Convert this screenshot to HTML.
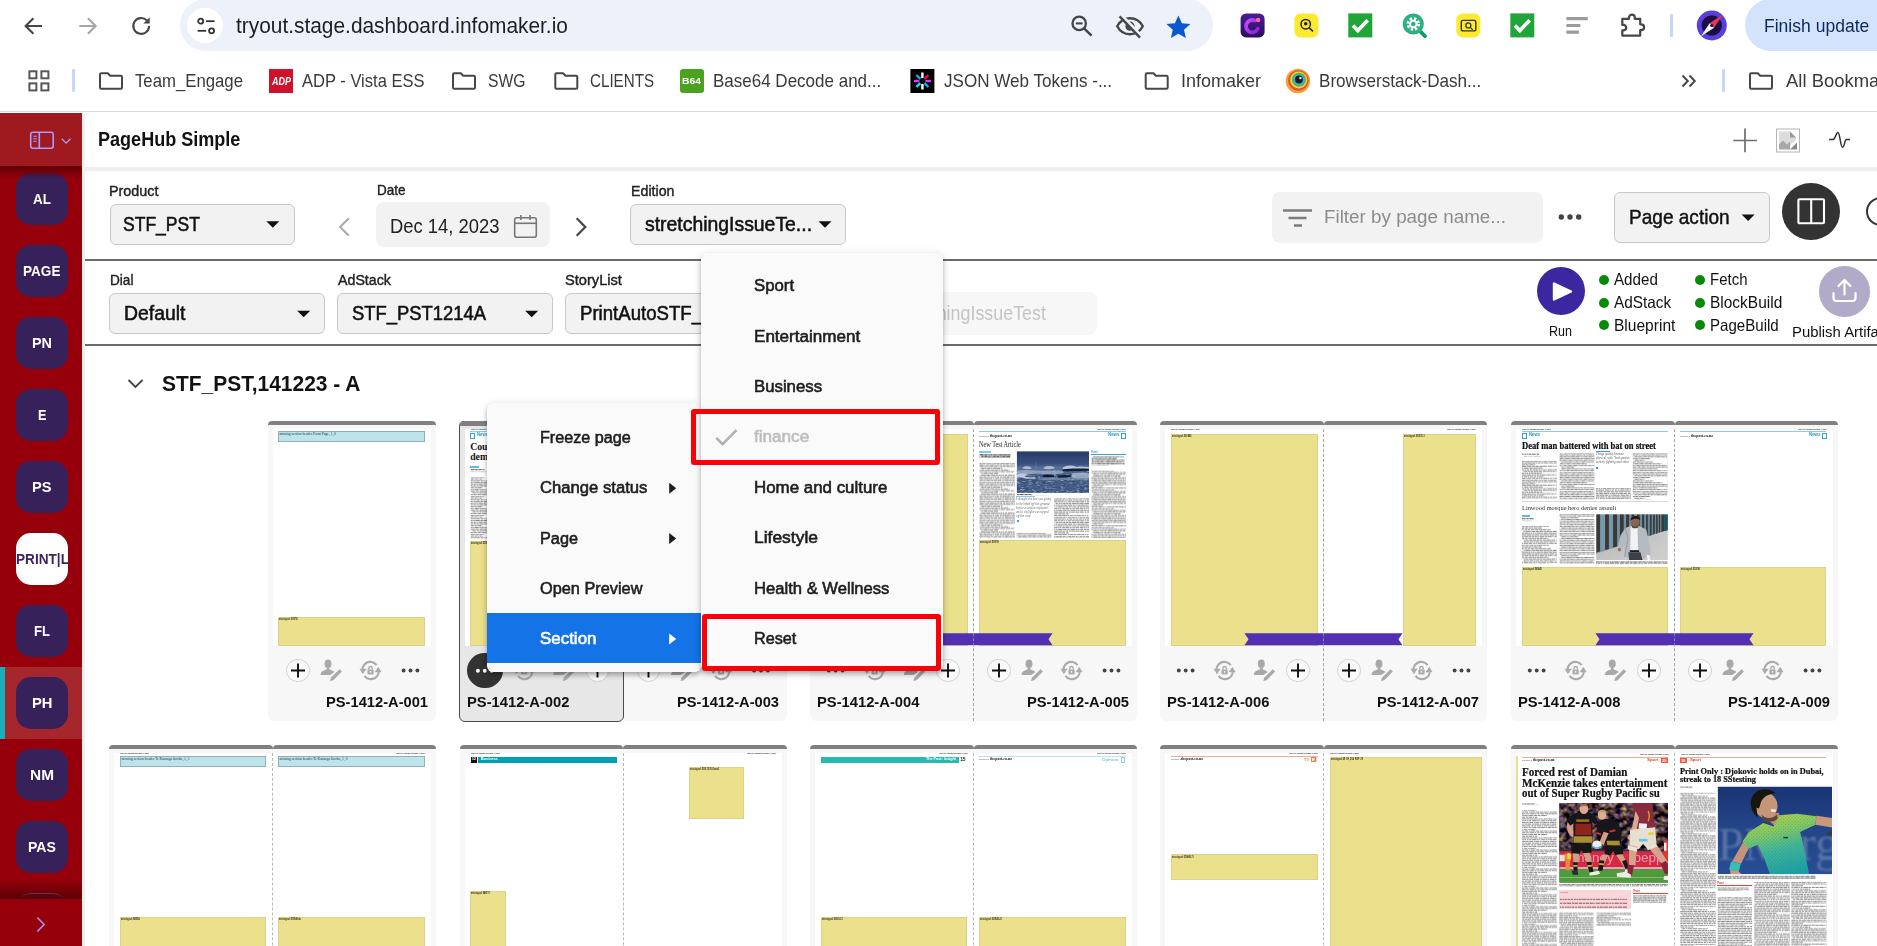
<!DOCTYPE html>
<html lang="en"><head><meta charset="utf-8"><title>PageHub Simple</title>
<style>
html,body{margin:0;padding:0;}
body{width:1877px;height:946px;overflow:hidden;position:relative;background:#fff;
 font-family:"Liberation Sans",sans-serif;}
#root{position:absolute;left:0;top:0;width:1877px;height:946px;overflow:hidden;}
#root div,#root svg,#root span.t{position:absolute;}
span.t{white-space:nowrap;line-height:1;transform-origin:0 50%;display:block;}
.tx{overflow:hidden;}
</style></head>
<body><div id="root">
<div style="left:85.00px;top:171.30px;width:1800.00px;height:780.00px;background:#fff;border-radius:4px 0 0 0;"></div>
<span class="t" style="left:109.20px;top:184.00px;font-size:14.53px;color:#222;-webkit-text-stroke:0.4px #222;transform:scaleX(0.9882);">Product</span>
<div style="left:109.50px;top:204.30px;width:185.00px;height:40.30px;background:#f2f2f2;border-radius:6px;box-sizing:border-box;border:1px solid #c8c8c8;"></div>
<span class="t" style="left:122.80px;top:214.00px;font-size:20.35px;color:#111;-webkit-text-stroke:0.55px #111;transform:scaleX(0.8620);">STF_PST</span>
<svg style="left:266px;top:221px;" width="14.00" height="7.50" viewBox="-0.300 -0.300 14.000 7.500"><path d="M0 0h13l-6.5 6.5z" fill="#111"/></svg>
<svg style="left:338px;top:217px;" width="14.00" height="21.00" viewBox="0.000 0.000 14.000 21.000"><path d="M10.800 1.200L2.200 10l8.600 8.800" fill="none" stroke="#adadad" stroke-width="2.200"/></svg>
<span class="t" style="left:377.30px;top:183.00px;font-size:14.53px;color:#222;-webkit-text-stroke:0.4px #222;transform:scaleX(0.9283);">Date</span>
<div style="left:376.00px;top:202.00px;width:174.00px;height:45.00px;background:#f2f2f2;border-radius:8px;"></div>
<span class="t" style="left:390.30px;top:216.00px;font-size:20.35px;color:#222;transform:scaleX(0.9046);">Dec 14, 2023</span>
<svg style="left:513px;top:214px;" width="25.00" height="25.00" viewBox="-0.500 -0.500 25.000 25.000"><rect x="1.200" y="3.200" width="21.600" height="19.600" rx="2" fill="none" stroke="#777" stroke-width="1.600"/><path d="M1.200 8.800h21.600" stroke="#777" stroke-width="1.600"/><path d="M7.400 0.500v5M16.600 0.500v5" stroke="#777" stroke-width="1.600"/></svg>
<svg style="left:574px;top:217px;" width="14.00" height="21.00" viewBox="-0.500 0.000 14.000 21.000"><path d="M2.200 1.200L10.800 10l-8.600 8.800" fill="none" stroke="#454545" stroke-width="2.200"/></svg>
<span class="t" style="left:630.80px;top:184.00px;font-size:14.53px;color:#222;-webkit-text-stroke:0.4px #222;transform:scaleX(0.9788);">Edition</span>
<div style="left:630.00px;top:204.30px;width:216.00px;height:40.30px;background:#f2f2f2;border-radius:6px;box-sizing:border-box;border:1px solid #c8c8c8;"></div>
<span class="t" style="left:645.00px;top:214.00px;font-size:20.58px;color:#111;-webkit-text-stroke:0.55px #111;transform:scaleX(0.9421);">stretchingIssueTe...</span>
<svg style="left:818px;top:221px;" width="14.00" height="7.50" viewBox="-0.500 -0.300 14.000 7.500"><path d="M0 0h13l-6.5 6.5z" fill="#111"/></svg>
<div style="left:1271.50px;top:192.20px;width:271.00px;height:51.00px;background:#f2f2f2;border-radius:8px;"></div>
<svg style="left:1283px;top:209px;" width="31.00" height="19.00" viewBox="0.000 0.000 31.000 19.000"><path d="M0 1.500h29M5.500 9h18M11 16.500h8" stroke="#7d7d7d" stroke-width="2.600"/></svg>
<span class="t" style="left:1324.00px;top:208.00px;font-size:18.90px;color:#8c8c8c;transform:scaleX(0.9959);">Filter by page name...</span>
<svg style="left:1558px;top:213px;" width="25.00" height="8.00" viewBox="0.000 -0.500 25.000 8.000"><circle cx="3.300" cy="3.500" r="2.700" fill="#444"/><circle cx="12" cy="3.500" r="2.700" fill="#444"/><circle cx="20.700" cy="3.500" r="2.700" fill="#444"/></svg>
<div style="left:1614.40px;top:192.20px;width:156.00px;height:51.00px;background:#f2f2f2;border-radius:6px;box-sizing:border-box;border:1px solid #c8c8c8;"></div>
<span class="t" style="left:1628.80px;top:208.00px;font-size:19.75px;color:#111;-webkit-text-stroke:0.45px #111;transform:scaleX(0.9642);">Page action</span>
<svg style="left:1741px;top:214px;" width="14.00" height="7.50" viewBox="-0.600 -0.500 14.000 7.500"><path d="M0 0h13l-6.5 6.5z" fill="#111"/></svg>
<div style="left:1782.00px;top:182.60px;width:58.00px;height:57.40px;background:#333;border-radius:50%;"></div>
<svg style="left:1796px;top:197px;" width="31.00" height="29.00" viewBox="0.000 -0.500 31.000 29.000"><rect x="2.400" y="1.700" width="25.600" height="24.100" rx="1" fill="none" stroke="#fff" stroke-width="2.100"/><path d="M15.200 1.700v24.100" stroke="#fff" stroke-width="2.100"/></svg>
<div style="left:1865.80px;top:196.60px;width:29.40px;height:29.40px;border-radius:50%;box-sizing:border-box;border:2.600px solid #333;"></div>
<div style="left:85.00px;top:259.20px;width:1800.00px;height:2.00px;background:#6a6a6a;"></div>
<span class="t" style="left:109.60px;top:273.00px;font-size:14.53px;color:#222;-webkit-text-stroke:0.4px #222;transform:scaleX(0.9385);">Dial</span>
<div style="left:109.00px;top:293.20px;width:216.00px;height:40.60px;background:#f2f2f2;border-radius:6px;box-sizing:border-box;border:1px solid #c8c8c8;"></div>
<span class="t" style="left:124.00px;top:304.00px;font-size:19.77px;color:#111;-webkit-text-stroke:0.55px #111;transform:scaleX(0.9803);">Default</span>
<svg style="left:297px;top:310px;" width="14.00" height="7.50" viewBox="-0.200 -0.800 14.000 7.500"><path d="M0 0h13l-6.5 6.5z" fill="#111"/></svg>
<span class="t" style="left:337.60px;top:273.00px;font-size:14.53px;color:#222;-webkit-text-stroke:0.4px #222;transform:scaleX(0.9791);">AdStack</span>
<div style="left:337.00px;top:293.20px;width:216.00px;height:40.60px;background:#f2f2f2;border-radius:6px;box-sizing:border-box;border:1px solid #c8c8c8;"></div>
<span class="t" style="left:351.50px;top:304.00px;font-size:19.77px;color:#111;-webkit-text-stroke:0.55px #111;transform:scaleX(0.9310);">STF_PST1214A</span>
<svg style="left:525px;top:310px;" width="14.00" height="7.50" viewBox="-0.200 -0.800 14.000 7.500"><path d="M0 0h13l-6.5 6.5z" fill="#111"/></svg>
<span class="t" style="left:565.30px;top:273.00px;font-size:14.53px;color:#222;-webkit-text-stroke:0.4px #222;transform:scaleX(1.0081);">StoryList</span>
<div style="left:565.00px;top:293.20px;width:216.00px;height:40.60px;background:#f2f2f2;border-radius:6px;box-sizing:border-box;border:1px solid #c8c8c8;"></div>
<span class="t" style="left:579.50px;top:304.00px;font-size:19.77px;color:#111;-webkit-text-stroke:0.55px #111;transform:scaleX(0.9411);">PrintAutoSTF_</span>
<div style="left:880.00px;top:292.00px;width:217.00px;height:43.00px;background:#f7f7f7;border-radius:8px;"></div>
<span class="t" style="left:893.00px;top:304.00px;font-size:19.89px;color:#c4c4c4;transform:scaleX(0.8987);">stretchingIssueTest</span>
<div style="left:1536.80px;top:266.80px;width:48.20px;height:48.20px;background:#3d27a0;border-radius:50%;"></div>
<svg style="left:1551px;top:280px;" width="24.00" height="24.00" viewBox="0.000 0.000 24.000 24.000"><path d="M3 3.500v16l17-8z" fill="#fff" stroke="#fff" stroke-width="2.400" stroke-linejoin="round"/></svg>
<span class="t" style="left:1549.30px;top:325.00px;font-size:13.95px;color:#111;transform:scaleX(0.8985);">Run</span>
<div style="left:1599.00px;top:274.70px;width:10.00px;height:10.00px;background:#078a07;border-radius:50%;"></div>
<span class="t" style="left:1614.20px;top:271.00px;font-size:16.28px;color:#111;transform:scaleX(0.9326);">Added</span>
<div style="left:1695.00px;top:274.70px;width:10.00px;height:10.00px;background:#078a07;border-radius:50%;"></div>
<span class="t" style="left:1710.40px;top:271.00px;font-size:16.28px;color:#111;transform:scaleX(0.9211);">Fetch</span>
<div style="left:1599.00px;top:297.55px;width:10.00px;height:10.00px;background:#078a07;border-radius:50%;"></div>
<span class="t" style="left:1614.20px;top:294.00px;font-size:16.28px;color:#111;transform:scaleX(0.9435);">AdStack</span>
<div style="left:1695.00px;top:297.55px;width:10.00px;height:10.00px;background:#078a07;border-radius:50%;"></div>
<span class="t" style="left:1710.40px;top:294.00px;font-size:16.28px;color:#111;transform:scaleX(0.9512);">BlockBuild</span>
<div style="left:1599.00px;top:320.40px;width:10.00px;height:10.00px;background:#078a07;border-radius:50%;"></div>
<span class="t" style="left:1614.20px;top:317.00px;font-size:16.28px;color:#111;transform:scaleX(0.9556);">Blueprint</span>
<div style="left:1695.00px;top:320.40px;width:10.00px;height:10.00px;background:#078a07;border-radius:50%;"></div>
<span class="t" style="left:1710.40px;top:317.00px;font-size:16.28px;color:#111;transform:scaleX(0.9270);">PageBuild</span>
<div style="left:1819.00px;top:266.20px;width:50.50px;height:50.50px;background:#b1aac8;border-radius:50%;"></div>
<svg style="left:1831px;top:278px;" width="28.00" height="27.00" viewBox="0.000 0.000 28.000 27.000"><path d="M13.500 16.500V2.500M7.500 8l6-6 6 6" fill="none" stroke="#fff" stroke-width="2.200" stroke-linecap="round" stroke-linejoin="round"/><path d="M2.500 15v5a3 3 0 0 0 3 3h16a3 3 0 0 0 3-3v-5" fill="none" stroke="#fff" stroke-width="2.200" stroke-linecap="round"/></svg>
<span class="t" style="left:1791.80px;top:325.00px;font-size:14.24px;color:#111;transform:scaleX(1.0460);">Publish Artifacts</span>
<div style="left:85.00px;top:343.80px;width:1800.00px;height:2.00px;background:#6a6a6a;"></div>
<svg style="left:127px;top:378px;" width="18.00" height="12.00" viewBox="0.000 -0.500 18.000 12.000"><path d="M1.500 1.500l7 7 7-7" fill="none" stroke="#444" stroke-width="1.800"/></svg>
<span class="t" style="left:161.60px;top:373.00px;font-size:22.38px;color:#111;font-weight:700;transform:scaleX(0.9367);">STF_PST,141223 - A</span>
<div style="left:85.00px;top:112.50px;width:1800.00px;height:54.00px;background:#fff;border-radius:4px 0 0 4px;"></div>
<div style="left:85.00px;top:166.50px;width:1800.00px;height:4.80px;background:#efefef;"></div>
<span class="t" style="left:98.40px;top:129.00px;font-size:20.06px;color:#111;font-weight:700;transform:scaleX(0.9003);">PageHub Simple</span>
<svg style="left:1733px;top:128px;" width="25.00" height="25.00" viewBox="0.000 -0.500 25.000 25.000"><path d="M12 0v23.800M0.300 12h23.600" stroke="#6e6e6e" stroke-width="1.700"/></svg>
<svg style="left:1776px;top:128px;" width="25.00" height="25.00" viewBox="0.000 -0.500 25.000 25.000"><rect x="0.500" y="0.500" width="23" height="23" fill="#fff" stroke="#b5b5b5" stroke-width="1"/><path d="M3 3h11l6 6v2l-9 9H3z" fill="#dcdcdc"/><path d="M14 3v6h6z" fill="#9a9a9a"/><path d="M3 16l4-4 4 4 3-3v8H3z" fill="#a8a8a8"/><path d="M14 21l7-7v7z" fill="#8a8a8a"/></svg>
<svg style="left:1828px;top:130px;" width="24.00" height="20.00" viewBox="-0.500 -0.500 24.000 20.000"><path d="M0.600 9.100H4.400C6.600 9.100 7.600 2.100 9.400 2.100C11.600 2.100 11.900 16.800 14 16.800C15.900 16.800 16.200 9.100 18 9.100H21.500" fill="none" stroke="#333" stroke-width="1.500"/></svg>
<div style="left:268.00px;top:420.80px;width:168.00px;height:300.00px;background:#f7f7f7;border-radius:5px 5px 6px 6px;"></div>
<div style="left:268.00px;top:420.80px;width:168.00px;height:4.50px;background:#808080;border-radius:5px 5px 0 0;"></div>
<div style="left:272.50px;top:428.80px;width:158.50px;height:217.20px;background:#fff;overflow:hidden;"><div style="left:5.40px;top:2.50px;width:147.10px;height:10.40px;background:#bce4ea;box-sizing:border-box;border:0.5px solid #8fb0b5;"><span class="t" style="left:0.50px;top:0.60px;font-size:3.6px;line-height:1;color:#234;font-family:'Liberation Serif',serif;">missing section header Front Page_1_0</span></div><div style="left:5.50px;top:188.00px;width:147.00px;height:29.30px;background:#ebe08b;box-sizing:border-box;border:0.5px solid #dcd188;"><span class="t" style="left:0.20px;top:0.10px;font-size:2.9px;line-height:1;color:#221;font-weight:700;transform:scaleX(0.7069);">missing ad: 519755</span></div></div>
<div style="left:286.20px;top:658.70px;width:23.60px;height:23.60px;background:#fafafa;border-radius:50%;box-sizing:border-box;border:1px solid #d2d2d2;"></div><svg style="left:290px;top:662px;" width="17.00" height="17.00" viewBox="-0.000 -0.500 17.000 17.000"><path d="M8 1v14M1 8h14" stroke="#111" stroke-width="1.900"/></svg>
<svg style="left:320px;top:659px;" width="23.00" height="23.00" viewBox="-0.000 -0.500 23.000 23.000"><ellipse cx="8" cy="4.300" rx="3.500" ry="4.300" fill="#a9a9a9"/><path d="M0.500 15.600c0-2.600 1.200-4 3.300-4.700l2.700-1 .300-1.600h2.400l.300 1.600 2.700 1c1 .350 1.800.900 2.300 1.700L10.200 15.600z" fill="#a9a9a9"/><path d="M10 21.600l.900-3.300 8.600-8.600 2.400 2.400-8.600 8.600z" fill="#a9a9a9"/></svg>
<svg style="left:359px;top:660px;" width="24.00" height="21.00" viewBox="-0.000 -0.500 24.000 21.000"><g fill="none" stroke="#ababab" stroke-width="2.100"><path d="M4.300 12.800A7.800 7.800 0 0 1 17.600 4.700"/><path d="M18.800 7.200A7.800 7.800 0 0 1 5.500 15.300"/></g><path d="M0.400 8.300h7.400l-4 5z" fill="#ababab"/><path d="M22.700 11.700h-7.400l4-5z" fill="#ababab"/><rect x="8.400" y="8.900" width="6.200" height="5" rx="0.700" fill="#ababab"/><path d="M9.800 9.100V7.700a1.700 1.700 0 0 1 3.400 0v1.400" fill="none" stroke="#ababab" stroke-width="1.300"/><circle cx="11.500" cy="11.400" r="0.800" fill="#f7f7f7"/></svg>
<svg style="left:400px;top:667px;" width="21.00" height="7.00" viewBox="-0.500 -0.500 21.000 7.000"><circle cx="3.100" cy="3" r="1.950" fill="#444"/><circle cx="10" cy="3" r="1.950" fill="#444"/><circle cx="16.900" cy="3" r="1.950" fill="#444"/></svg>
<span class="t" style="left:326.10px;top:695.00px;font-size:14.83px;color:#111;font-weight:700;transform:scaleX(0.9902);">PS-1412-A-001</span>
<div style="left:623.00px;top:420.80px;width:163.50px;height:300.00px;background:#f7f7f7;border-radius:5px 5px 6px 0;"></div>
<div style="left:623.00px;top:420.80px;width:163.50px;height:4.50px;background:#808080;border-radius:5px 5px 0 0;"></div>
<div style="left:623.00px;top:428.80px;width:158.50px;height:217.20px;background:#fff;overflow:hidden;"></div>
<div style="left:636.70px;top:658.70px;width:23.60px;height:23.60px;background:#fafafa;border-radius:50%;box-sizing:border-box;border:1px solid #d2d2d2;"></div><svg style="left:640px;top:662px;" width="17.00" height="17.00" viewBox="-0.500 -0.500 17.000 17.000"><path d="M8 1v14M1 8h14" stroke="#111" stroke-width="1.900"/></svg>
<svg style="left:670px;top:659px;" width="23.00" height="23.00" viewBox="-0.500 -0.500 23.000 23.000"><ellipse cx="8" cy="4.300" rx="3.500" ry="4.300" fill="#a9a9a9"/><path d="M0.500 15.600c0-2.600 1.200-4 3.300-4.700l2.700-1 .300-1.600h2.400l.300 1.600 2.700 1c1 .350 1.800.900 2.300 1.700L10.200 15.600z" fill="#a9a9a9"/><path d="M10 21.600l.900-3.300 8.600-8.600 2.400 2.400-8.600 8.600z" fill="#a9a9a9"/></svg>
<svg style="left:709px;top:660px;" width="24.00" height="21.00" viewBox="-0.500 -0.500 24.000 21.000"><g fill="none" stroke="#ababab" stroke-width="2.100"><path d="M4.300 12.800A7.800 7.800 0 0 1 17.600 4.700"/><path d="M18.800 7.200A7.800 7.800 0 0 1 5.500 15.300"/></g><path d="M0.400 8.300h7.400l-4 5z" fill="#ababab"/><path d="M22.700 11.700h-7.400l4-5z" fill="#ababab"/><rect x="8.400" y="8.900" width="6.200" height="5" rx="0.700" fill="#ababab"/><path d="M9.800 9.100V7.700a1.700 1.700 0 0 1 3.400 0v1.400" fill="none" stroke="#ababab" stroke-width="1.300"/><circle cx="11.500" cy="11.400" r="0.800" fill="#f7f7f7"/></svg>
<svg style="left:751px;top:667px;" width="21.00" height="7.00" viewBox="-0.000 -0.500 21.000 7.000"><circle cx="3.100" cy="3" r="1.950" fill="#444"/><circle cx="10" cy="3" r="1.950" fill="#444"/><circle cx="16.900" cy="3" r="1.950" fill="#444"/></svg>
<span class="t" style="left:676.60px;top:695.00px;font-size:14.83px;color:#111;font-weight:700;transform:scaleX(0.9902);">PS-1412-A-003</span>
<div style="left:459.00px;top:420.80px;width:164.70px;height:301.20px;background:#e7e7e7;border-radius:5px 5px 6px 6px;box-sizing:border-box;border:1.200px solid #4a4a4a;"></div>
<div style="left:459.00px;top:420.80px;width:164.70px;height:5.00px;background:#808080;border-radius:5px 5px 0 0;"></div>
<div style="left:464.50px;top:428.80px;width:158.50px;height:217.20px;background:#fff;overflow:hidden;"><span class="t" style="left:6.00px;top:0.40px;font-size:2.4px;line-height:1;color:#222;font-weight:700;transform:scaleX(0.6182);">THE POST  Thursday, December 14, 2023</span><div style="left:5.70px;top:2.70px;width:146.00px;height:0.90px;background:#86cdea;"></div><div style="left:5.70px;top:4.20px;width:4.60px;height:5.60px;background:#fff;box-sizing:border-box;border:0.8px solid #2aa5dc;"></div><span class="t" style="left:12.30px;top:4.70px;font-size:4.7px;line-height:1.0;color:#1e9bd7;font-weight:700;transform:scaleX(0.9122);">News</span><span class="t" style="left:5.70px;top:13.00px;font-size:9.77px;color:#111;font-weight:700;font-family:'Liberation Serif',serif;">Cou</span><span class="t" style="left:5.70px;top:23.00px;font-size:9.77px;color:#111;font-weight:700;font-family:'Liberation Serif',serif;">dem</span><div style="left:5.70px;top:37.00px;width:9.00px;height:2.30px;background:#5bbde6;"></div><svg style="left:5px;top:40px;" width="15.00" height="2.20" viewBox="-0.700 -0.200 15.000 2.200"><defs><pattern id="lp1" width="14" height="18.70" patternUnits="userSpaceOnUse"><g stroke="#222" stroke-width="0.9" fill="none"><path d="M0 0.45H14.0" stroke-dasharray="3.6 0.5 3.0 0.6 3.6 0.5 1.8 0.6"/><path d="M0 2.15H10.8" stroke-dasharray="4.4 0.5 1.2 0.8 3.0 0.6 1.2 0.5 4.4 0.6"/><path d="M0 3.85H14.0" stroke-dasharray="3.0 0.6 2.4 0.8 2.4 0.6 1.8 0.8 2.4 0.8"/><path d="M0 5.55H14.0" stroke-dasharray="1.8 0.6 3.6 0.6 1.2 0.8 1.2 0.5 1.8 0.5 2.4 0.8"/><path d="M0 7.25H14.0" stroke-dasharray="2.4 0.8 3.6 0.6 3.0 0.6 1.2 0.8 3.6 0.6"/><path d="M0 8.95H14.0" stroke-dasharray="1.8 0.6 1.8 0.5 1.2 0.6 2.4 0.8 4.4 0.5"/><path d="M0 10.65H14.0" stroke-dasharray="1.8 0.6 3.6 0.6 3.6 0.5 1.2 0.5 3.0 0.5"/><path d="M0 12.35H5.1" stroke-dasharray="2.4 0.6 3.0 0.6 1.8 0.8 2.4 0.5 3.6 0.8"/><path d="M0 14.05H9.7" stroke-dasharray="1.8 0.8 4.4 0.5 1.8 0.6 2.4 0.6 3.0 0.5"/><path d="M0 15.75H14.0" stroke-dasharray="2.4 0.5 1.2 0.6 3.0 0.6 3.6 0.5 3.0 0.6"/><path d="M0 17.45H14.0" stroke-dasharray="3.6 0.6 3.6 0.6 3.6 0.6 1.2 0.5"/></g></pattern></defs><rect width="14" height="1.2" fill="url(#lp1)"/></svg><svg style="left:5px;top:42px;" width="18.00" height="1.80" viewBox="-0.700 -0.400 18.000 1.800"><defs><pattern id="lp2" width="17" height="18.70" patternUnits="userSpaceOnUse"><g stroke="#888" stroke-width="0.8" fill="none"><path d="M0 0.40H17.0" stroke-dasharray="3.6 0.6 2.4 0.6 2.4 0.5 4.4 0.8 3.6 0.8"/><path d="M0 2.10H17.0" stroke-dasharray="1.8 0.6 4.4 0.6 2.4 0.8 2.4 0.8 4.4 0.8"/><path d="M0 3.80H17.0" stroke-dasharray="1.2 0.5 1.8 0.5 4.4 0.8 3.6 0.8 1.8 0.6 3.6 0.5"/><path d="M0 5.50H17.0" stroke-dasharray="2.4 0.6 1.2 0.8 3.0 0.8 3.6 0.5 4.4 0.6"/><path d="M0 7.20H17.0" stroke-dasharray="1.2 0.6 2.4 0.8 1.2 0.8 2.4 0.5 3.0 0.6 3.6 0.5"/><path d="M0 8.90H17.0" stroke-dasharray="3.6 0.5 1.8 0.8 2.4 0.5 2.4 0.5 2.4 0.5 4.4 0.8"/><path d="M1.6 10.60H17.0" stroke-dasharray="1.8 0.6 4.4 0.6 2.4 0.6 1.8 0.6 1.2 0.8 3.6 0.6"/><path d="M1.6 12.30H17.0" stroke-dasharray="2.4 0.5 3.0 0.8 2.4 0.6 4.4 0.5 4.4 0.5"/><path d="M0 14.00H17.0" stroke-dasharray="4.4 0.6 1.2 0.8 3.6 0.8 4.4 0.5 3.0 0.6"/><path d="M0 15.70H17.0" stroke-dasharray="3.6 0.6 1.8 0.5 2.4 0.5 4.4 0.5 1.8 0.5 3.6 0.6"/><path d="M0 17.40H17.0" stroke-dasharray="2.4 0.5 1.8 0.6 1.2 0.8 2.4 0.6 4.4 0.6 3.0 0.5"/></g></pattern></defs><rect width="17" height="0.8" fill="url(#lp2)"/></svg><svg style="left:5px;top:48px;" width="35.80" height="62.50" viewBox="-0.700 -0.200 35.800 62.500"><defs><pattern id="lp3" width="34.8" height="18.92" patternUnits="userSpaceOnUse"><g stroke="#474747" stroke-width="0.64" fill="none"><path d="M0 0.32H13.7" stroke-dasharray="4.4 0.6 3.6 0.5 1.8 0.5 1.8 0.5 4.4 0.8 1.2 0.8 1.8 0.8 2.4 0.8 1.2 0.6 3.0 0.8 4.4 0.5"/><path d="M0 2.04H12.3" stroke-dasharray="3.0 0.8 2.4 0.6 1.2 0.8 2.4 0.8 1.8 0.8 2.4 0.6 1.2 0.8 4.4 0.6 4.4 0.5 1.8 0.6 2.4 0.8"/><path d="M0 3.76H34.8" stroke-dasharray="1.8 0.6 2.4 0.6 3.6 0.8 2.4 0.5 1.2 0.8 3.0 0.5 4.4 0.5 2.4 0.6 1.8 0.8 3.6 0.5 3.0 0.8"/><path d="M0 5.48H34.8" stroke-dasharray="1.8 0.8 1.8 0.5 4.4 0.5 2.4 0.6 4.4 0.8 4.4 0.5 3.0 0.5 2.4 0.6 1.2 0.6 2.4 0.6 2.4 0.5"/><path d="M0 7.20H34.8" stroke-dasharray="2.4 0.5 2.4 0.5 1.2 0.6 4.4 0.6 3.0 0.6 1.2 0.5 1.2 0.6 4.4 0.6 3.0 0.8 3.0 0.8 3.6 0.6"/><path d="M0 8.92H34.8" stroke-dasharray="2.4 0.6 2.4 0.6 1.8 0.6 4.4 0.5 3.6 0.8 1.2 0.6 3.6 0.5 4.4 0.8 3.0 0.6 4.4 0.6"/><path d="M0 10.64H11.4" stroke-dasharray="3.0 0.8 2.4 0.6 4.4 0.5 3.0 0.5 3.0 0.6 1.2 0.5 1.8 0.5 3.6 0.8 3.6 0.5 3.0 0.5"/><path d="M0 12.36H34.8" stroke-dasharray="1.2 0.5 1.2 0.8 4.4 0.6 1.2 0.5 2.4 0.6 1.2 0.5 1.2 0.5 3.6 0.5 3.6 0.8 3.0 0.8 4.4 0.6 2.4 0.8"/><path d="M0 14.08H34.8" stroke-dasharray="4.4 0.6 3.0 0.8 4.4 0.5 2.4 0.5 1.8 0.8 1.8 0.5 1.8 0.6 2.4 0.6 1.8 0.8 3.6 0.5 1.8 0.5"/><path d="M1.6 15.80H34.8" stroke-dasharray="3.6 0.8 1.8 0.6 3.0 0.5 1.8 0.5 3.0 0.8 3.6 0.6 3.6 0.6 3.0 0.8 1.8 0.5 1.8 0.5 1.8 0.8"/><path d="M0 17.52H34.8" stroke-dasharray="2.4 0.6 3.0 0.8 3.6 0.8 3.6 0.5 2.4 0.6 1.8 0.6 3.0 0.8 2.4 0.5 1.8 0.6 4.4 0.8"/></g></pattern></defs><rect width="34.8" height="61.5" fill="url(#lp3)"/></svg><svg style="left:43px;top:48px;" width="35.80" height="62.50" viewBox="-0.300 -0.200 35.800 62.500"><defs><pattern id="lp4" width="34.8" height="18.92" patternUnits="userSpaceOnUse"><g stroke="#474747" stroke-width="0.64" fill="none"><path d="M0 0.32H34.8" stroke-dasharray="1.2 0.6 1.2 0.6 1.8 0.8 1.2 0.5 1.2 0.8 1.8 0.8 1.8 0.5 4.4 0.5 4.4 0.5 1.8 0.5 3.6 0.8 3.0 0.8"/><path d="M0 2.04H34.8" stroke-dasharray="1.2 0.5 1.2 0.6 2.4 0.5 1.8 0.6 3.0 0.6 3.6 0.5 1.8 0.8 1.8 0.6 3.6 0.8 3.6 0.5 1.2 0.5 2.4 0.5 1.8 0.5"/><path d="M0 3.76H34.8" stroke-dasharray="1.2 0.5 4.4 0.8 3.0 0.8 1.8 0.5 3.0 0.8 2.4 0.5 2.4 0.8 1.8 0.6 1.2 0.6 2.4 0.6 2.4 0.8 3.0 0.6"/><path d="M0 5.48H34.8" stroke-dasharray="1.8 0.8 1.2 0.6 1.8 0.8 3.6 0.8 4.4 0.6 1.2 0.5 1.8 0.5 3.6 0.6 4.4 0.5 4.4 0.6 2.4 0.6"/><path d="M0 7.20H34.8" stroke-dasharray="1.8 0.5 3.0 0.5 2.4 0.6 3.0 0.5 3.6 0.8 1.2 0.6 1.2 0.8 1.2 0.5 1.8 0.6 1.8 0.8 1.8 0.6 1.2 0.6 3.6 0.8"/><path d="M0 8.92H34.8" stroke-dasharray="3.6 0.6 4.4 0.8 1.2 0.5 3.0 0.5 4.4 0.8 4.4 0.6 1.2 0.6 3.0 0.6 2.4 0.5 1.2 0.5"/><path d="M0 10.64H34.8" stroke-dasharray="1.8 0.5 1.8 0.5 3.6 0.8 1.2 0.8 1.8 0.5 2.4 0.8 1.8 0.8 3.0 0.8 4.4 0.8 3.6 0.8 3.6 0.6"/><path d="M0 12.36H17.7" stroke-dasharray="3.6 0.6 2.4 0.8 3.0 0.6 1.8 0.6 1.2 0.8 2.4 0.8 1.8 0.6 4.4 0.6 3.6 0.5 1.2 0.8 1.2 0.8 3.0 0.5"/><path d="M0 14.08H34.8" stroke-dasharray="3.0 0.8 2.4 0.8 3.6 0.5 2.4 0.8 1.2 0.5 3.0 0.8 2.4 0.6 3.6 0.5 3.0 0.8 2.4 0.5 3.0 0.5"/><path d="M0 15.80H34.8" stroke-dasharray="1.8 0.5 1.8 0.6 2.4 0.6 4.4 0.6 1.2 0.5 1.2 0.5 3.6 0.8 3.0 0.6 3.0 0.8 2.4 0.8 1.8 0.6 1.2 0.5"/><path d="M1.6 17.52H34.8" stroke-dasharray="3.0 0.5 1.2 0.6 3.0 0.6 2.4 0.6 1.8 0.8 2.4 0.6 1.8 0.5 3.6 0.5 4.4 0.8 2.4 0.5 4.4 0.8"/></g></pattern></defs><rect width="34.8" height="61.5" fill="url(#lp4)"/></svg><div style="left:5.70px;top:112.00px;width:146.00px;height:105.00px;background:#ebe08b;box-sizing:border-box;border:0.5px solid #dcd188;"><span class="t" style="left:0.20px;top:0.10px;font-size:2.9px;line-height:1;color:#221;font-weight:700;transform:scaleX(0.7069);">missing ad: 519711</span></div></div>
<div style="left:467.00px;top:652.90px;width:35.60px;height:35.60px;background:#333;border-radius:50%;"></div>
<svg style="left:474px;top:667px;" width="21.00" height="7.00" viewBox="-0.800 -0.700 21.000 7.000"><circle cx="3.100" cy="3" r="1.950" fill="#fff"/><circle cx="10" cy="3" r="1.950" fill="#fff"/><circle cx="16.900" cy="3" r="1.950" fill="#fff"/></svg>
<svg style="left:512px;top:660px;" width="24.00" height="21.00" viewBox="-0.600 -0.500 24.000 21.000"><g fill="none" stroke="#ababab" stroke-width="2.100"><path d="M4.300 12.800A7.800 7.800 0 0 1 17.600 4.700"/><path d="M18.800 7.200A7.800 7.800 0 0 1 5.500 15.300"/></g><path d="M0.400 8.300h7.400l-4 5z" fill="#ababab"/><path d="M22.700 11.700h-7.400l4-5z" fill="#ababab"/><rect x="8.400" y="8.900" width="6.200" height="5" rx="0.700" fill="#ababab"/><path d="M9.800 9.100V7.700a1.700 1.700 0 0 1 3.400 0v1.400" fill="none" stroke="#ababab" stroke-width="1.300"/><circle cx="11.500" cy="11.400" r="0.800" fill="#f7f7f7"/></svg>
<svg style="left:552px;top:659px;" width="23.00" height="23.00" viewBox="-0.800 -0.500 23.000 23.000"><ellipse cx="8" cy="4.300" rx="3.500" ry="4.300" fill="#a9a9a9"/><path d="M0.500 15.600c0-2.600 1.200-4 3.300-4.700l2.700-1 .300-1.600h2.400l.300 1.600 2.700 1c1 .350 1.800.900 2.300 1.700L10.200 15.600z" fill="#a9a9a9"/><path d="M10 21.600l.900-3.300 8.600-8.600 2.400 2.400-8.600 8.600z" fill="#a9a9a9"/></svg>
<div style="left:585.70px;top:658.70px;width:23.60px;height:23.60px;background:#fafafa;border-radius:50%;box-sizing:border-box;border:1px solid #d2d2d2;"></div><svg style="left:589px;top:662px;" width="17.00" height="17.00" viewBox="-0.500 -0.500 17.000 17.000"><path d="M8 1v14M1 8h14" stroke="#111" stroke-width="1.900"/></svg>
<span class="t" style="left:466.80px;top:695.00px;font-size:14.83px;color:#111;font-weight:700;transform:scaleX(0.9941);">PS-1412-A-002</span>
<div style="left:810.00px;top:420.80px;width:163.50px;height:300.00px;background:#f7f7f7;border-radius:5px 5px 0 6px;"></div>
<div style="left:810.00px;top:420.80px;width:163.50px;height:4.50px;background:#808080;border-radius:5px 5px 0 0;"></div>
<div style="left:815.00px;top:428.80px;width:158.50px;height:217.20px;background:#fff;overflow:hidden;"><span class="t" style="left:6.00px;top:0.60px;font-size:2.4px;line-height:1;color:#222;font-weight:700;transform:scaleX(0.6182);">THE POST  Thursday, December 14, 2023</span><div style="left:5.90px;top:5.40px;width:146.90px;height:211.60px;background:#ebe08b;box-sizing:border-box;border:0.5px solid #dcd188;"><span class="t" style="left:0.20px;top:0.10px;font-size:2.9px;line-height:1;color:#221;font-weight:700;transform:scaleX(0.7069);">missing ad: 520311</span></div></div>
<svg style="left:825px;top:667px;" width="21.00" height="7.00" viewBox="-0.700 -0.500 21.000 7.000"><circle cx="3.100" cy="3" r="1.950" fill="#444"/><circle cx="10" cy="3" r="1.950" fill="#444"/><circle cx="16.900" cy="3" r="1.950" fill="#444"/></svg>
<svg style="left:863px;top:660px;" width="24.00" height="21.00" viewBox="-0.100 -0.500 24.000 21.000"><g fill="none" stroke="#ababab" stroke-width="2.100"><path d="M4.300 12.800A7.800 7.800 0 0 1 17.600 4.700"/><path d="M18.800 7.200A7.800 7.800 0 0 1 5.500 15.300"/></g><path d="M0.400 8.300h7.400l-4 5z" fill="#ababab"/><path d="M22.700 11.700h-7.400l4-5z" fill="#ababab"/><rect x="8.400" y="8.900" width="6.200" height="5" rx="0.700" fill="#ababab"/><path d="M9.800 9.100V7.700a1.700 1.700 0 0 1 3.400 0v1.400" fill="none" stroke="#ababab" stroke-width="1.300"/><circle cx="11.500" cy="11.400" r="0.800" fill="#f7f7f7"/></svg>
<svg style="left:903px;top:659px;" width="23.00" height="23.00" viewBox="-0.300 -0.500 23.000 23.000"><ellipse cx="8" cy="4.300" rx="3.500" ry="4.300" fill="#a9a9a9"/><path d="M0.500 15.600c0-2.600 1.200-4 3.300-4.700l2.700-1 .300-1.600h2.400l.300 1.600 2.700 1c1 .350 1.800.900 2.300 1.700L10.200 15.600z" fill="#a9a9a9"/><path d="M10 21.600l.900-3.300 8.600-8.600 2.400 2.400-8.600 8.600z" fill="#a9a9a9"/></svg>
<div style="left:936.20px;top:658.70px;width:23.60px;height:23.60px;background:#fafafa;border-radius:50%;box-sizing:border-box;border:1px solid #d2d2d2;"></div><svg style="left:940px;top:662px;" width="17.00" height="17.00" viewBox="0.000 -0.500 17.000 17.000"><path d="M8 1v14M1 8h14" stroke="#111" stroke-width="1.900"/></svg>
<span class="t" style="left:817.30px;top:695.00px;font-size:14.83px;color:#111;font-weight:700;transform:scaleX(0.9941);">PS-1412-A-004</span>
<div style="left:973.50px;top:420.80px;width:163.50px;height:300.00px;background:#f7f7f7;border-radius:5px 5px 6px 0;"></div>
<div style="left:973.50px;top:420.80px;width:163.50px;height:4.50px;background:#808080;border-radius:5px 5px 0 0;"></div>
<div style="left:973.50px;top:428.80px;width:158.50px;height:217.20px;background:#fff;overflow:hidden;"><span class="t" style="left:123.50px;top:0.40px;font-size:2.4px;line-height:1;color:#222;font-weight:700;transform:scaleX(0.6182);">THE POST  Thursday, December 14, 2023</span><div style="left:5.50px;top:2.70px;width:146.60px;height:0.90px;background:#86cdea;"></div><span class="t" style="left:16.00px;top:5.30px;font-size:4.2px;line-height:1.0;color:#111;font-weight:700;font-family:'Liberation Serif',serif;transform:scaleX(0.9429);">thepost.co.nz</span><span class="t" style="left:5.50px;top:6.80px;font-size:1.9px;line-height:1;color:#444;transform:scaleX(0.9283);">read more at</span><span class="t" style="left:134.90px;top:4.70px;font-size:4.7px;line-height:1.0;color:#1e9bd7;font-weight:700;transform:scaleX(0.9285);">News</span><div style="left:147.70px;top:4.20px;width:4.60px;height:5.60px;background:#fff;box-sizing:border-box;border:0.8px solid #2aa5dc;"></div><span class="t" style="left:5.50px;top:12.00px;font-size:7.63px;color:#222;font-family:'Liberation Serif',serif;transform:scaleX(0.8121);">New Test Article</span><div style="left:5.50px;top:22.20px;width:11.50px;height:2.50px;background:#7fcbe8;"></div><svg style="left:5px;top:25px;" width="32.00" height="4.40" viewBox="-0.500 -0.300 32.000 4.400"><defs><pattern id="lp5" width="31" height="18.70" patternUnits="userSpaceOnUse"><g stroke="#111" stroke-width="1.0" fill="none"><path d="M0 0.50H31.0" stroke-dasharray="4.4 0.6 3.0 0.8 1.2 0.5 2.4 0.8 3.0 0.6 1.2 0.8 4.4 0.5 3.6 0.6 2.4 0.6"/><path d="M1.6 2.20H31.0" stroke-dasharray="2.4 0.6 3.6 0.6 1.8 0.8 1.2 0.8 3.0 0.5 3.0 0.8 1.8 0.5 3.0 0.6 4.4 0.8 4.4 0.8"/><path d="M0 3.90H31.0" stroke-dasharray="1.2 0.6 1.2 0.8 1.8 0.6 1.2 0.5 3.0 0.6 4.4 0.5 2.4 0.6 3.0 0.6 2.4 0.8 2.4 0.5 3.0 0.6"/><path d="M0 5.60H31.0" stroke-dasharray="2.4 0.5 1.8 0.8 4.4 0.8 1.8 0.6 4.4 0.5 1.8 0.6 1.8 0.6 1.2 0.5 4.4 0.8 4.4 0.8"/><path d="M0 7.30H31.0" stroke-dasharray="3.6 0.5 1.8 0.6 1.8 0.8 3.0 0.8 1.2 0.5 3.6 0.8 1.2 0.8 3.0 0.5 1.8 0.6 1.8 0.8 3.6 0.8"/><path d="M0 9.00H31.0" stroke-dasharray="1.2 0.6 4.4 0.6 4.4 0.8 1.2 0.5 3.0 0.8 3.6 0.8 1.8 0.6 2.4 0.5 3.0 0.5 1.2 0.8"/><path d="M0 10.70H31.0" stroke-dasharray="1.2 0.5 3.6 0.8 1.2 0.8 4.4 0.6 3.6 0.6 2.4 0.8 4.4 0.5 3.0 0.6 3.0 0.8"/><path d="M0 12.40H12.3" stroke-dasharray="1.8 0.6 3.6 0.8 1.2 0.8 4.4 0.6 3.6 0.6 1.8 0.5 4.4 0.8 1.8 0.5 3.6 0.6"/><path d="M0 14.10H31.0" stroke-dasharray="2.4 0.5 3.0 0.6 1.2 0.8 3.0 0.6 4.4 0.5 4.4 0.5 1.8 0.8 2.4 0.6 1.2 0.5 3.6 0.8"/><path d="M0 15.80H31.0" stroke-dasharray="1.2 0.8 1.2 0.5 4.4 0.8 3.0 0.6 2.4 0.6 2.4 0.8 3.0 0.5 3.0 0.6 3.0 0.8 3.6 0.6"/><path d="M0 17.50H31.0" stroke-dasharray="4.4 0.6 3.6 0.5 3.0 0.8 2.4 0.6 2.4 0.5 3.0 0.8 1.2 0.5 2.4 0.6 3.6 0.6"/></g></pattern></defs><rect width="31" height="3.4" fill="url(#lp5)"/></svg><svg style="left:5px;top:33px;" width="36.30" height="76.00" viewBox="-0.500 -0.800 36.300 76.000"><defs><pattern id="lp6" width="35.3" height="18.92" patternUnits="userSpaceOnUse"><g stroke="#474747" stroke-width="0.64" fill="none"><path d="M0 0.32H35.3" stroke-dasharray="2.4 0.6 3.0 0.6 1.2 0.6 2.4 0.5 1.2 0.6 1.2 0.5 2.4 0.5 2.4 0.8 4.4 0.5 3.6 0.5 1.8 0.6 4.4 0.5"/><path d="M0 2.04H35.3" stroke-dasharray="4.4 0.6 1.2 0.8 3.0 0.5 4.4 0.5 1.2 0.5 2.4 0.6 2.4 0.8 2.4 0.5 3.0 0.5 1.2 0.6 2.4 0.6 4.4 0.8"/><path d="M0 3.76H35.3" stroke-dasharray="4.4 0.8 3.6 0.8 4.4 0.6 3.6 0.8 1.2 0.6 2.4 0.5 2.4 0.5 4.4 0.5 1.8 0.6 4.4 0.8"/><path d="M1.6 5.48H22.7" stroke-dasharray="3.0 0.6 1.8 0.8 3.0 0.8 1.2 0.8 3.0 0.5 3.6 0.8 1.2 0.8 3.6 0.8 4.4 0.8 2.4 0.6 2.4 0.5"/><path d="M0 7.20H29.9" stroke-dasharray="1.2 0.5 3.6 0.8 4.4 0.6 3.6 0.6 3.0 0.6 1.8 0.6 2.4 0.5 4.4 0.8 3.6 0.8 1.8 0.6"/><path d="M0 8.92H35.3" stroke-dasharray="2.4 0.6 1.2 0.5 3.6 0.5 1.2 0.5 1.2 0.8 1.8 0.6 3.6 0.5 1.2 0.8 4.4 0.8 4.4 0.6 3.0 0.8 2.4 0.6"/><path d="M1.6 10.64H18.6" stroke-dasharray="1.8 0.8 3.6 0.5 1.2 0.6 3.6 0.8 4.4 0.6 1.8 0.6 2.4 0.6 3.6 0.5 3.0 0.8 3.6 0.8"/><path d="M1.6 12.36H35.3" stroke-dasharray="4.4 0.6 4.4 0.8 4.4 0.5 1.8 0.8 1.8 0.5 1.2 0.5 1.2 0.8 2.4 0.8 4.4 0.6 2.4 0.6 3.6 0.8"/><path d="M0 14.08H35.3" stroke-dasharray="3.0 0.8 3.0 0.8 3.0 0.8 1.2 0.6 1.8 0.6 1.2 0.5 2.4 0.8 2.4 0.5 3.6 0.5 3.0 0.6 1.8 0.5 3.0 0.6"/><path d="M0 15.80H35.3" stroke-dasharray="3.6 0.8 4.4 0.6 3.6 0.8 1.2 0.8 3.6 0.8 1.8 0.8 1.8 0.5 4.4 0.5 1.8 0.8 2.4 0.6"/><path d="M0 17.52H35.3" stroke-dasharray="3.6 0.8 1.8 0.8 3.6 0.8 2.4 0.6 3.6 0.6 3.0 0.5 1.2 0.5 1.2 0.5 3.6 0.5 3.0 0.5 3.6 0.6"/></g></pattern></defs><rect width="35.3" height="75" fill="url(#lp6)"/></svg><svg style="left:42px;top:22px;" width="73.70" height="42.70" viewBox="-0.700 -0.200 73.700 42.700"><svg x="0" y="0" width="72.7" height="41.7" viewBox="0 0 72.7 41.7" overflow="hidden"><defs><linearGradient id="sea1" x1="0" y1="0" x2="0" y2="1"><stop offset="0" stop-color="#283a67"/><stop offset="0.30" stop-color="#384f7f"/><stop offset="0.40" stop-color="#5a7099"/><stop offset="0.50" stop-color="#4f6891"/><stop offset="0.62" stop-color="#405982"/><stop offset="1" stop-color="#46608a"/></linearGradient><filter id="seab" x="-5%" y="-5%" width="110%" height="110%"><feGaussianBlur stdDeviation="0.600"/></filter><filter id="sean" x="0" y="0" width="100%" height="100%" color-interpolation-filters="sRGB"><feTurbulence type="fractalNoise" baseFrequency="0.25 0.6" numOctaves="2" seed="4"/><feColorMatrix type="matrix" values="0 0 0 0 0.72  0 0 0 0 0.80  0 0 0 0 0.92  2.2 0 0 0 -1.05"/></filter><filter id="sean2" x="0" y="0" width="100%" height="100%" color-interpolation-filters="sRGB"><feTurbulence type="fractalNoise" baseFrequency="0.3 0.7" numOctaves="2" seed="9"/><feColorMatrix type="matrix" values="0 0 0 0 0.12  0 0 0 0 0.18  0 0 0 0 0.32  0 2.0 0 0 -0.95"/></filter></defs><rect width="72.700" height="41.700" fill="url(#sea1)"/><rect x="0" y="19" width="72.700" height="22.700" filter="url(#sean)" opacity="0.8"/><rect x="0" y="19" width="72.700" height="22.700" filter="url(#sean2)" opacity="0.8"/><g filter="url(#seab)"><path d="M6 16.300c2-1.500 5-1.800 8-.600l1 1.500c-3 .800-6 .800-9 .200z" fill="#c4cfe2" opacity="0.800"/><path d="M27 16.200c3-1.700 7-1.900 10.500-.300l.500 1.500c-4 .700-7.500.700-11 .100z" fill="#c4cfe2" opacity="0.750"/><path d="M46 16.500c4-2.500 9-2.800 14-.800 4-.600 8-.400 12.700.400v1.800c-9 .900-18 .900-26.700 0z" fill="#c9d3e5" opacity="0.850"/><path d="M0 19.500c7-.900 15-.700 22 .300 6-.700 14-.800 24-.100l-.500 2.600c-9 .800-17 .700-24 0-8 .800-15 .700-21.500 0z" fill="#a9b8d2" opacity="0.700"/><path d="M0 23c4-1.200 8-.900 11 .400 3 1 5.500 1.100 8 .600l-1 3c-4 1-8 .700-11-.300-2.500-.600-5-.500-7 0z" fill="#d3dcea" opacity="0.850"/><path d="M55 22c5-1 11-1 17.700.200v4.300c-6 .800-12 .700-17.700-.300z" fill="#bac7dc" opacity="0.700"/><path d="M22 26.500c7-1 15-.800 24 0 8-.700 17-.600 26.700.300v1.700c-9 .900-18 .800-26.700.100-9 .800-17 .700-24 0z" fill="#8fa3c4" opacity="0.550"/><path d="M46 18.200c6-.900 14-1.100 26.700-.700v1.900c-9 .700-18 .700-26.700.300z" fill="#161d33"/><path d="M26 24.200c3-.700 7-.700 11.500 0l-.300 1.600c-4 .500-7 .500-11 0z" fill="#121829"/><path d="M40.700 24.400c4-.800 9-.800 13.500-.100l-.700 1.600c-4 .600-8 .600-12.500.100z" fill="#161d33"/><path d="M8 24.600c4-.600 8-.600 12 0l-.500 1.300c-4 .500-8 .400-11 0z" fill="#2a3858" opacity="0.700"/></g><path d="M19.300 10.300V21" stroke="#9aa9c6" stroke-width="0.350" opacity="0.800"/></svg></svg><svg style="left:42px;top:65px;" width="50.00" height="2.30" viewBox="-0.500 -0.000 50.000 2.300"><defs><pattern id="lp7" width="49" height="18.70" patternUnits="userSpaceOnUse"><g stroke="#333" stroke-width="0.85" fill="none"><path d="M0 0.42H15.6" stroke-dasharray="2.4 0.5 4.4 0.8 3.0 0.6 3.0 0.5 1.8 0.5 3.0 0.5 2.4 0.6 4.4 0.5 1.2 0.8 3.0 0.6 1.2 0.5 1.2 0.5 1.8 0.6 1.8 0.8 2.4 0.6 3.0 0.6"/><path d="M0 2.12H32.3" stroke-dasharray="3.0 0.5 3.6 0.6 4.4 0.6 3.6 0.5 1.8 0.6 3.6 0.8 3.6 0.8 1.8 0.6 1.2 0.6 1.8 0.8 3.0 0.8 4.4 0.8 3.0 0.8 1.2 0.5"/><path d="M0 3.82H49.0" stroke-dasharray="3.0 0.5 1.8 0.8 1.2 0.5 1.2 0.5 4.4 0.8 1.8 0.6 1.8 0.8 3.6 0.6 1.2 0.8 1.8 0.8 4.4 0.5 1.8 0.8 1.8 0.8 3.0 0.8 1.8 0.5 3.6 0.8"/><path d="M1.6 5.52H49.0" stroke-dasharray="3.0 0.8 4.4 0.5 1.2 0.8 4.4 0.5 1.2 0.8 3.6 0.5 2.4 0.6 1.2 0.6 1.2 0.5 3.6 0.5 1.2 0.8 4.4 0.8 3.0 0.8 4.4 0.5 1.8 0.6"/><path d="M0 7.22H49.0" stroke-dasharray="3.6 0.5 1.8 0.5 1.2 0.8 4.4 0.5 2.4 0.8 1.8 0.6 2.4 0.5 1.8 0.5 2.4 0.5 1.2 0.8 1.8 0.5 3.6 0.6 2.4 0.6 2.4 0.6 1.2 0.5 4.4 0.6 2.4 0.5"/><path d="M0 8.93H49.0" stroke-dasharray="1.2 0.6 4.4 0.5 4.4 0.6 2.4 0.6 3.0 0.8 4.4 0.8 3.0 0.8 1.2 0.8 3.6 0.8 3.0 0.6 4.4 0.5 3.6 0.5 4.4 0.5"/><path d="M0 10.62H49.0" stroke-dasharray="1.2 0.8 4.4 0.6 3.6 0.5 2.4 0.6 3.6 0.5 1.2 0.6 3.6 0.5 1.8 0.5 4.4 0.6 3.0 0.5 1.8 0.8 2.4 0.5 1.2 0.5 3.6 0.5 3.6 0.5"/><path d="M0 12.33H49.0" stroke-dasharray="4.4 0.6 3.6 0.6 3.0 0.5 3.0 0.5 3.6 0.5 2.4 0.8 3.6 0.5 2.4 0.6 1.8 0.5 1.2 0.5 1.2 0.8 4.4 0.6 3.0 0.8 1.8 0.5 3.0 0.6"/><path d="M0 14.03H49.0" stroke-dasharray="3.6 0.6 3.0 0.8 3.0 0.8 1.2 0.8 3.0 0.6 4.4 0.6 1.8 0.8 3.0 0.5 3.0 0.5 2.4 0.8 2.4 0.8 3.6 0.8 1.2 0.8 2.4 0.6 4.4 0.6"/><path d="M0 15.72H49.0" stroke-dasharray="3.6 0.8 2.4 0.8 1.2 0.8 3.0 0.5 3.0 0.6 1.8 0.6 1.8 0.6 4.4 0.8 3.0 0.8 3.6 0.6 3.0 0.5 1.2 0.6 3.0 0.6 1.2 0.8 1.8 0.6 2.4 0.5"/><path d="M0 17.43H49.0" stroke-dasharray="1.8 0.8 1.2 0.6 3.0 0.5 3.0 0.5 1.2 0.5 2.4 0.6 1.8 0.8 1.2 0.6 1.8 0.8 3.6 0.8 1.8 0.5 4.4 0.8 4.4 0.5 3.6 0.8 3.6 0.5 1.8 0.6"/></g></pattern></defs><rect width="49" height="1.3" fill="url(#lp7)"/></svg><div style="left:42.50px;top:67.00px;width:19.00px;height:0.90px;background:#7fcbe8;"></div><span class="t" style="left:42.70px;top:69.60px;font-size:3.5px;line-height:1.0;color:#6a6a6a;font-family:'Liberation Serif',serif;font-style:italic;transform:scaleX(0.8978);">I thought the box was going</span><span class="t" style="left:42.70px;top:73.72px;font-size:3.5px;line-height:1.0;color:#6a6a6a;font-family:'Liberation Serif',serif;font-style:italic;transform:scaleX(0.9424);">to be lifted off the ground</span><span class="t" style="left:42.70px;top:77.84px;font-size:3.5px;line-height:1.0;color:#6a6a6a;font-family:'Liberation Serif',serif;font-style:italic;transform:scaleX(0.8490);">before a window imploded</span><span class="t" style="left:42.70px;top:81.96px;font-size:3.5px;line-height:1.0;color:#6a6a6a;font-family:'Liberation Serif',serif;font-style:italic;transform:scaleX(0.9035);">and a skylight was ripped</span><span class="t" style="left:42.70px;top:86.08px;font-size:3.5px;line-height:1.0;color:#6a6a6a;font-family:'Liberation Serif',serif;font-style:italic;transform:scaleX(0.9400);">off the roof</span><div style="left:43.50px;top:91.30px;width:1.60px;height:1.60px;background:#2aa5dc;"></div><svg style="left:42px;top:103px;" width="36.00" height="6.20" viewBox="-0.500 -0.800 36.000 6.200"><defs><pattern id="lp8" width="35" height="18.92" patternUnits="userSpaceOnUse"><g stroke="#474747" stroke-width="0.64" fill="none"><path d="M0 0.32H29.7" stroke-dasharray="1.8 0.5 4.4 0.6 1.2 0.5 2.4 0.8 1.2 0.8 3.6 0.5 3.0 0.6 3.0 0.8 2.4 0.5 4.4 0.8 2.4 0.8"/><path d="M0 2.04H35.0" stroke-dasharray="1.2 0.5 2.4 0.8 1.2 0.6 2.4 0.5 1.2 0.5 4.4 0.5 3.6 0.8 1.2 0.6 2.4 0.5 4.4 0.8 4.4 0.8"/><path d="M1.6 3.76H35.0" stroke-dasharray="3.6 0.5 4.4 0.6 1.2 0.5 3.0 0.6 3.6 0.8 1.8 0.6 3.6 0.8 3.0 0.8 2.4 0.8 4.4 0.5"/><path d="M0 5.48H35.0" stroke-dasharray="4.4 0.8 3.0 0.8 3.0 0.8 2.4 0.8 4.4 0.8 2.4 0.6 1.8 0.8 1.8 0.6 3.6 0.5 1.8 0.8"/><path d="M1.6 7.20H35.0" stroke-dasharray="3.0 0.5 4.4 0.8 3.6 0.6 3.6 0.5 2.4 0.5 2.4 0.8 2.4 0.8 3.0 0.8 1.2 0.5 3.6 0.6"/><path d="M0 8.92H35.0" stroke-dasharray="3.6 0.6 1.2 0.6 3.0 0.5 2.4 0.8 2.4 0.8 2.4 0.6 4.4 0.8 1.2 0.6 1.2 0.6 3.0 0.8 4.4 0.5"/><path d="M0 10.64H35.0" stroke-dasharray="1.8 0.5 3.0 0.8 1.2 0.5 4.4 0.6 3.0 0.8 2.4 0.5 1.8 0.5 2.4 0.5 1.8 0.8 1.2 0.6 4.4 0.6 3.0 0.6"/><path d="M0 12.36H35.0" stroke-dasharray="4.4 0.8 1.8 0.5 1.8 0.5 1.2 0.6 1.8 0.6 3.6 0.5 1.8 0.5 1.2 0.5 4.4 0.5 3.6 0.8 3.6 0.8"/><path d="M1.6 14.08H35.0" stroke-dasharray="1.2 0.8 1.8 0.5 4.4 0.6 4.4 0.8 4.4 0.5 3.6 0.5 2.4 0.8 4.4 0.6 4.4 0.5"/><path d="M0 15.80H35.0" stroke-dasharray="1.2 0.5 4.4 0.6 1.8 0.8 1.8 0.6 3.0 0.8 3.6 0.6 2.4 0.5 4.4 0.5 3.6 0.8 3.6 0.8"/><path d="M0 17.52H35.0" stroke-dasharray="4.4 0.6 1.2 0.8 3.0 0.6 1.8 0.6 3.6 0.5 4.4 0.5 3.0 0.8 1.8 0.6 3.6 0.5 3.6 0.6"/></g></pattern></defs><rect width="35" height="5.2" fill="url(#lp8)"/></svg><svg style="left:80px;top:69px;" width="35.80" height="40.80" viewBox="-0.200 -0.200 35.800 40.800"><defs><pattern id="lp9" width="34.8" height="18.92" patternUnits="userSpaceOnUse"><g stroke="#474747" stroke-width="0.64" fill="none"><path d="M0 0.32H34.8" stroke-dasharray="1.2 0.6 3.0 0.5 3.0 0.6 2.4 0.8 1.2 0.8 3.0 0.5 3.0 0.8 1.8 0.8 1.2 0.8 2.4 0.8 1.8 0.6 4.4 0.8"/><path d="M0 2.04H34.8" stroke-dasharray="3.6 0.5 3.0 0.5 2.4 0.5 1.2 0.8 1.8 0.8 3.0 0.8 1.8 0.8 2.4 0.8 3.0 0.6 1.8 0.6 1.2 0.5 2.4 0.8"/><path d="M0 3.76H34.8" stroke-dasharray="3.0 0.5 2.4 0.5 3.0 0.6 1.2 0.8 1.2 0.6 3.0 0.8 3.0 0.5 4.4 0.6 3.6 0.8 1.2 0.8 3.6 0.6"/><path d="M1.6 5.48H34.8" stroke-dasharray="2.4 0.8 1.8 0.5 1.2 0.6 2.4 0.5 2.4 0.6 2.4 0.8 4.4 0.6 2.4 0.5 3.6 0.8 4.4 0.5 4.4 0.6"/><path d="M0 7.20H34.8" stroke-dasharray="1.2 0.6 1.2 0.5 3.0 0.5 1.8 0.5 3.6 0.8 4.4 0.8 1.8 0.8 1.2 0.8 3.0 0.5 3.6 0.5 2.4 0.8 3.0 0.8"/><path d="M0 8.92H34.8" stroke-dasharray="1.2 0.8 1.2 0.6 4.4 0.5 1.8 0.8 3.0 0.6 1.8 0.8 1.2 0.6 3.0 0.8 1.8 0.6 3.0 0.5 2.4 0.5 3.0 0.5"/><path d="M0 10.64H34.8" stroke-dasharray="3.6 0.5 1.2 0.5 1.2 0.8 3.0 0.5 3.6 0.8 1.8 0.8 2.4 0.8 3.6 0.8 3.0 0.6 1.8 0.8 1.2 0.6 2.4 0.6"/><path d="M0 12.36H34.8" stroke-dasharray="1.2 0.8 1.2 0.6 4.4 0.6 3.6 0.8 2.4 0.8 4.4 0.5 1.8 0.5 1.8 0.8 3.0 0.8 2.4 0.6 3.6 0.5"/><path d="M0 14.08H34.8" stroke-dasharray="4.4 0.5 3.0 0.5 2.4 0.8 2.4 0.8 1.8 0.5 3.6 0.5 3.6 0.6 4.4 0.8 1.8 0.6 1.8 0.6"/><path d="M0 15.80H14.6" stroke-dasharray="3.0 0.8 3.0 0.6 3.6 0.8 3.0 0.8 3.6 0.6 3.6 0.8 4.4 0.8 3.0 0.8 1.2 0.8"/><path d="M0 17.52H34.8" stroke-dasharray="3.6 0.6 3.6 0.5 4.4 0.8 1.8 0.5 3.0 0.6 2.4 0.6 4.4 0.5 3.0 0.6 1.2 0.6 1.2 0.6 3.0 0.6"/></g></pattern></defs><rect width="34.8" height="39.8" fill="url(#lp9)"/></svg><span class="t" style="left:117.50px;top:22.50px;font-size:3.2px;line-height:1.0;color:#2aa5dc;font-weight:700;">Fact</span><div style="left:117.50px;top:25.60px;width:34.60px;height:0.70px;background:#2aa5dc;"></div><svg style="left:117px;top:27px;" width="34.00" height="10.00" viewBox="-0.500 -0.300 34.000 10.000"><defs><pattern id="lp10" width="33" height="19.80" patternUnits="userSpaceOnUse"><g stroke="#333" stroke-width="0.8" fill="none"><path d="M1.6 0.40H33.0" stroke-dasharray="2.4 0.5 3.6 0.6 3.6 0.5 3.0 0.6 3.6 0.5 3.0 0.6 3.6 0.8 1.8 0.6 1.2 0.5 2.4 0.6"/><path d="M0 2.20H25.7" stroke-dasharray="2.4 0.8 3.0 0.6 3.6 0.6 1.8 0.5 2.4 0.8 3.6 0.5 4.4 0.5 3.0 0.8 2.4 0.6 1.8 0.5"/><path d="M0 4.00H33.0" stroke-dasharray="2.4 0.8 1.2 0.5 3.6 0.5 3.6 0.6 1.2 0.5 4.4 0.5 4.4 0.5 1.8 0.8 1.8 0.6 3.0 0.6"/><path d="M0 5.80H33.0" stroke-dasharray="2.4 0.6 1.8 0.5 3.0 0.5 3.0 0.6 1.2 0.8 4.4 0.5 2.4 0.6 1.8 0.6 3.0 0.5 1.8 0.5 1.2 0.8 2.4 0.6"/><path d="M0 7.60H33.0" stroke-dasharray="1.2 0.6 1.2 0.8 1.2 0.5 4.4 0.6 3.6 0.6 3.6 0.5 4.4 0.5 2.4 0.5 1.8 0.5 1.2 0.8 2.4 0.5"/><path d="M0 9.40H16.9" stroke-dasharray="1.8 0.6 1.2 0.8 4.4 0.8 3.6 0.6 3.6 0.8 4.4 0.8 1.8 0.5 1.8 0.5 3.6 0.5 4.4 0.6"/><path d="M0 11.20H33.0" stroke-dasharray="1.2 0.8 3.0 0.6 3.6 0.6 2.4 0.5 2.4 0.6 2.4 0.5 3.0 0.6 3.0 0.6 1.8 0.6 2.4 0.6 3.6 0.8"/><path d="M0 13.00H33.0" stroke-dasharray="4.4 0.5 1.2 0.8 3.6 0.6 3.6 0.8 4.4 0.6 3.6 0.5 4.4 0.6 3.6 0.6"/><path d="M0 14.80H33.0" stroke-dasharray="1.2 0.5 1.8 0.8 3.6 0.8 1.2 0.5 2.4 0.5 2.4 0.6 3.6 0.8 2.4 0.5 1.2 0.8 3.0 0.6 3.0 0.8 2.4 0.5"/><path d="M0 16.60H17.4" stroke-dasharray="3.6 0.8 1.2 0.5 4.4 0.8 4.4 0.6 3.6 0.8 3.6 0.6 1.8 0.8 1.8 0.8 1.2 0.5 2.4 0.8"/><path d="M0 18.40H33.0" stroke-dasharray="4.4 0.6 1.2 0.6 4.4 0.6 3.0 0.5 4.4 0.8 1.8 0.6 1.8 0.8 2.4 0.5 1.8 0.6 4.4 0.5"/></g></pattern></defs><rect width="33" height="9" fill="url(#lp10)"/></svg><svg style="left:117px;top:41px;" width="35.60" height="68.50" viewBox="-0.500 -0.500 35.600 68.500"><defs><pattern id="lp11" width="34.6" height="18.92" patternUnits="userSpaceOnUse"><g stroke="#474747" stroke-width="0.64" fill="none"><path d="M0 0.32H22.2" stroke-dasharray="2.4 0.6 3.6 0.8 3.0 0.6 2.4 0.8 3.0 0.6 1.2 0.8 3.0 0.5 3.6 0.5 3.0 0.5 1.8 0.8 3.6 0.5"/><path d="M0 2.04H34.6" stroke-dasharray="1.8 0.6 2.4 0.8 1.8 0.8 1.8 0.6 2.4 0.5 2.4 0.5 4.4 0.5 4.4 0.5 1.8 0.8 2.4 0.6 2.4 0.8"/><path d="M1.6 3.76H34.6" stroke-dasharray="4.4 0.5 1.8 0.8 3.0 0.8 2.4 0.8 4.4 0.5 3.0 0.5 2.4 0.6 3.0 0.8 2.4 0.8 4.4 0.5"/><path d="M1.6 5.48H28.8" stroke-dasharray="1.8 0.5 4.4 0.5 1.2 0.5 1.2 0.8 2.4 0.6 3.0 0.8 1.2 0.8 1.2 0.6 3.0 0.5 3.0 0.6 1.8 0.5 1.8 0.6 3.0 0.8"/><path d="M0 7.20H34.6" stroke-dasharray="1.8 0.6 2.4 0.8 2.4 0.6 3.6 0.8 3.6 0.6 1.8 0.8 1.8 0.8 3.6 0.6 3.0 0.8 2.4 0.5 3.6 0.5"/><path d="M0 8.92H34.6" stroke-dasharray="1.2 0.5 4.4 0.5 2.4 0.5 3.6 0.6 2.4 0.6 3.6 0.6 2.4 0.8 1.8 0.5 1.8 0.8 1.8 0.5 1.8 0.8 1.2 0.6"/><path d="M0 10.64H34.6" stroke-dasharray="1.2 0.8 4.4 0.6 1.8 0.5 1.2 0.5 3.6 0.8 4.4 0.5 1.8 0.6 2.4 0.8 2.4 0.5 2.4 0.5 1.8 0.6 3.0 0.6"/><path d="M0 12.36H34.6" stroke-dasharray="3.0 0.6 3.0 0.8 3.6 0.5 4.4 0.5 1.2 0.6 3.0 0.5 4.4 0.5 3.6 0.6 2.4 0.6 4.4 0.6"/><path d="M1.6 14.08H34.6" stroke-dasharray="3.6 0.5 3.6 0.8 3.0 0.5 3.6 0.5 1.2 0.6 1.2 0.8 3.6 0.6 1.8 0.6 3.6 0.6 4.4 0.6"/><path d="M0 15.80H11.5" stroke-dasharray="1.2 0.6 4.4 0.6 1.8 0.5 2.4 0.6 2.4 0.5 3.0 0.6 1.8 0.5 2.4 0.8 2.4 0.5 4.4 0.5 1.2 0.8 1.2 0.6"/><path d="M0 17.52H34.6" stroke-dasharray="3.0 0.6 2.4 0.6 4.4 0.5 1.2 0.5 1.2 0.8 4.4 0.5 3.0 0.5 3.6 0.5 4.4 0.8 2.4 0.8"/></g></pattern></defs><rect width="34.6" height="67.5" fill="url(#lp11)"/></svg><div style="left:5.50px;top:111.30px;width:146.60px;height:106.00px;background:#ebe08b;box-sizing:border-box;border:0.5px solid #dcd188;"><span class="t" style="left:0.20px;top:0.10px;font-size:2.9px;line-height:1;color:#221;font-weight:700;transform:scaleX(0.7069);">missing ad: 519755</span></div></div>
<div style="left:987.20px;top:658.70px;width:23.60px;height:23.60px;background:#fafafa;border-radius:50%;box-sizing:border-box;border:1px solid #d2d2d2;"></div><svg style="left:991px;top:662px;" width="17.00" height="17.00" viewBox="-0.000 -0.500 17.000 17.000"><path d="M8 1v14M1 8h14" stroke="#111" stroke-width="1.900"/></svg>
<svg style="left:1021px;top:659px;" width="23.00" height="23.00" viewBox="-0.000 -0.500 23.000 23.000"><ellipse cx="8" cy="4.300" rx="3.500" ry="4.300" fill="#a9a9a9"/><path d="M0.500 15.600c0-2.600 1.200-4 3.300-4.700l2.700-1 .300-1.600h2.400l.300 1.600 2.700 1c1 .350 1.800.900 2.300 1.700L10.200 15.600z" fill="#a9a9a9"/><path d="M10 21.600l.900-3.300 8.600-8.600 2.400 2.400-8.600 8.600z" fill="#a9a9a9"/></svg>
<svg style="left:1060px;top:660px;" width="24.00" height="21.00" viewBox="-0.000 -0.500 24.000 21.000"><g fill="none" stroke="#ababab" stroke-width="2.100"><path d="M4.300 12.800A7.800 7.800 0 0 1 17.600 4.700"/><path d="M18.800 7.200A7.800 7.800 0 0 1 5.500 15.300"/></g><path d="M0.400 8.300h7.400l-4 5z" fill="#ababab"/><path d="M22.700 11.700h-7.400l4-5z" fill="#ababab"/><rect x="8.400" y="8.900" width="6.200" height="5" rx="0.700" fill="#ababab"/><path d="M9.800 9.100V7.700a1.700 1.700 0 0 1 3.400 0v1.400" fill="none" stroke="#ababab" stroke-width="1.300"/><circle cx="11.500" cy="11.400" r="0.800" fill="#f7f7f7"/></svg>
<svg style="left:1101px;top:667px;" width="21.00" height="7.00" viewBox="-0.500 -0.500 21.000 7.000"><circle cx="3.100" cy="3" r="1.950" fill="#444"/><circle cx="10" cy="3" r="1.950" fill="#444"/><circle cx="16.900" cy="3" r="1.950" fill="#444"/></svg>
<span class="t" style="left:1027.10px;top:695.00px;font-size:14.83px;color:#111;font-weight:700;transform:scaleX(0.9902);">PS-1412-A-005</span>
<div style="left:973.00px;top:428.80px;width:0.00px;height:292.00px;border-left:1px dashed rgba(160,160,160,0.75);"></div>
<div style="left:1160.00px;top:420.80px;width:163.50px;height:300.00px;background:#f7f7f7;border-radius:5px 5px 0 6px;"></div>
<div style="left:1160.00px;top:420.80px;width:163.50px;height:4.50px;background:#808080;border-radius:5px 5px 0 0;"></div>
<div style="left:1165.00px;top:428.80px;width:158.50px;height:217.20px;background:#fff;overflow:hidden;"><span class="t" style="left:6.00px;top:0.60px;font-size:2.4px;line-height:1;color:#222;font-weight:700;transform:scaleX(0.6182);">THE POST  Thursday, December 14, 2023</span><div style="left:5.90px;top:5.40px;width:146.90px;height:211.60px;background:#ebe08b;box-sizing:border-box;border:0.5px solid #dcd188;"><span class="t" style="left:0.20px;top:0.10px;font-size:2.9px;line-height:1;color:#221;font-weight:700;transform:scaleX(0.7069);">missing ad: 510 856</span></div></div>
<svg style="left:1175px;top:667px;" width="21.00" height="7.00" viewBox="-0.700 -0.500 21.000 7.000"><circle cx="3.100" cy="3" r="1.950" fill="#444"/><circle cx="10" cy="3" r="1.950" fill="#444"/><circle cx="16.900" cy="3" r="1.950" fill="#444"/></svg>
<svg style="left:1213px;top:660px;" width="24.00" height="21.00" viewBox="-0.100 -0.500 24.000 21.000"><g fill="none" stroke="#ababab" stroke-width="2.100"><path d="M4.300 12.800A7.800 7.800 0 0 1 17.600 4.700"/><path d="M18.800 7.200A7.800 7.800 0 0 1 5.500 15.300"/></g><path d="M0.400 8.300h7.400l-4 5z" fill="#ababab"/><path d="M22.700 11.700h-7.400l4-5z" fill="#ababab"/><rect x="8.400" y="8.900" width="6.200" height="5" rx="0.700" fill="#ababab"/><path d="M9.800 9.100V7.700a1.700 1.700 0 0 1 3.400 0v1.400" fill="none" stroke="#ababab" stroke-width="1.300"/><circle cx="11.500" cy="11.400" r="0.800" fill="#f7f7f7"/></svg>
<svg style="left:1253px;top:659px;" width="23.00" height="23.00" viewBox="-0.300 -0.500 23.000 23.000"><ellipse cx="8" cy="4.300" rx="3.500" ry="4.300" fill="#a9a9a9"/><path d="M0.500 15.600c0-2.600 1.200-4 3.300-4.700l2.700-1 .300-1.600h2.400l.300 1.600 2.700 1c1 .350 1.800.900 2.300 1.700L10.200 15.600z" fill="#a9a9a9"/><path d="M10 21.600l.900-3.300 8.600-8.600 2.400 2.400-8.600 8.600z" fill="#a9a9a9"/></svg>
<div style="left:1286.20px;top:658.70px;width:23.60px;height:23.60px;background:#fafafa;border-radius:50%;box-sizing:border-box;border:1px solid #d2d2d2;"></div><svg style="left:1290px;top:662px;" width="17.00" height="17.00" viewBox="0.000 -0.500 17.000 17.000"><path d="M8 1v14M1 8h14" stroke="#111" stroke-width="1.900"/></svg>
<span class="t" style="left:1167.30px;top:695.00px;font-size:14.83px;color:#111;font-weight:700;transform:scaleX(0.9941);">PS-1412-A-006</span>
<div style="left:1323.50px;top:420.80px;width:163.50px;height:300.00px;background:#f7f7f7;border-radius:5px 5px 6px 0;"></div>
<div style="left:1323.50px;top:420.80px;width:163.50px;height:4.50px;background:#808080;border-radius:5px 5px 0 0;"></div>
<div style="left:1323.50px;top:428.80px;width:158.50px;height:217.20px;background:#fff;overflow:hidden;"><span class="t" style="left:123.50px;top:0.60px;font-size:2.4px;line-height:1;color:#222;font-weight:700;transform:scaleX(0.6182);">THE POST  Thursday, December 14, 2023</span><div style="left:79.70px;top:5.40px;width:72.80px;height:211.60px;background:#ebe08b;box-sizing:border-box;border:0.5px solid #dcd188;"><span class="t" style="left:0.20px;top:0.10px;font-size:2.9px;line-height:1;color:#221;font-weight:700;transform:scaleX(0.7069);">missing ad: 510572-1</span></div></div>
<div style="left:1337.20px;top:658.70px;width:23.60px;height:23.60px;background:#fafafa;border-radius:50%;box-sizing:border-box;border:1px solid #d2d2d2;"></div><svg style="left:1341px;top:662px;" width="17.00" height="17.00" viewBox="-0.000 -0.500 17.000 17.000"><path d="M8 1v14M1 8h14" stroke="#111" stroke-width="1.900"/></svg>
<svg style="left:1371px;top:659px;" width="23.00" height="23.00" viewBox="-0.000 -0.500 23.000 23.000"><ellipse cx="8" cy="4.300" rx="3.500" ry="4.300" fill="#a9a9a9"/><path d="M0.500 15.600c0-2.600 1.200-4 3.300-4.700l2.700-1 .300-1.600h2.400l.300 1.600 2.700 1c1 .350 1.800.900 2.300 1.700L10.200 15.600z" fill="#a9a9a9"/><path d="M10 21.600l.900-3.300 8.600-8.600 2.400 2.400-8.600 8.600z" fill="#a9a9a9"/></svg>
<svg style="left:1410px;top:660px;" width="24.00" height="21.00" viewBox="-0.000 -0.500 24.000 21.000"><g fill="none" stroke="#ababab" stroke-width="2.100"><path d="M4.300 12.800A7.800 7.800 0 0 1 17.600 4.700"/><path d="M18.800 7.200A7.800 7.800 0 0 1 5.500 15.300"/></g><path d="M0.400 8.300h7.400l-4 5z" fill="#ababab"/><path d="M22.700 11.700h-7.400l4-5z" fill="#ababab"/><rect x="8.400" y="8.900" width="6.200" height="5" rx="0.700" fill="#ababab"/><path d="M9.800 9.100V7.700a1.700 1.700 0 0 1 3.400 0v1.400" fill="none" stroke="#ababab" stroke-width="1.300"/><circle cx="11.500" cy="11.400" r="0.800" fill="#f7f7f7"/></svg>
<svg style="left:1451px;top:667px;" width="21.00" height="7.00" viewBox="-0.500 -0.500 21.000 7.000"><circle cx="3.100" cy="3" r="1.950" fill="#444"/><circle cx="10" cy="3" r="1.950" fill="#444"/><circle cx="16.900" cy="3" r="1.950" fill="#444"/></svg>
<span class="t" style="left:1377.10px;top:695.00px;font-size:14.83px;color:#111;font-weight:700;transform:scaleX(0.9902);">PS-1412-A-007</span>
<div style="left:1323.00px;top:428.80px;width:0.00px;height:292.00px;border-left:1px dashed rgba(160,160,160,0.75);"></div>
<div style="left:1511.00px;top:420.80px;width:163.50px;height:300.00px;background:#f7f7f7;border-radius:5px 5px 0 6px;"></div>
<div style="left:1511.00px;top:420.80px;width:163.50px;height:4.50px;background:#808080;border-radius:5px 5px 0 0;"></div>
<div style="left:1516.00px;top:428.80px;width:158.50px;height:217.20px;background:#fff;overflow:hidden;"><span class="t" style="left:6.00px;top:0.40px;font-size:2.4px;line-height:1;color:#222;font-weight:700;transform:scaleX(0.6182);">THE POST  Thursday, December 14, 2023</span><div style="left:6.00px;top:2.70px;width:145.80px;height:0.90px;background:#86cdea;"></div><div style="left:6.00px;top:4.20px;width:4.60px;height:5.60px;background:#fff;box-sizing:border-box;border:0.8px solid #2aa5dc;"></div><span class="t" style="left:12.60px;top:4.70px;font-size:4.7px;line-height:1.0;color:#1e9bd7;font-weight:700;transform:scaleX(0.9122);">News</span><span class="t" style="left:6.00px;top:12.00px;font-size:9.62px;color:#111;font-weight:700;font-family:'Liberation Serif',serif;-webkit-text-stroke:0.22px #111;transform:scaleX(0.8883);">Deaf man battered with bat on street</span><svg style="left:6px;top:24px;" width="18.00" height="2.20" viewBox="0.000 -0.600 18.000 2.200"><defs><pattern id="lp12" width="17" height="18.70" patternUnits="userSpaceOnUse"><g stroke="#222" stroke-width="0.9" fill="none"><path d="M0 0.45H17.0" stroke-dasharray="1.8 0.8 1.8 0.8 1.2 0.6 2.4 0.8 3.6 0.8 2.4 0.8"/><path d="M0 2.15H17.0" stroke-dasharray="1.2 0.6 3.0 0.5 3.0 0.8 3.6 0.8 1.2 0.8 1.8 0.6"/><path d="M0 3.85H17.0" stroke-dasharray="1.2 0.6 1.2 0.8 2.4 0.6 3.6 0.8 4.4 0.6 2.4 0.8"/><path d="M0 5.55H17.0" stroke-dasharray="3.0 0.5 4.4 0.6 1.8 0.8 4.4 0.6 3.6 0.8"/><path d="M1.6 7.25H10.1" stroke-dasharray="1.2 0.6 2.4 0.5 4.4 0.8 2.4 0.6 3.6 0.5"/><path d="M0 8.95H17.0" stroke-dasharray="4.4 0.5 2.4 0.6 1.8 0.8 3.0 0.6 1.2 0.8 2.4 0.5"/><path d="M0 10.65H17.0" stroke-dasharray="1.8 0.8 1.8 0.6 1.8 0.8 2.4 0.5 1.2 0.5 2.4 0.6 4.4 0.8"/><path d="M0 12.35H17.0" stroke-dasharray="3.0 0.6 1.8 0.6 3.6 0.5 3.6 0.8 2.4 0.5"/><path d="M0 14.05H17.0" stroke-dasharray="2.4 0.5 1.2 0.8 3.6 0.5 1.8 0.8 1.2 0.5 3.0 0.5 2.4 0.6"/><path d="M0 15.75H17.0" stroke-dasharray="3.6 0.5 2.4 0.6 2.4 0.5 1.8 0.8 4.4 0.6"/><path d="M0 17.45H17.0" stroke-dasharray="4.4 0.6 4.4 0.6 2.4 0.8 3.0 0.5 4.4 0.5"/></g></pattern></defs><rect width="17" height="1.2" fill="url(#lp12)"/></svg><svg style="left:6px;top:26px;" width="20.00" height="1.80" viewBox="0.000 -0.800 20.000 1.800"><defs><pattern id="lp13" width="19" height="18.70" patternUnits="userSpaceOnUse"><g stroke="#888" stroke-width="0.8" fill="none"><path d="M1.6 0.40H19.0" stroke-dasharray="3.6 0.5 1.2 0.6 2.4 0.6 1.2 0.8 3.0 0.6 2.4 0.6 3.6 0.6"/><path d="M0 2.10H19.0" stroke-dasharray="1.2 0.8 3.0 0.6 3.0 0.6 1.8 0.8 4.4 0.5 3.0 0.6"/><path d="M0 3.80H19.0" stroke-dasharray="2.4 0.5 1.2 0.8 2.4 0.6 4.4 0.6 1.2 0.6 3.0 0.8 2.4 0.5"/><path d="M0 5.50H19.0" stroke-dasharray="2.4 0.8 1.8 0.5 3.0 0.6 1.8 0.6 1.8 0.5 1.8 0.8 4.4 0.6"/><path d="M0 7.20H19.0" stroke-dasharray="3.0 0.5 4.4 0.5 3.6 0.8 3.6 0.5 4.4 0.8"/><path d="M0 8.90H19.0" stroke-dasharray="3.6 0.6 1.2 0.5 4.4 0.8 4.4 0.8 1.8 0.5 1.8 0.5"/><path d="M0 10.60H19.0" stroke-dasharray="4.4 0.5 4.4 0.5 1.8 0.8 1.8 0.6 4.4 0.5"/><path d="M0 12.30H19.0" stroke-dasharray="2.4 0.6 4.4 0.6 1.8 0.8 4.4 0.8 1.8 0.8 4.4 0.6"/><path d="M0 14.00H19.0" stroke-dasharray="1.8 0.6 1.8 0.8 2.4 0.6 2.4 0.8 1.2 0.8 2.4 0.6 1.8 0.8 4.4 0.5"/><path d="M0 15.70H19.0" stroke-dasharray="1.8 0.8 4.4 0.8 1.8 0.5 2.4 0.6 3.0 0.5 4.4 0.5"/><path d="M1.6 17.40H19.0" stroke-dasharray="1.2 0.5 1.8 0.8 1.8 0.6 1.8 0.6 1.2 0.5 1.2 0.8 1.2 0.5 3.0 0.8 1.2 0.8"/></g></pattern></defs><rect width="19" height="0.8" fill="url(#lp13)"/></svg><svg style="left:6px;top:31px;" width="35.80" height="39.60" viewBox="0.000 -0.800 35.800 39.600"><defs><pattern id="lp14" width="34.8" height="18.92" patternUnits="userSpaceOnUse"><g stroke="#474747" stroke-width="0.64" fill="none"><path d="M0 0.32H34.8" stroke-dasharray="3.6 0.5 3.6 0.6 3.0 0.5 4.4 0.8 1.8 0.8 1.8 0.6 3.0 0.8 1.8 0.6 3.0 0.5 2.4 0.5 1.8 0.5"/><path d="M0 2.04H34.8" stroke-dasharray="1.8 0.6 2.4 0.5 4.4 0.6 3.0 0.5 1.2 0.6 3.0 0.6 1.8 0.5 4.4 0.8 4.4 0.6 4.4 0.6"/><path d="M0 3.76H13.3" stroke-dasharray="3.0 0.5 3.0 0.8 4.4 0.6 1.2 0.6 1.8 0.8 1.2 0.6 1.2 0.6 4.4 0.6 1.2 0.6 3.6 0.5 1.2 0.6 1.8 0.6"/><path d="M0 5.48H34.8" stroke-dasharray="4.4 0.6 4.4 0.8 3.0 0.5 3.0 0.8 2.4 0.5 4.4 0.8 4.4 0.5 1.2 0.5 1.2 0.8 2.4 0.8"/><path d="M0 7.20H20.9" stroke-dasharray="1.2 0.8 4.4 0.8 3.6 0.6 4.4 0.5 4.4 0.5 1.8 0.8 3.6 0.6 1.8 0.5 1.8 0.6 2.4 0.6"/><path d="M0 8.92H34.8" stroke-dasharray="2.4 0.6 1.2 0.5 2.4 0.8 2.4 0.5 2.4 0.5 2.4 0.6 1.8 0.6 1.2 0.8 2.4 0.5 1.2 0.6 4.4 0.5 1.2 0.5 4.4 0.6"/><path d="M1.6 10.64H34.8" stroke-dasharray="3.6 0.5 2.4 0.5 2.4 0.6 4.4 0.5 3.6 0.8 3.6 0.6 2.4 0.5 1.8 0.6 2.4 0.8 2.4 0.6"/><path d="M0 12.36H20.9" stroke-dasharray="1.8 0.8 1.2 0.5 1.8 0.8 1.2 0.5 2.4 0.5 2.4 0.5 3.0 0.8 1.8 0.8 4.4 0.8 2.4 0.8 4.4 0.8 3.6 0.5"/><path d="M0 14.08H34.8" stroke-dasharray="4.4 0.6 4.4 0.6 1.8 0.6 1.8 0.6 2.4 0.5 1.8 0.5 3.6 0.6 4.4 0.6 3.0 0.8 1.2 0.6"/><path d="M0 15.80H22.4" stroke-dasharray="1.2 0.6 3.6 0.5 1.2 0.6 3.0 0.8 2.4 0.8 1.8 0.6 4.4 0.8 1.2 0.5 4.4 0.6 3.6 0.8 1.2 0.8"/><path d="M0 17.52H34.8" stroke-dasharray="3.6 0.8 1.2 0.5 3.0 0.8 3.0 0.5 2.4 0.5 1.8 0.6 1.8 0.8 3.6 0.5 1.8 0.8 1.8 0.8 1.8 0.5 4.4 0.8"/></g></pattern></defs><rect width="34.8" height="38.6" fill="url(#lp14)"/></svg><svg style="left:43px;top:24px;" width="35.80" height="47.20" viewBox="-0.600 -0.200 35.800 47.200"><defs><pattern id="lp15" width="34.8" height="18.92" patternUnits="userSpaceOnUse"><g stroke="#474747" stroke-width="0.64" fill="none"><path d="M0 0.32H34.8" stroke-dasharray="1.8 0.8 1.2 0.8 3.0 0.8 2.4 0.6 1.8 0.5 2.4 0.5 1.8 0.5 4.4 0.6 1.8 0.5 1.8 0.5 3.6 0.6 1.2 0.8 2.4 0.8"/><path d="M0 2.04H34.8" stroke-dasharray="4.4 0.8 3.6 0.8 1.2 0.8 4.4 0.8 3.0 0.5 2.4 0.8 2.4 0.8 1.8 0.5 3.6 0.6 1.8 0.5"/><path d="M0 3.76H34.8" stroke-dasharray="3.6 0.5 3.0 0.5 2.4 0.5 4.4 0.6 4.4 0.8 1.2 0.6 1.8 0.5 3.6 0.6 3.6 0.5 1.2 0.5"/><path d="M0 5.48H34.8" stroke-dasharray="3.0 0.5 1.2 0.8 4.4 0.5 1.2 0.8 3.6 0.5 3.6 0.5 2.4 0.6 1.2 0.5 4.4 0.6 1.8 0.6 4.4 0.5"/><path d="M0 7.20H34.8" stroke-dasharray="2.4 0.8 3.6 0.6 1.2 0.6 3.6 0.6 1.2 0.6 3.0 0.5 1.8 0.5 1.8 0.8 4.4 0.8 1.8 0.6 1.8 0.5 2.4 0.5"/><path d="M1.6 8.92H34.8" stroke-dasharray="3.0 0.5 3.0 0.5 3.6 0.5 1.8 0.8 3.6 0.5 1.2 0.8 4.4 0.8 1.2 0.5 2.4 0.6 3.0 0.6 3.0 0.8"/><path d="M0 10.64H27.2" stroke-dasharray="3.6 0.8 1.8 0.8 3.6 0.6 1.2 0.8 3.0 0.5 4.4 0.6 3.6 0.5 3.6 0.6 4.4 0.5"/><path d="M0 12.36H34.8" stroke-dasharray="1.8 0.8 1.2 0.6 3.0 0.8 4.4 0.8 4.4 0.8 1.2 0.6 3.6 0.6 3.6 0.5 3.6 0.6 4.4 0.8"/><path d="M1.6 14.08H14.7" stroke-dasharray="3.0 0.8 1.2 0.5 3.6 0.5 4.4 0.6 1.8 0.5 4.4 0.5 2.4 0.5 4.4 0.8 1.2 0.8 2.4 0.6"/><path d="M1.6 15.80H34.8" stroke-dasharray="4.4 0.8 4.4 0.6 3.0 0.5 2.4 0.5 1.8 0.6 2.4 0.8 3.6 0.6 2.4 0.6 3.6 0.5 4.4 0.5"/><path d="M0 17.52H34.8" stroke-dasharray="1.8 0.8 1.2 0.8 1.8 0.6 3.0 0.6 3.6 0.6 3.6 0.6 1.8 0.6 2.4 0.6 1.2 0.5 2.4 0.5 1.2 0.6 3.6 0.6"/></g></pattern></defs><rect width="34.8" height="46.2" fill="url(#lp15)"/></svg><div style="left:80.00px;top:22.00px;width:13.50px;height:1.00px;background:#2aa5dc;"></div><span class="t" style="left:80.00px;top:24.30px;font-size:3.5px;line-height:1.0;color:#555;font-family:'Liberation Serif',serif;font-style:italic;transform:scaleX(0.8574);">Things quickly became</span><span class="t" style="left:80.00px;top:28.40px;font-size:3.5px;line-height:1.0;color:#555;font-family:'Liberation Serif',serif;font-style:italic;transform:scaleX(0.8571);">physical, with “both parties</span><span class="t" style="left:80.00px;top:32.50px;font-size:3.5px;line-height:1.0;color:#555;font-family:'Liberation Serif',serif;font-style:italic;transform:scaleX(0.8596);">actively fighting each other</span><div style="left:80.30px;top:38.60px;width:1.80px;height:1.20px;background:#2aa5dc;"></div><svg style="left:80px;top:58px;" width="35.80" height="12.50" viewBox="0.000 -0.900 35.800 12.500"><defs><pattern id="lp16" width="34.8" height="18.92" patternUnits="userSpaceOnUse"><g stroke="#474747" stroke-width="0.64" fill="none"><path d="M0 0.32H34.8" stroke-dasharray="2.4 0.5 1.2 0.8 1.2 0.6 3.6 0.6 4.4 0.8 2.4 0.8 2.4 0.6 1.2 0.8 3.6 0.5 1.8 0.5 2.4 0.5 3.0 0.8"/><path d="M0 2.04H34.8" stroke-dasharray="1.8 0.5 3.6 0.5 1.8 0.8 4.4 0.6 1.2 0.8 1.8 0.8 2.4 0.8 1.8 0.8 4.4 0.6 3.6 0.5 2.4 0.6"/><path d="M0 3.76H34.8" stroke-dasharray="1.8 0.6 4.4 0.8 2.4 0.5 3.6 0.8 3.0 0.8 3.6 0.8 4.4 0.8 3.0 0.6 1.8 0.8 4.4 0.5"/><path d="M0 5.48H34.8" stroke-dasharray="2.4 0.8 3.6 0.8 3.6 0.5 1.2 0.8 1.2 0.6 3.6 0.6 1.2 0.5 1.8 0.5 3.6 0.6 3.0 0.8 3.0 0.6"/><path d="M0 7.20H34.8" stroke-dasharray="3.0 0.5 4.4 0.5 3.6 0.5 1.2 0.8 1.2 0.6 4.4 0.5 2.4 0.8 4.4 0.6 3.6 0.8 1.8 0.6"/><path d="M0 8.92H34.8" stroke-dasharray="3.6 0.6 4.4 0.8 1.8 0.6 3.6 0.8 2.4 0.6 3.6 0.5 1.8 0.8 4.4 0.5 1.8 0.5 3.6 0.5"/><path d="M0 10.64H34.8" stroke-dasharray="1.2 0.5 1.2 0.8 3.0 0.6 1.8 0.8 1.8 0.5 3.0 0.5 4.4 0.6 3.6 0.5 3.6 0.8 3.6 0.8 1.8 0.5"/><path d="M1.6 12.36H34.8" stroke-dasharray="1.8 0.8 3.6 0.5 1.2 0.8 2.4 0.5 3.0 0.8 1.2 0.5 1.2 0.5 2.4 0.6 1.8 0.6 1.8 0.8 3.6 0.5 2.4 0.8 2.4 0.6"/><path d="M0 14.08H34.8" stroke-dasharray="1.2 0.5 4.4 0.6 1.8 0.8 3.6 0.6 4.4 0.8 1.8 0.6 3.0 0.6 1.8 0.6 2.4 0.8 3.6 0.8 1.2 0.6"/><path d="M0 15.80H34.8" stroke-dasharray="2.4 0.5 3.0 0.5 3.0 0.8 3.0 0.6 3.0 0.5 2.4 0.5 3.6 0.8 1.8 0.6 2.4 0.6 1.8 0.6 3.0 0.8"/><path d="M0 17.52H34.8" stroke-dasharray="1.2 0.5 4.4 0.5 3.0 0.6 4.4 0.5 2.4 0.5 4.4 0.5 3.6 0.8 3.6 0.6 1.2 0.8 2.4 0.8"/></g></pattern></defs><rect width="34.8" height="11.5" fill="url(#lp16)"/></svg><svg style="left:116px;top:24px;" width="35.80" height="47.20" viewBox="-0.700 -0.200 35.800 47.200"><defs><pattern id="lp17" width="34.8" height="18.92" patternUnits="userSpaceOnUse"><g stroke="#474747" stroke-width="0.64" fill="none"><path d="M0 0.32H34.8" stroke-dasharray="3.6 0.5 3.6 0.6 1.2 0.8 2.4 0.5 3.0 0.8 4.4 0.8 1.8 0.5 2.4 0.6 4.4 0.5 3.6 0.6"/><path d="M0 2.04H34.8" stroke-dasharray="1.8 0.6 2.4 0.6 1.2 0.6 1.2 0.8 4.4 0.6 3.6 0.5 3.6 0.8 3.0 0.6 2.4 0.8 1.2 0.8 2.4 0.6 3.0 0.5"/><path d="M1.6 3.76H34.8" stroke-dasharray="3.0 0.5 3.6 0.5 1.2 0.5 3.0 0.6 2.4 0.6 3.0 0.8 1.8 0.5 4.4 0.5 3.6 0.6 3.0 0.5 3.0 0.6"/><path d="M0 5.48H17.7" stroke-dasharray="1.8 0.5 3.0 0.8 1.2 0.6 4.4 0.5 4.4 0.6 2.4 0.8 3.6 0.8 1.8 0.6 3.6 0.8 1.8 0.5 1.8 0.8"/><path d="M1.6 7.20H12.4" stroke-dasharray="4.4 0.5 3.0 0.6 1.2 0.6 1.2 0.8 3.6 0.8 3.0 0.8 4.4 0.5 1.2 0.6 1.8 0.6 1.8 0.8 1.8 0.5 3.6 0.8"/><path d="M0 8.92H20.2" stroke-dasharray="3.0 0.8 3.6 0.6 2.4 0.8 1.2 0.6 3.6 0.5 4.4 0.8 3.6 0.5 3.0 0.6 1.8 0.5 3.6 0.5"/><path d="M0 10.64H29.2" stroke-dasharray="1.2 0.5 4.4 0.6 4.4 0.6 3.6 0.5 3.6 0.8 3.0 0.6 3.6 0.8 4.4 0.6 1.2 0.6"/><path d="M0 12.36H34.8" stroke-dasharray="1.2 0.5 1.2 0.8 4.4 0.5 3.0 0.5 1.2 0.5 2.4 0.5 2.4 0.6 2.4 0.6 2.4 0.5 2.4 0.5 4.4 0.6 3.0 0.8"/><path d="M0 14.08H34.8" stroke-dasharray="3.6 0.8 3.6 0.8 4.4 0.8 1.8 0.6 2.4 0.5 3.0 0.6 1.8 0.6 2.4 0.5 3.6 0.5 2.4 0.5"/><path d="M0 15.80H25.0" stroke-dasharray="1.8 0.6 2.4 0.8 1.2 0.5 4.4 0.5 2.4 0.6 4.4 0.6 3.0 0.5 1.2 0.5 1.8 0.6 4.4 0.5 3.6 0.8"/><path d="M0 17.52H34.8" stroke-dasharray="3.0 0.8 1.8 0.8 4.4 0.6 2.4 0.5 1.8 0.6 3.6 0.5 2.4 0.8 4.4 0.6 1.2 0.8 1.8 0.8 1.8 0.8"/></g></pattern></defs><rect width="34.8" height="46.2" fill="url(#lp17)"/></svg><div style="left:6.00px;top:72.50px;width:145.80px;height:0.60px;background:#d8d8d8;"></div><span class="t" style="left:6.00px;top:76.00px;font-size:6.72px;color:#333;font-family:'Liberation Serif',serif;transform:scaleX(0.9501);">Linwood mosque hero denies assault</span><div style="left:6.00px;top:85.90px;width:8.00px;height:2.30px;background:#5bbde6;"></div><svg style="left:6px;top:89px;" width="13.00" height="2.20" viewBox="0.000 -0.200 13.000 2.200"><defs><pattern id="lp18" width="12" height="18.70" patternUnits="userSpaceOnUse"><g stroke="#222" stroke-width="0.9" fill="none"><path d="M0 0.45H12.0" stroke-dasharray="3.6 0.8 2.4 0.5 4.4 0.6"/><path d="M0 2.15H12.0" stroke-dasharray="1.8 0.5 4.4 0.8 1.8 0.5 4.4 0.6"/><path d="M0 3.85H5.3" stroke-dasharray="1.8 0.6 4.4 0.8 3.0 0.5 1.2 0.6"/><path d="M0 5.55H12.0" stroke-dasharray="1.2 0.6 1.2 0.5 3.6 0.5 1.2 0.5 3.0 0.5"/><path d="M0 7.25H12.0" stroke-dasharray="1.8 0.6 3.0 0.8 3.6 0.5 4.4 0.8"/><path d="M0 8.95H12.0" stroke-dasharray="1.8 0.8 3.0 0.5 4.4 0.8 3.6 0.6"/><path d="M0 10.65H9.4" stroke-dasharray="3.6 0.6 2.4 0.6 1.8 0.8 4.4 0.8"/><path d="M0 12.35H12.0" stroke-dasharray="1.8 0.5 1.8 0.5 1.8 0.6 1.8 0.8 3.6 0.5"/><path d="M0 14.05H12.0" stroke-dasharray="4.4 0.5 1.2 0.5 2.4 0.6 1.8 0.5 1.8 0.8"/><path d="M0 15.75H12.0" stroke-dasharray="3.0 0.8 2.4 0.6 3.0 0.6 2.4 0.8"/><path d="M0 17.45H6.5" stroke-dasharray="1.2 0.8 2.4 0.6 3.6 0.8 4.4 0.8"/></g></pattern></defs><rect width="12" height="1.2" fill="url(#lp18)"/></svg><svg style="left:6px;top:91px;" width="18.00" height="1.80" viewBox="0.000 -0.400 18.000 1.800"><defs><pattern id="lp19" width="17" height="18.70" patternUnits="userSpaceOnUse"><g stroke="#888" stroke-width="0.8" fill="none"><path d="M0 0.40H9.8" stroke-dasharray="3.6 0.6 3.6 0.5 3.0 0.6 1.8 0.6 4.4 0.5"/><path d="M0 2.10H17.0" stroke-dasharray="1.2 0.8 3.6 0.5 1.8 0.5 3.6 0.6 3.6 0.6 3.0 0.6"/><path d="M0 3.80H17.0" stroke-dasharray="1.2 0.8 2.4 0.8 1.2 0.8 1.2 0.5 4.4 0.6 3.6 0.6"/><path d="M0 5.50H17.0" stroke-dasharray="1.2 0.8 4.4 0.8 2.4 0.8 4.4 0.6 1.2 0.8"/><path d="M1.6 7.20H17.0" stroke-dasharray="1.2 0.8 4.4 0.5 1.8 0.8 2.4 0.8 4.4 0.8"/><path d="M0 8.90H14.0" stroke-dasharray="1.2 0.8 3.0 0.6 4.4 0.5 1.8 0.6 1.8 0.8 4.4 0.6"/><path d="M0 10.60H17.0" stroke-dasharray="1.8 0.6 3.0 0.6 1.8 0.5 2.4 0.6 3.0 0.6 1.8 0.5"/><path d="M0 12.30H17.0" stroke-dasharray="3.0 0.8 2.4 0.6 4.4 0.8 3.6 0.5 4.4 0.6"/><path d="M0 14.00H17.0" stroke-dasharray="2.4 0.6 4.4 0.5 3.6 0.6 3.6 0.5 1.2 0.6"/><path d="M0 15.70H17.0" stroke-dasharray="3.0 0.5 4.4 0.6 3.6 0.5 4.4 0.6"/><path d="M0 17.40H17.0" stroke-dasharray="1.2 0.5 3.0 0.5 4.4 0.6 3.0 0.5 3.6 0.5"/></g></pattern></defs><rect width="17" height="0.8" fill="url(#lp19)"/></svg><svg style="left:6px;top:96px;" width="35.80" height="39.10" viewBox="0.000 -0.900 35.800 39.100"><defs><pattern id="lp20" width="34.8" height="18.92" patternUnits="userSpaceOnUse"><g stroke="#474747" stroke-width="0.64" fill="none"><path d="M0 0.32H27.0" stroke-dasharray="1.8 0.5 1.2 0.5 1.8 0.5 1.2 0.8 3.0 0.6 1.8 0.8 1.8 0.5 3.6 0.6 3.0 0.5 2.4 0.8 3.0 0.6 4.4 0.8"/><path d="M0 2.04H19.7" stroke-dasharray="2.4 0.6 3.0 0.5 3.0 0.6 1.2 0.5 3.6 0.6 4.4 0.5 3.6 0.8 3.0 0.5 3.6 0.8 1.8 0.8"/><path d="M0 3.76H28.5" stroke-dasharray="1.8 0.8 2.4 0.6 2.4 0.8 3.6 0.8 3.0 0.6 3.6 0.5 3.6 0.8 3.6 0.5 1.2 0.5 3.0 0.5 1.8 0.6"/><path d="M1.6 5.48H34.8" stroke-dasharray="1.2 0.6 4.4 0.5 1.2 0.6 3.0 0.5 3.6 0.6 3.6 0.8 1.8 0.5 3.0 0.5 1.8 0.8 4.4 0.6 3.0 0.5"/><path d="M0 7.20H34.8" stroke-dasharray="2.4 0.5 3.0 0.5 1.8 0.6 1.2 0.6 1.8 0.8 1.2 0.6 3.6 0.5 1.8 0.8 4.4 0.6 3.6 0.5 3.6 0.8"/><path d="M0 8.92H34.8" stroke-dasharray="4.4 0.6 4.4 0.6 2.4 0.5 4.4 0.8 2.4 0.6 3.6 0.5 1.8 0.8 4.4 0.8 4.4 0.8"/><path d="M0 10.64H34.8" stroke-dasharray="1.8 0.6 3.6 0.6 2.4 0.6 2.4 0.5 3.0 0.6 1.2 0.6 4.4 0.8 1.8 0.5 4.4 0.5 1.2 0.8 3.6 0.5"/><path d="M0 12.36H26.3" stroke-dasharray="2.4 0.6 1.8 0.6 1.2 0.6 2.4 0.5 1.8 0.6 1.8 0.6 2.4 0.5 3.6 0.8 2.4 0.8 3.6 0.6 3.0 0.5 3.0 0.6"/><path d="M1.6 14.08H34.8" stroke-dasharray="1.2 0.5 3.0 0.6 3.0 0.5 3.6 0.5 3.0 0.5 1.8 0.8 3.0 0.6 4.4 0.8 3.6 0.8 3.6 0.8"/><path d="M1.6 15.80H34.8" stroke-dasharray="3.0 0.5 1.8 0.8 3.0 0.8 1.8 0.5 3.0 0.8 3.6 0.8 3.6 0.5 1.2 0.5 3.0 0.6 1.2 0.8 1.2 0.8 1.2 0.8"/><path d="M0 17.52H34.8" stroke-dasharray="1.2 0.6 4.4 0.5 3.6 0.8 1.8 0.5 1.8 0.8 3.6 0.6 3.6 0.8 1.8 0.8 4.4 0.8 3.6 0.6"/></g></pattern></defs><rect width="34.8" height="38.1" fill="url(#lp20)"/></svg><svg style="left:43px;top:85px;" width="35.80" height="50.90" viewBox="-0.600 -0.100 35.800 50.900"><defs><pattern id="lp21" width="34.8" height="18.92" patternUnits="userSpaceOnUse"><g stroke="#474747" stroke-width="0.64" fill="none"><path d="M0 0.32H34.8" stroke-dasharray="2.4 0.6 1.8 0.5 2.4 0.6 1.8 0.5 3.0 0.5 4.4 0.6 2.4 0.6 4.4 0.6 3.0 0.5 1.8 0.5 3.0 0.6"/><path d="M0 2.04H34.8" stroke-dasharray="3.0 0.6 1.8 0.5 1.2 0.5 1.8 0.8 1.8 0.6 4.4 0.8 4.4 0.6 3.0 0.8 3.6 0.8 3.6 0.5"/><path d="M1.6 3.76H19.1" stroke-dasharray="4.4 0.6 1.8 0.5 1.2 0.6 3.0 0.5 3.6 0.6 1.2 0.5 2.4 0.5 3.6 0.8 2.4 0.5 1.2 0.5 3.6 0.6 3.6 0.8"/><path d="M1.6 5.48H34.8" stroke-dasharray="2.4 0.6 1.8 0.6 4.4 0.5 1.2 0.5 1.8 0.6 4.4 0.8 2.4 0.8 4.4 0.6 3.0 0.6 1.8 0.8 3.6 0.8"/><path d="M0 7.20H34.8" stroke-dasharray="1.2 0.6 1.2 0.6 3.0 0.6 2.4 0.5 4.4 0.6 1.2 0.6 3.0 0.5 3.6 0.5 3.6 0.6 2.4 0.8 1.2 0.5 3.0 0.6"/><path d="M0 8.92H34.8" stroke-dasharray="3.6 0.5 1.8 0.6 3.6 0.6 1.8 0.8 2.4 0.6 1.8 0.6 1.2 0.5 1.2 0.8 4.4 0.8 1.2 0.6 4.4 0.8 1.2 0.6"/><path d="M0 10.64H34.8" stroke-dasharray="1.8 0.8 1.8 0.6 1.2 0.8 1.8 0.8 4.4 0.8 2.4 0.5 2.4 0.5 4.4 0.6 2.4 0.5 4.4 0.5 1.2 0.5"/><path d="M0 12.36H34.8" stroke-dasharray="3.0 0.8 3.0 0.5 4.4 0.5 3.0 0.8 2.4 0.8 1.2 0.6 3.6 0.6 1.2 0.5 4.4 0.6 2.4 0.6"/><path d="M1.6 14.08H34.8" stroke-dasharray="4.4 0.5 1.8 0.6 3.6 0.6 1.8 0.5 3.0 0.5 3.6 0.6 1.8 0.5 1.8 0.6 3.0 0.8 3.6 0.5 1.8 0.5"/><path d="M0 15.80H34.8" stroke-dasharray="1.2 0.6 1.8 0.8 1.8 0.5 1.8 0.6 2.4 0.6 4.4 0.8 1.8 0.6 1.8 0.6 3.0 0.6 1.2 0.5 3.6 0.5 3.6 0.5"/><path d="M0 17.52H34.8" stroke-dasharray="3.0 0.8 4.4 0.6 3.0 0.6 3.6 0.6 2.4 0.5 1.2 0.8 4.4 0.8 1.8 0.6 2.4 0.5 3.6 0.8"/></g></pattern></defs><rect width="34.8" height="49.9" fill="url(#lp21)"/></svg><svg style="left:80px;top:85px;" width="72.80" height="46.80" viewBox="-0.100 -0.200 72.800 46.800"><svg x="0" y="0" width="71.8" height="45.8" viewBox="0 0 71.8 45.8" overflow="hidden"><defs><linearGradient id="mg1" x1="0" y1="0" x2="1" y2="0"><stop offset="0" stop-color="#7a9cae"/><stop offset="1" stop-color="#5d8496"/></linearGradient><linearGradient id="mg2" x1="0" y1="0" x2="1" y2="1"><stop offset="0" stop-color="#b4b4b4"/><stop offset="1" stop-color="#cfcfcf"/></linearGradient><filter id="manb" x="-5%" y="-5%" width="110%" height="110%"><feGaussianBlur stdDeviation="0.450"/></filter></defs><rect width="71.800" height="45.800" fill="url(#mg2)"/><g filter="url(#manb)"><path d="M0 0h71.800v15.500L0 39.500z" fill="url(#mg1)"/><g fill="#3b3835"><path d="M0.3 0H4V37.2L0.3 38.4z"/><path d="M9 0H12.8V34.7L9 35.9z"/><path d="M17 0H21V32.2L17 33.4z"/><path d="M23.8 0H27.6V30.2L23.8 31.4z"/><path d="M30 0H33V28.2L30 29.4z"/><path d="M35.5 0H38V26.7L35.5 27.9z"/><path d="M41 0H43.6V24.7L41 25.9z"/><path d="M46 0H48V23.0L46 24.2z"/><path d="M50 0H51.7V21.7L50 22.9z"/><path d="M53.8 0H55.5V20.5L53.8 21.7z"/><path d="M57 0H58.7V19.4L57 20.6z"/><path d="M60 0H61.6V18.5L60 19.7z"/><path d="M62.8 0H64V17.7L62.8 18.9z"/><path d="M65.4 0H68V16.7L65.4 17.9z"/></g><path d="M68 0h3.800v16l-3.800 1z" fill="#1d5560"/><path d="M21.500 34l3-13 4.500-7 5.500-2.500h8l7.500 3.500 2.500 10 2 15.500-7.500 4.300-4.600-7.800-1 6.500H32l-3.500-.900V30l-3 5.500z" fill="#b5b9c0"/><path d="M29 14l3 10-3.500 18.500" stroke="#8f949c" stroke-width="0.800" fill="none"/><path d="M34.500 13h7l.500 23h-7.800z" fill="#f1f2f6"/><ellipse cx="39" cy="7.300" rx="4.300" ry="5.700" fill="#8b6552"/><path d="M34.500 6.500c-.600-5.500 9.500-6.500 9.700-.500-2.500-2-7-2-9.700.500z" fill="#1c1917"/><path d="M35.500 10.500c2 2.500 5 2.500 7 0l-.500 2.700c-2 1.300-4.500 1.300-6 0z" fill="#5b4337"/><path d="M33.800 36h9.200v2h-9.200z" fill="#1b1b1d"/><path d="M32.300 38h12l2.200 7.800H33z" fill="#3a4049"/><circle cx="23.300" cy="35.600" r="1.700" fill="#9a705c"/><path d="M50.500 40.500l3 .5.800 4.800h-2.800z" fill="#f3f3f5"/></g></svg></svg><svg style="left:80px;top:132px;" width="72.80" height="3.80" viewBox="0.000 -0.300 72.800 3.800"><defs><pattern id="lp22" width="71.8" height="17.60" patternUnits="userSpaceOnUse"><g stroke="#333" stroke-width="0.8" fill="none"><path d="M0 0.40H71.8" stroke-dasharray="3.6 0.6 1.8 0.5 1.2 0.5 2.4 0.6 1.8 0.6 1.8 0.5 1.8 0.5 4.4 0.5 1.2 0.5 4.4 0.8 3.0 0.6 3.0 0.6 4.4 0.8 3.6 0.5 3.0 0.6 1.8 0.5 4.4 0.8 4.4 0.5 2.4 0.6 2.4 0.8 2.4 0.8"/><path d="M0 2.00H71.8" stroke-dasharray="1.2 0.6 2.4 0.5 1.2 0.8 1.2 0.8 4.4 0.5 4.4 0.5 4.4 0.8 4.4 0.8 4.4 0.8 2.4 0.5 4.4 0.8 2.4 0.8 1.8 0.8 3.0 0.8 1.8 0.6 2.4 0.8 3.6 0.6 3.0 0.5 1.2 0.6 4.4 0.6"/><path d="M0 3.60H47.7" stroke-dasharray="4.4 0.8 4.4 0.5 4.4 0.5 2.4 0.6 2.4 0.8 3.0 0.6 4.4 0.5 4.4 0.5 2.4 0.6 2.4 0.5 3.6 0.6 3.0 0.5 3.0 0.5 2.4 0.8 4.4 0.6 1.8 0.8 3.6 0.8 4.4 0.8"/><path d="M0 5.20H56.3" stroke-dasharray="3.0 0.5 1.8 0.6 3.6 0.8 2.4 0.8 2.4 0.5 3.0 0.6 1.2 0.8 3.6 0.5 3.6 0.6 4.4 0.5 2.4 0.5 4.4 0.5 1.8 0.6 1.8 0.5 2.4 0.8 3.0 0.8 2.4 0.8 4.4 0.6 3.6 0.6 1.8 0.8 1.8 0.8"/><path d="M0 6.80H29.7" stroke-dasharray="3.6 0.8 2.4 0.5 1.8 0.8 1.2 0.8 1.2 0.8 1.2 0.5 1.8 0.8 3.6 0.6 3.0 0.5 2.4 0.8 3.0 0.8 4.4 0.8 4.4 0.6 3.0 0.6 2.4 0.8 1.2 0.6 2.4 0.6 4.4 0.8 4.4 0.5 3.0 0.5 2.4 0.5 3.6 0.6"/><path d="M0 8.40H71.8" stroke-dasharray="1.2 0.8 3.0 0.6 1.2 0.6 1.8 0.8 1.2 0.6 3.0 0.6 1.2 0.8 2.4 0.6 3.0 0.8 3.0 0.8 3.6 0.6 1.8 0.6 3.6 0.8 3.6 0.8 3.6 0.6 1.2 0.6 4.4 0.6 2.4 0.8 3.0 0.8 3.6 0.5 1.2 0.5 3.6 0.6 4.4 0.8"/><path d="M0 10.00H71.8" stroke-dasharray="3.0 0.5 1.8 0.8 1.2 0.5 3.0 0.6 3.6 0.5 1.2 0.8 3.6 0.8 1.2 0.6 2.4 0.6 1.2 0.8 1.8 0.8 1.2 0.6 3.0 0.8 1.8 0.8 3.0 0.8 3.6 0.5 3.6 0.8 3.6 0.5 2.4 0.6 2.4 0.5 2.4 0.5 2.4 0.8 2.4 0.5 3.0 0.6"/><path d="M0 11.60H71.8" stroke-dasharray="3.0 0.5 3.0 0.5 1.2 0.6 2.4 0.6 3.6 0.6 1.8 0.6 1.2 0.5 1.8 0.6 3.6 0.6 2.4 0.8 1.8 0.5 3.0 0.6 3.6 0.6 1.8 0.5 3.0 0.6 3.0 0.5 3.0 0.6 1.8 0.6 1.8 0.8 1.8 0.6 3.6 0.8 4.4 0.8 4.4 0.6"/><path d="M0 13.20H56.1" stroke-dasharray="3.6 0.8 1.2 0.8 4.4 0.6 3.6 0.5 1.2 0.5 3.6 0.5 3.0 0.5 4.4 0.5 1.2 0.8 1.8 0.5 4.4 0.5 1.8 0.6 4.4 0.5 4.4 0.5 3.6 0.6 1.8 0.6 3.0 0.6 1.2 0.5 3.0 0.6 2.4 0.5 1.2 0.8 3.0 0.5"/><path d="M0 14.80H71.8" stroke-dasharray="3.0 0.5 1.2 0.8 4.4 0.8 1.8 0.8 1.8 0.8 1.8 0.5 2.4 0.5 4.4 0.6 2.4 0.8 4.4 0.5 3.6 0.5 4.4 0.6 4.4 0.6 2.4 0.6 2.4 0.5 1.2 0.5 1.2 0.8 3.0 0.8 3.0 0.6 4.4 0.6 2.4 0.6"/><path d="M0 16.40H48.2" stroke-dasharray="4.4 0.8 4.4 0.8 1.8 0.5 4.4 0.8 3.6 0.5 3.6 0.5 4.4 0.8 3.0 0.8 1.8 0.6 2.4 0.8 4.4 0.5 1.2 0.5 4.4 0.6 1.2 0.8 1.8 0.5 1.2 0.6 1.2 0.5 4.4 0.8 1.8 0.8 4.4 0.6"/></g></pattern></defs><rect width="71.8" height="2.8" fill="url(#lp22)"/></svg><div style="left:6.00px;top:138.40px;width:145.80px;height:78.50px;background:#ebe08b;box-sizing:border-box;border:0.5px solid #dcd188;"><span class="t" style="left:0.20px;top:0.10px;font-size:2.9px;line-height:1;color:#221;font-weight:700;transform:scaleX(0.7069);">missing ad: 509445</span></div></div>
<svg style="left:1526px;top:667px;" width="21.00" height="7.00" viewBox="-0.700 -0.500 21.000 7.000"><circle cx="3.100" cy="3" r="1.950" fill="#444"/><circle cx="10" cy="3" r="1.950" fill="#444"/><circle cx="16.900" cy="3" r="1.950" fill="#444"/></svg>
<svg style="left:1564px;top:660px;" width="24.00" height="21.00" viewBox="-0.100 -0.500 24.000 21.000"><g fill="none" stroke="#ababab" stroke-width="2.100"><path d="M4.300 12.800A7.800 7.800 0 0 1 17.600 4.700"/><path d="M18.800 7.200A7.800 7.800 0 0 1 5.500 15.300"/></g><path d="M0.400 8.300h7.400l-4 5z" fill="#ababab"/><path d="M22.700 11.700h-7.400l4-5z" fill="#ababab"/><rect x="8.400" y="8.900" width="6.200" height="5" rx="0.700" fill="#ababab"/><path d="M9.800 9.100V7.700a1.700 1.700 0 0 1 3.400 0v1.400" fill="none" stroke="#ababab" stroke-width="1.300"/><circle cx="11.500" cy="11.400" r="0.800" fill="#f7f7f7"/></svg>
<svg style="left:1604px;top:659px;" width="23.00" height="23.00" viewBox="-0.300 -0.500 23.000 23.000"><ellipse cx="8" cy="4.300" rx="3.500" ry="4.300" fill="#a9a9a9"/><path d="M0.500 15.600c0-2.600 1.200-4 3.300-4.700l2.700-1 .300-1.600h2.400l.300 1.600 2.700 1c1 .350 1.800.900 2.300 1.700L10.200 15.600z" fill="#a9a9a9"/><path d="M10 21.600l.900-3.300 8.600-8.600 2.400 2.400-8.600 8.600z" fill="#a9a9a9"/></svg>
<div style="left:1637.20px;top:658.70px;width:23.60px;height:23.60px;background:#fafafa;border-radius:50%;box-sizing:border-box;border:1px solid #d2d2d2;"></div><svg style="left:1641px;top:662px;" width="17.00" height="17.00" viewBox="0.000 -0.500 17.000 17.000"><path d="M8 1v14M1 8h14" stroke="#111" stroke-width="1.900"/></svg>
<span class="t" style="left:1518.30px;top:695.00px;font-size:14.83px;color:#111;font-weight:700;transform:scaleX(0.9941);">PS-1412-A-008</span>
<div style="left:1674.50px;top:420.80px;width:163.50px;height:300.00px;background:#f7f7f7;border-radius:5px 5px 6px 0;"></div>
<div style="left:1674.50px;top:420.80px;width:163.50px;height:4.50px;background:#808080;border-radius:5px 5px 0 0;"></div>
<div style="left:1674.50px;top:428.80px;width:158.50px;height:217.20px;background:#fff;overflow:hidden;"><span class="t" style="left:123.50px;top:0.40px;font-size:2.4px;line-height:1;color:#222;font-weight:700;transform:scaleX(0.6182);">THE POST  Thursday, December 14, 2023</span><div style="left:5.60px;top:2.70px;width:146.30px;height:0.90px;background:#86cdea;"></div><span class="t" style="left:16.10px;top:5.30px;font-size:4.2px;line-height:1.0;color:#111;font-weight:700;font-family:'Liberation Serif',serif;transform:scaleX(0.9429);">thepost.co.nz</span><span class="t" style="left:5.60px;top:6.80px;font-size:1.9px;line-height:1;color:#444;transform:scaleX(0.9283);">read more at</span><span class="t" style="left:134.90px;top:4.70px;font-size:4.7px;line-height:1.0;color:#1e9bd7;font-weight:700;transform:scaleX(0.9285);">News</span><div style="left:147.60px;top:4.20px;width:4.60px;height:5.60px;background:#fff;box-sizing:border-box;border:0.8px solid #2aa5dc;"></div><div style="left:5.60px;top:138.40px;width:146.30px;height:78.50px;background:#ebe08b;box-sizing:border-box;border:0.5px solid #dcd188;"><span class="t" style="left:0.20px;top:0.10px;font-size:2.9px;line-height:1;color:#221;font-weight:700;transform:scaleX(0.7069);">missing ad: 510794</span></div></div>
<div style="left:1688.20px;top:658.70px;width:23.60px;height:23.60px;background:#fafafa;border-radius:50%;box-sizing:border-box;border:1px solid #d2d2d2;"></div><svg style="left:1692px;top:662px;" width="17.00" height="17.00" viewBox="-0.000 -0.500 17.000 17.000"><path d="M8 1v14M1 8h14" stroke="#111" stroke-width="1.900"/></svg>
<svg style="left:1722px;top:659px;" width="23.00" height="23.00" viewBox="-0.000 -0.500 23.000 23.000"><ellipse cx="8" cy="4.300" rx="3.500" ry="4.300" fill="#a9a9a9"/><path d="M0.500 15.600c0-2.600 1.200-4 3.300-4.700l2.700-1 .300-1.600h2.400l.300 1.600 2.700 1c1 .350 1.800.900 2.300 1.700L10.200 15.600z" fill="#a9a9a9"/><path d="M10 21.600l.900-3.300 8.600-8.600 2.400 2.400-8.600 8.600z" fill="#a9a9a9"/></svg>
<svg style="left:1761px;top:660px;" width="24.00" height="21.00" viewBox="-0.000 -0.500 24.000 21.000"><g fill="none" stroke="#ababab" stroke-width="2.100"><path d="M4.300 12.800A7.800 7.800 0 0 1 17.600 4.700"/><path d="M18.800 7.200A7.800 7.800 0 0 1 5.500 15.300"/></g><path d="M0.400 8.300h7.400l-4 5z" fill="#ababab"/><path d="M22.700 11.700h-7.400l4-5z" fill="#ababab"/><rect x="8.400" y="8.900" width="6.200" height="5" rx="0.700" fill="#ababab"/><path d="M9.800 9.100V7.700a1.700 1.700 0 0 1 3.400 0v1.400" fill="none" stroke="#ababab" stroke-width="1.300"/><circle cx="11.500" cy="11.400" r="0.800" fill="#f7f7f7"/></svg>
<svg style="left:1802px;top:667px;" width="21.00" height="7.00" viewBox="-0.500 -0.500 21.000 7.000"><circle cx="3.100" cy="3" r="1.950" fill="#444"/><circle cx="10" cy="3" r="1.950" fill="#444"/><circle cx="16.900" cy="3" r="1.950" fill="#444"/></svg>
<span class="t" style="left:1728.10px;top:695.00px;font-size:14.83px;color:#111;font-weight:700;transform:scaleX(0.9902);">PS-1412-A-009</span>
<div style="left:1674.00px;top:428.80px;width:0.00px;height:292.00px;border-left:1px dashed rgba(160,160,160,0.75);"></div>
<svg style="left:544px;top:633px;" width="159.00" height="13.00" viewBox="-0.000 -0.200 159.000 13.000"><path d="M0 0H158l-4 6.0 4 6.0H0l4-6.0z" fill="#5230b4"/></svg>
<svg style="left:894px;top:633px;" width="159.00" height="13.00" viewBox="-0.500 -0.200 159.000 13.000"><path d="M0 0H158l-4 6.0 4 6.0H0l4-6.0z" fill="#5230b4"/></svg>
<svg style="left:1244px;top:633px;" width="159.00" height="13.00" viewBox="-0.500 -0.200 159.000 13.000"><path d="M0 0H158l-4 6.0 4 6.0H0l4-6.0z" fill="#5230b4"/></svg>
<svg style="left:1595px;top:633px;" width="159.00" height="13.00" viewBox="-0.500 -0.200 159.000 13.000"><path d="M0 0H158l-4 6.0 4 6.0H0l4-6.0z" fill="#5230b4"/></svg>
<div style="left:973.00px;top:428.80px;width:0.00px;height:292.00px;border-left:1px dashed rgba(160,160,160,0.75);"></div>
<div style="left:1323.00px;top:428.80px;width:0.00px;height:292.00px;border-left:1px dashed rgba(160,160,160,0.75);"></div>
<div style="left:1674.00px;top:428.80px;width:0.00px;height:292.00px;border-left:1px dashed rgba(160,160,160,0.75);"></div>
<div style="left:109.00px;top:744.60px;width:163.50px;height:300.00px;background:#f7f7f7;border-radius:5px 5px 0 6px;"></div>
<div style="left:109.00px;top:744.60px;width:163.50px;height:4.50px;background:#808080;border-radius:5px 5px 0 0;"></div>
<div style="left:114.00px;top:752.60px;width:158.50px;height:217.20px;background:#fff;overflow:hidden;"><span class="t" style="left:6.00px;top:0.60px;font-size:2.4px;line-height:1;color:#222;font-weight:700;transform:scaleX(0.6182);">THE POST  Thursday, December 14, 2023</span><div style="left:6.10px;top:3.70px;width:145.80px;height:10.30px;background:#bce4ea;box-sizing:border-box;border:0.5px solid #8fb0b5;"><span class="t" style="left:0.50px;top:0.60px;font-size:3.6px;line-height:1;color:#234;font-family:'Liberation Serif',serif;">missing section header Te Karanga Jacobs_1_1</span></div><div style="left:6.10px;top:164.80px;width:145.80px;height:60.00px;background:#ebe08b;box-sizing:border-box;border:0.5px solid #dcd188;"><span class="t" style="left:0.20px;top:0.10px;font-size:2.9px;line-height:1;color:#221;font-weight:700;transform:scaleX(0.7069);">missing ad: 508954</span></div></div>
<svg style="left:124px;top:991px;" width="21.00" height="7.00" viewBox="-0.700 -0.300 21.000 7.000"><circle cx="3.100" cy="3" r="1.950" fill="#444"/><circle cx="10" cy="3" r="1.950" fill="#444"/><circle cx="16.900" cy="3" r="1.950" fill="#444"/></svg>
<svg style="left:162px;top:984px;" width="24.00" height="21.00" viewBox="-0.100 -0.300 24.000 21.000"><g fill="none" stroke="#ababab" stroke-width="2.100"><path d="M4.300 12.800A7.800 7.800 0 0 1 17.600 4.700"/><path d="M18.800 7.200A7.800 7.800 0 0 1 5.500 15.300"/></g><path d="M0.400 8.300h7.400l-4 5z" fill="#ababab"/><path d="M22.700 11.700h-7.400l4-5z" fill="#ababab"/><rect x="8.400" y="8.900" width="6.200" height="5" rx="0.700" fill="#ababab"/><path d="M9.800 9.100V7.700a1.700 1.700 0 0 1 3.400 0v1.400" fill="none" stroke="#ababab" stroke-width="1.300"/><circle cx="11.500" cy="11.400" r="0.800" fill="#f7f7f7"/></svg>
<svg style="left:202px;top:983px;" width="23.00" height="23.00" viewBox="-0.300 -0.300 23.000 23.000"><ellipse cx="8" cy="4.300" rx="3.500" ry="4.300" fill="#a9a9a9"/><path d="M0.500 15.600c0-2.600 1.200-4 3.300-4.700l2.700-1 .300-1.600h2.400l.300 1.600 2.700 1c1 .350 1.800.900 2.300 1.700L10.200 15.600z" fill="#a9a9a9"/><path d="M10 21.600l.900-3.300 8.600-8.600 2.400 2.400-8.600 8.600z" fill="#a9a9a9"/></svg>
<div style="left:235.20px;top:982.50px;width:23.60px;height:23.60px;background:#fafafa;border-radius:50%;box-sizing:border-box;border:1px solid #d2d2d2;"></div><svg style="left:239px;top:986px;" width="17.00" height="17.00" viewBox="0.000 -0.300 17.000 17.000"><path d="M8 1v14M1 8h14" stroke="#111" stroke-width="1.900"/></svg>
<span class="t" style="left:116.30px;top:1019.00px;font-size:14.83px;color:#111;font-weight:700;transform:scaleX(0.9941);">PS-1412-A-010</span>
<div style="left:272.50px;top:744.60px;width:163.50px;height:300.00px;background:#f7f7f7;border-radius:5px 5px 6px 0;"></div>
<div style="left:272.50px;top:744.60px;width:163.50px;height:4.50px;background:#808080;border-radius:5px 5px 0 0;"></div>
<div style="left:272.50px;top:752.60px;width:158.50px;height:217.20px;background:#fff;overflow:hidden;"><span class="t" style="left:123.50px;top:0.60px;font-size:2.4px;line-height:1;color:#222;font-weight:700;transform:scaleX(0.6182);">THE POST  Thursday, December 14, 2023</span><div style="left:5.60px;top:3.70px;width:146.70px;height:10.30px;background:#bce4ea;box-sizing:border-box;border:0.5px solid #8fb0b5;"><span class="t" style="left:0.50px;top:0.60px;font-size:3.6px;line-height:1;color:#234;font-family:'Liberation Serif',serif;">missing section header Te Karanga Jacobs_1_0</span></div><div style="left:5.60px;top:164.80px;width:146.70px;height:60.00px;background:#ebe08b;box-sizing:border-box;border:0.5px solid #dcd188;"><span class="t" style="left:0.20px;top:0.10px;font-size:2.9px;line-height:1;color:#221;font-weight:700;transform:scaleX(0.7069);">missing ad: 519549-ab</span></div></div>
<div style="left:286.20px;top:982.50px;width:23.60px;height:23.60px;background:#fafafa;border-radius:50%;box-sizing:border-box;border:1px solid #d2d2d2;"></div><svg style="left:290px;top:986px;" width="17.00" height="17.00" viewBox="-0.000 -0.300 17.000 17.000"><path d="M8 1v14M1 8h14" stroke="#111" stroke-width="1.900"/></svg>
<svg style="left:320px;top:983px;" width="23.00" height="23.00" viewBox="-0.000 -0.300 23.000 23.000"><ellipse cx="8" cy="4.300" rx="3.500" ry="4.300" fill="#a9a9a9"/><path d="M0.500 15.600c0-2.600 1.200-4 3.300-4.700l2.700-1 .300-1.600h2.400l.300 1.600 2.700 1c1 .350 1.800.900 2.300 1.700L10.200 15.600z" fill="#a9a9a9"/><path d="M10 21.600l.900-3.300 8.600-8.600 2.400 2.400-8.600 8.600z" fill="#a9a9a9"/></svg>
<svg style="left:359px;top:984px;" width="24.00" height="21.00" viewBox="-0.000 -0.300 24.000 21.000"><g fill="none" stroke="#ababab" stroke-width="2.100"><path d="M4.300 12.800A7.800 7.800 0 0 1 17.600 4.700"/><path d="M18.800 7.200A7.800 7.800 0 0 1 5.500 15.300"/></g><path d="M0.400 8.300h7.400l-4 5z" fill="#ababab"/><path d="M22.700 11.700h-7.400l4-5z" fill="#ababab"/><rect x="8.400" y="8.900" width="6.200" height="5" rx="0.700" fill="#ababab"/><path d="M9.800 9.100V7.700a1.700 1.700 0 0 1 3.400 0v1.400" fill="none" stroke="#ababab" stroke-width="1.300"/><circle cx="11.500" cy="11.400" r="0.800" fill="#f7f7f7"/></svg>
<svg style="left:400px;top:991px;" width="21.00" height="7.00" viewBox="-0.500 -0.300 21.000 7.000"><circle cx="3.100" cy="3" r="1.950" fill="#444"/><circle cx="10" cy="3" r="1.950" fill="#444"/><circle cx="16.900" cy="3" r="1.950" fill="#444"/></svg>
<span class="t" style="left:326.10px;top:1019.00px;font-size:14.83px;color:#111;font-weight:700;transform:scaleX(0.9981);">PS-1412-A-011</span>
<div style="left:272.00px;top:752.60px;width:0.00px;height:292.00px;border-left:1px dashed rgba(160,160,160,0.75);"></div>
<div style="left:459.50px;top:744.60px;width:163.50px;height:300.00px;background:#f7f7f7;border-radius:5px 5px 0 6px;"></div>
<div style="left:459.50px;top:744.60px;width:163.50px;height:4.50px;background:#808080;border-radius:5px 5px 0 0;"></div>
<div style="left:464.50px;top:752.60px;width:158.50px;height:217.20px;background:#fff;overflow:hidden;"><span class="t" style="left:6.00px;top:0.80px;font-size:2.4px;line-height:1;color:#222;font-weight:700;transform:scaleX(0.6182);">THE POST  Thursday, December 14, 2023</span><div style="left:6.20px;top:4.30px;width:6.40px;height:6.10px;background:#111;"><span class="t" style="left:1.00px;top:1.20px;font-size:3.8px;line-height:1;color:#fff;font-weight:700;">12</span></div><div style="left:13.90px;top:4.30px;width:138.80px;height:6.10px;background:#00a0b4;"><span class="t" style="left:2.40px;top:1.20px;font-size:3.8px;line-height:1;color:#fff;font-weight:700;">Business</span></div><div style="left:5.40px;top:138.50px;width:36.50px;height:90.00px;background:#ebe08b;box-sizing:border-box;border:0.5px solid #dcd188;"><span class="t" style="left:0.20px;top:0.10px;font-size:2.9px;line-height:1;color:#221;font-weight:700;transform:scaleX(0.7069);">missing ad: 548771</span></div></div>
<svg style="left:475px;top:991px;" width="21.00" height="7.00" viewBox="-0.200 -0.300 21.000 7.000"><circle cx="3.100" cy="3" r="1.950" fill="#444"/><circle cx="10" cy="3" r="1.950" fill="#444"/><circle cx="16.900" cy="3" r="1.950" fill="#444"/></svg>
<svg style="left:512px;top:984px;" width="24.00" height="21.00" viewBox="-0.600 -0.300 24.000 21.000"><g fill="none" stroke="#ababab" stroke-width="2.100"><path d="M4.300 12.800A7.800 7.800 0 0 1 17.600 4.700"/><path d="M18.800 7.200A7.800 7.800 0 0 1 5.500 15.300"/></g><path d="M0.400 8.300h7.400l-4 5z" fill="#ababab"/><path d="M22.700 11.700h-7.400l4-5z" fill="#ababab"/><rect x="8.400" y="8.900" width="6.200" height="5" rx="0.700" fill="#ababab"/><path d="M9.800 9.100V7.700a1.700 1.700 0 0 1 3.400 0v1.400" fill="none" stroke="#ababab" stroke-width="1.300"/><circle cx="11.500" cy="11.400" r="0.800" fill="#f7f7f7"/></svg>
<svg style="left:552px;top:983px;" width="23.00" height="23.00" viewBox="-0.800 -0.300 23.000 23.000"><ellipse cx="8" cy="4.300" rx="3.500" ry="4.300" fill="#a9a9a9"/><path d="M0.500 15.600c0-2.600 1.200-4 3.300-4.700l2.700-1 .300-1.600h2.400l.300 1.600 2.700 1c1 .350 1.800.900 2.300 1.700L10.200 15.600z" fill="#a9a9a9"/><path d="M10 21.600l.900-3.300 8.600-8.600 2.400 2.400-8.600 8.600z" fill="#a9a9a9"/></svg>
<div style="left:585.70px;top:982.50px;width:23.60px;height:23.60px;background:#fafafa;border-radius:50%;box-sizing:border-box;border:1px solid #d2d2d2;"></div><svg style="left:589px;top:986px;" width="17.00" height="17.00" viewBox="-0.500 -0.300 17.000 17.000"><path d="M8 1v14M1 8h14" stroke="#111" stroke-width="1.900"/></svg>
<span class="t" style="left:466.80px;top:1019.00px;font-size:14.83px;color:#111;font-weight:700;transform:scaleX(0.9941);">PS-1412-A-012</span>
<div style="left:623.00px;top:744.60px;width:163.50px;height:300.00px;background:#f7f7f7;border-radius:5px 5px 6px 0;"></div>
<div style="left:623.00px;top:744.60px;width:163.50px;height:4.50px;background:#808080;border-radius:5px 5px 0 0;"></div>
<div style="left:623.00px;top:752.60px;width:158.50px;height:217.20px;background:#fff;overflow:hidden;"><span class="t" style="left:123.50px;top:0.80px;font-size:2.4px;line-height:1;color:#222;font-weight:700;transform:scaleX(0.6182);">THE POST  Thursday, December 14, 2023</span><div style="left:66.30px;top:14.20px;width:54.50px;height:51.80px;background:#ebe08b;box-sizing:border-box;border:0.5px solid #dcd188;"><span class="t" style="left:0.20px;top:0.10px;font-size:2.9px;line-height:1;color:#221;font-weight:700;transform:scaleX(0.7069);">missing ad: 5191-5191-Xmas2</span></div></div>
<div style="left:636.70px;top:982.50px;width:23.60px;height:23.60px;background:#fafafa;border-radius:50%;box-sizing:border-box;border:1px solid #d2d2d2;"></div><svg style="left:640px;top:986px;" width="17.00" height="17.00" viewBox="-0.500 -0.300 17.000 17.000"><path d="M8 1v14M1 8h14" stroke="#111" stroke-width="1.900"/></svg>
<svg style="left:670px;top:983px;" width="23.00" height="23.00" viewBox="-0.500 -0.300 23.000 23.000"><ellipse cx="8" cy="4.300" rx="3.500" ry="4.300" fill="#a9a9a9"/><path d="M0.500 15.600c0-2.600 1.200-4 3.300-4.700l2.700-1 .300-1.600h2.400l.300 1.600 2.700 1c1 .350 1.800.900 2.300 1.700L10.200 15.600z" fill="#a9a9a9"/><path d="M10 21.600l.900-3.300 8.600-8.600 2.400 2.400-8.600 8.600z" fill="#a9a9a9"/></svg>
<svg style="left:709px;top:984px;" width="24.00" height="21.00" viewBox="-0.500 -0.300 24.000 21.000"><g fill="none" stroke="#ababab" stroke-width="2.100"><path d="M4.300 12.800A7.800 7.800 0 0 1 17.600 4.700"/><path d="M18.800 7.200A7.800 7.800 0 0 1 5.500 15.300"/></g><path d="M0.400 8.300h7.400l-4 5z" fill="#ababab"/><path d="M22.700 11.700h-7.400l4-5z" fill="#ababab"/><rect x="8.400" y="8.900" width="6.200" height="5" rx="0.700" fill="#ababab"/><path d="M9.800 9.100V7.700a1.700 1.700 0 0 1 3.400 0v1.400" fill="none" stroke="#ababab" stroke-width="1.300"/><circle cx="11.500" cy="11.400" r="0.800" fill="#f7f7f7"/></svg>
<svg style="left:751px;top:991px;" width="21.00" height="7.00" viewBox="-0.000 -0.300 21.000 7.000"><circle cx="3.100" cy="3" r="1.950" fill="#444"/><circle cx="10" cy="3" r="1.950" fill="#444"/><circle cx="16.900" cy="3" r="1.950" fill="#444"/></svg>
<span class="t" style="left:676.60px;top:1019.00px;font-size:14.83px;color:#111;font-weight:700;transform:scaleX(0.9902);">PS-1412-A-013</span>
<div style="left:622.50px;top:752.60px;width:0.00px;height:292.00px;border-left:1px dashed rgba(160,160,160,0.75);"></div>
<div style="left:810.00px;top:744.60px;width:163.50px;height:300.00px;background:#f7f7f7;border-radius:5px 5px 0 6px;"></div>
<div style="left:810.00px;top:744.60px;width:163.50px;height:4.50px;background:#808080;border-radius:5px 5px 0 0;"></div>
<div style="left:815.00px;top:752.60px;width:158.50px;height:217.20px;background:#fff;overflow:hidden;"><span class="t" style="left:123.50px;top:0.80px;font-size:2.4px;line-height:1;color:#222;font-weight:700;transform:scaleX(0.6182);">THE POST  Thursday, December 14, 2023</span><div style="left:5.50px;top:4.30px;width:138.10px;height:6.10px;background:#28bab2;"><span class="t" style="left:105.00px;top:1.20px;font-size:3.8px;line-height:1;color:#fff;font-weight:700;transform:scaleX(0.9725);">The Post:  Insight</span></div><div style="left:144.00px;top:4.30px;width:7.60px;height:6.10px;background:#fff;"><span class="t" style="left:1.30px;top:0.80px;font-size:4.6px;line-height:1;color:#111;font-weight:700;">15</span></div><div style="left:5.50px;top:164.60px;width:146.50px;height:60.00px;background:#ebe08b;box-sizing:border-box;border:0.5px solid #dcd188;"><span class="t" style="left:0.20px;top:0.10px;font-size:2.9px;line-height:1;color:#221;font-weight:700;transform:scaleX(0.7069);">missing ad: 51801-21</span></div></div>
<svg style="left:825px;top:991px;" width="21.00" height="7.00" viewBox="-0.700 -0.300 21.000 7.000"><circle cx="3.100" cy="3" r="1.950" fill="#444"/><circle cx="10" cy="3" r="1.950" fill="#444"/><circle cx="16.900" cy="3" r="1.950" fill="#444"/></svg>
<svg style="left:863px;top:984px;" width="24.00" height="21.00" viewBox="-0.100 -0.300 24.000 21.000"><g fill="none" stroke="#ababab" stroke-width="2.100"><path d="M4.300 12.800A7.800 7.800 0 0 1 17.600 4.700"/><path d="M18.800 7.200A7.800 7.800 0 0 1 5.500 15.300"/></g><path d="M0.400 8.300h7.400l-4 5z" fill="#ababab"/><path d="M22.700 11.700h-7.400l4-5z" fill="#ababab"/><rect x="8.400" y="8.900" width="6.200" height="5" rx="0.700" fill="#ababab"/><path d="M9.800 9.100V7.700a1.700 1.700 0 0 1 3.400 0v1.400" fill="none" stroke="#ababab" stroke-width="1.300"/><circle cx="11.500" cy="11.400" r="0.800" fill="#f7f7f7"/></svg>
<svg style="left:903px;top:983px;" width="23.00" height="23.00" viewBox="-0.300 -0.300 23.000 23.000"><ellipse cx="8" cy="4.300" rx="3.500" ry="4.300" fill="#a9a9a9"/><path d="M0.500 15.600c0-2.600 1.200-4 3.300-4.700l2.700-1 .300-1.600h2.400l.300 1.600 2.700 1c1 .350 1.800.900 2.300 1.700L10.200 15.600z" fill="#a9a9a9"/><path d="M10 21.600l.900-3.300 8.600-8.600 2.400 2.400-8.600 8.600z" fill="#a9a9a9"/></svg>
<div style="left:936.20px;top:982.50px;width:23.60px;height:23.60px;background:#fafafa;border-radius:50%;box-sizing:border-box;border:1px solid #d2d2d2;"></div><svg style="left:940px;top:986px;" width="17.00" height="17.00" viewBox="0.000 -0.300 17.000 17.000"><path d="M8 1v14M1 8h14" stroke="#111" stroke-width="1.900"/></svg>
<span class="t" style="left:817.30px;top:1019.00px;font-size:14.83px;color:#111;font-weight:700;transform:scaleX(0.9941);">PS-1412-A-014</span>
<div style="left:973.50px;top:744.60px;width:163.50px;height:300.00px;background:#f7f7f7;border-radius:5px 5px 6px 0;"></div>
<div style="left:973.50px;top:744.60px;width:163.50px;height:4.50px;background:#808080;border-radius:5px 5px 0 0;"></div>
<div style="left:973.50px;top:752.60px;width:158.50px;height:217.20px;background:#fff;overflow:hidden;"><span class="t" style="left:123.50px;top:0.80px;font-size:2.4px;line-height:1;color:#222;font-weight:700;transform:scaleX(0.6182);">THE POST  Thursday, December 14, 2023</span><div style="left:5.50px;top:3.80px;width:146.90px;height:0.90px;background:#bfe3f3;"></div><span class="t" style="left:16.00px;top:5.80px;font-size:3.6px;line-height:1.0;color:#111;font-weight:700;font-family:'Liberation Serif',serif;transform:scaleX(1.1001);">thepost.co.nz</span><span class="t" style="left:5.50px;top:6.70px;font-size:1.9px;line-height:1;color:#444;transform:scaleX(0.9283);">read more at</span><span class="t" style="left:128.00px;top:5.60px;font-size:4.0px;line-height:1.0;color:#7cc6e8;font-weight:700;transform:scaleX(1.0922);">Opinion</span><div style="left:147.20px;top:4.90px;width:4.60px;height:5.60px;background:#fff;box-sizing:border-box;border:0.8px solid #8fd0ee;"></div><div style="left:5.50px;top:164.60px;width:146.90px;height:60.00px;background:#ebe08b;box-sizing:border-box;border:0.5px solid #dcd188;"><span class="t" style="left:0.20px;top:0.10px;font-size:2.9px;line-height:1;color:#221;font-weight:700;transform:scaleX(0.7069);">missing ad: 519549-21</span></div></div>
<div style="left:987.20px;top:982.50px;width:23.60px;height:23.60px;background:#fafafa;border-radius:50%;box-sizing:border-box;border:1px solid #d2d2d2;"></div><svg style="left:991px;top:986px;" width="17.00" height="17.00" viewBox="-0.000 -0.300 17.000 17.000"><path d="M8 1v14M1 8h14" stroke="#111" stroke-width="1.900"/></svg>
<svg style="left:1021px;top:983px;" width="23.00" height="23.00" viewBox="-0.000 -0.300 23.000 23.000"><ellipse cx="8" cy="4.300" rx="3.500" ry="4.300" fill="#a9a9a9"/><path d="M0.500 15.600c0-2.600 1.200-4 3.300-4.700l2.700-1 .300-1.600h2.400l.300 1.600 2.700 1c1 .350 1.800.900 2.300 1.700L10.200 15.600z" fill="#a9a9a9"/><path d="M10 21.600l.900-3.300 8.600-8.600 2.400 2.400-8.600 8.600z" fill="#a9a9a9"/></svg>
<svg style="left:1060px;top:984px;" width="24.00" height="21.00" viewBox="-0.000 -0.300 24.000 21.000"><g fill="none" stroke="#ababab" stroke-width="2.100"><path d="M4.300 12.800A7.800 7.800 0 0 1 17.600 4.700"/><path d="M18.800 7.200A7.800 7.800 0 0 1 5.500 15.300"/></g><path d="M0.400 8.300h7.400l-4 5z" fill="#ababab"/><path d="M22.700 11.700h-7.400l4-5z" fill="#ababab"/><rect x="8.400" y="8.900" width="6.200" height="5" rx="0.700" fill="#ababab"/><path d="M9.800 9.100V7.700a1.700 1.700 0 0 1 3.400 0v1.400" fill="none" stroke="#ababab" stroke-width="1.300"/><circle cx="11.500" cy="11.400" r="0.800" fill="#f7f7f7"/></svg>
<svg style="left:1101px;top:991px;" width="21.00" height="7.00" viewBox="-0.500 -0.300 21.000 7.000"><circle cx="3.100" cy="3" r="1.950" fill="#444"/><circle cx="10" cy="3" r="1.950" fill="#444"/><circle cx="16.900" cy="3" r="1.950" fill="#444"/></svg>
<span class="t" style="left:1027.10px;top:1019.00px;font-size:14.83px;color:#111;font-weight:700;transform:scaleX(0.9902);">PS-1412-A-015</span>
<div style="left:973.00px;top:752.60px;width:0.00px;height:292.00px;border-left:1px dashed rgba(160,160,160,0.75);"></div>
<div style="left:1160.00px;top:744.60px;width:163.50px;height:300.00px;background:#f7f7f7;border-radius:5px 5px 0 6px;"></div>
<div style="left:1160.00px;top:744.60px;width:163.50px;height:4.50px;background:#808080;border-radius:5px 5px 0 0;"></div>
<div style="left:1165.00px;top:752.60px;width:158.50px;height:217.20px;background:#fff;overflow:hidden;"><span class="t" style="left:123.50px;top:0.80px;font-size:2.4px;line-height:1;color:#222;font-weight:700;transform:scaleX(0.6182);">THE POST  Thursday, December 14, 2023</span><div style="left:5.60px;top:3.40px;width:147.30px;height:0.90px;background:#f3a89c;"></div><span class="t" style="left:16.10px;top:5.80px;font-size:3.6px;line-height:1.0;color:#111;font-weight:700;font-family:'Liberation Serif',serif;transform:scaleX(1.1001);">thepost.co.nz</span><span class="t" style="left:5.60px;top:6.70px;font-size:1.9px;line-height:1;color:#444;transform:scaleX(0.9283);">read more at</span><span class="t" style="left:139.00px;top:5.30px;font-size:4.0px;line-height:1.0;color:#f0803c;font-weight:700;">TV</span><div style="left:146.30px;top:4.30px;width:4.60px;height:5.60px;background:#fff;box-sizing:border-box;border:0.8px solid #f0803c;"><span class="t" style="left:0.90px;top:0.90px;font-size:3.6px;line-height:1;color:#f0803c;font-weight:700;">21</span></div><div style="left:5.60px;top:101.90px;width:147.30px;height:25.10px;background:#ebe08b;box-sizing:border-box;border:0.5px solid #dcd188;"><span class="t" style="left:0.20px;top:0.10px;font-size:2.9px;line-height:1;color:#221;font-weight:700;transform:scaleX(0.7069);">missing ad: 519449-71</span></div></div>
<svg style="left:1175px;top:991px;" width="21.00" height="7.00" viewBox="-0.700 -0.300 21.000 7.000"><circle cx="3.100" cy="3" r="1.950" fill="#444"/><circle cx="10" cy="3" r="1.950" fill="#444"/><circle cx="16.900" cy="3" r="1.950" fill="#444"/></svg>
<svg style="left:1213px;top:984px;" width="24.00" height="21.00" viewBox="-0.100 -0.300 24.000 21.000"><g fill="none" stroke="#ababab" stroke-width="2.100"><path d="M4.300 12.800A7.800 7.800 0 0 1 17.600 4.700"/><path d="M18.800 7.200A7.800 7.800 0 0 1 5.500 15.300"/></g><path d="M0.400 8.300h7.400l-4 5z" fill="#ababab"/><path d="M22.700 11.700h-7.400l4-5z" fill="#ababab"/><rect x="8.400" y="8.900" width="6.200" height="5" rx="0.700" fill="#ababab"/><path d="M9.800 9.100V7.700a1.700 1.700 0 0 1 3.400 0v1.400" fill="none" stroke="#ababab" stroke-width="1.300"/><circle cx="11.500" cy="11.400" r="0.800" fill="#f7f7f7"/></svg>
<svg style="left:1253px;top:983px;" width="23.00" height="23.00" viewBox="-0.300 -0.300 23.000 23.000"><ellipse cx="8" cy="4.300" rx="3.500" ry="4.300" fill="#a9a9a9"/><path d="M0.500 15.600c0-2.600 1.200-4 3.300-4.700l2.700-1 .300-1.600h2.400l.300 1.600 2.700 1c1 .350 1.800.900 2.300 1.700L10.200 15.600z" fill="#a9a9a9"/><path d="M10 21.600l.900-3.300 8.600-8.600 2.400 2.400-8.600 8.600z" fill="#a9a9a9"/></svg>
<div style="left:1286.20px;top:982.50px;width:23.60px;height:23.60px;background:#fafafa;border-radius:50%;box-sizing:border-box;border:1px solid #d2d2d2;"></div><svg style="left:1290px;top:986px;" width="17.00" height="17.00" viewBox="0.000 -0.300 17.000 17.000"><path d="M8 1v14M1 8h14" stroke="#111" stroke-width="1.900"/></svg>
<span class="t" style="left:1167.30px;top:1019.00px;font-size:14.83px;color:#111;font-weight:700;transform:scaleX(0.9941);">PS-1412-A-016</span>
<div style="left:1323.50px;top:744.60px;width:163.50px;height:300.00px;background:#f7f7f7;border-radius:5px 5px 6px 0;"></div>
<div style="left:1323.50px;top:744.60px;width:163.50px;height:4.50px;background:#808080;border-radius:5px 5px 0 0;"></div>
<div style="left:1323.50px;top:752.60px;width:158.50px;height:217.20px;background:#fff;overflow:hidden;"><span class="t" style="left:6.00px;top:0.80px;font-size:2.4px;line-height:1;color:#222;font-weight:700;transform:scaleX(0.6182);">THE POST  Thursday, December 14, 2023</span><div style="left:6.10px;top:4.10px;width:152.40px;height:220.00px;background:#ebe08b;box-sizing:border-box;border:0.5px solid #dcd188;"><span class="t" style="left:0.20px;top:0.10px;font-size:2.9px;line-height:1;color:#221;font-weight:700;transform:scaleX(0.7069);">missing ad: MI_1H_D14_ROP_2V</span></div></div>
<div style="left:1337.20px;top:982.50px;width:23.60px;height:23.60px;background:#fafafa;border-radius:50%;box-sizing:border-box;border:1px solid #d2d2d2;"></div><svg style="left:1341px;top:986px;" width="17.00" height="17.00" viewBox="-0.000 -0.300 17.000 17.000"><path d="M8 1v14M1 8h14" stroke="#111" stroke-width="1.900"/></svg>
<svg style="left:1371px;top:983px;" width="23.00" height="23.00" viewBox="-0.000 -0.300 23.000 23.000"><ellipse cx="8" cy="4.300" rx="3.500" ry="4.300" fill="#a9a9a9"/><path d="M0.500 15.600c0-2.600 1.200-4 3.300-4.700l2.700-1 .300-1.600h2.400l.300 1.600 2.700 1c1 .350 1.800.900 2.300 1.700L10.200 15.600z" fill="#a9a9a9"/><path d="M10 21.600l.900-3.300 8.600-8.600 2.400 2.400-8.600 8.600z" fill="#a9a9a9"/></svg>
<svg style="left:1410px;top:984px;" width="24.00" height="21.00" viewBox="-0.000 -0.300 24.000 21.000"><g fill="none" stroke="#ababab" stroke-width="2.100"><path d="M4.300 12.800A7.800 7.800 0 0 1 17.600 4.700"/><path d="M18.800 7.200A7.800 7.800 0 0 1 5.500 15.300"/></g><path d="M0.400 8.300h7.400l-4 5z" fill="#ababab"/><path d="M22.700 11.700h-7.400l4-5z" fill="#ababab"/><rect x="8.400" y="8.900" width="6.200" height="5" rx="0.700" fill="#ababab"/><path d="M9.800 9.100V7.700a1.700 1.700 0 0 1 3.400 0v1.400" fill="none" stroke="#ababab" stroke-width="1.300"/><circle cx="11.500" cy="11.400" r="0.800" fill="#f7f7f7"/></svg>
<svg style="left:1451px;top:991px;" width="21.00" height="7.00" viewBox="-0.500 -0.300 21.000 7.000"><circle cx="3.100" cy="3" r="1.950" fill="#444"/><circle cx="10" cy="3" r="1.950" fill="#444"/><circle cx="16.900" cy="3" r="1.950" fill="#444"/></svg>
<span class="t" style="left:1377.10px;top:1019.00px;font-size:14.83px;color:#111;font-weight:700;transform:scaleX(0.9902);">PS-1412-A-017</span>
<div style="left:1323.00px;top:752.60px;width:0.00px;height:292.00px;border-left:1px dashed rgba(160,160,160,0.75);"></div>
<div style="left:1511.00px;top:744.60px;width:163.50px;height:300.00px;background:#f7f7f7;border-radius:5px 5px 0 6px;"></div>
<div style="left:1511.00px;top:744.60px;width:163.50px;height:4.50px;background:#808080;border-radius:5px 5px 0 0;"></div>
<div style="left:1516.00px;top:752.60px;width:158.50px;height:217.20px;background:#fff;overflow:hidden;"><div style="left:0.30px;top:3.70px;width:2.10px;height:220.00px;background:#ebe08b;"></div><span class="t" style="left:123.50px;top:1.20px;font-size:2.4px;line-height:1;color:#222;font-weight:700;transform:scaleX(0.6182);">THE POST  Thursday, December 14, 2023</span><div style="left:6.10px;top:4.20px;width:145.90px;height:0.90px;background:#f3a89c;"></div><span class="t" style="left:16.60px;top:6.40px;font-size:3.6px;line-height:1.0;color:#111;font-weight:700;font-family:'Liberation Serif',serif;transform:scaleX(1.0801);">thepost.co.nz</span><span class="t" style="left:6.10px;top:7.30px;font-size:1.9px;line-height:1;color:#444;transform:scaleX(0.9283);">read more at</span><span class="t" style="left:131.30px;top:5.90px;font-size:4.2px;line-height:1.0;color:#e8432e;font-weight:700;transform:scaleX(1.0487);">Sport</span><div style="left:144.80px;top:5.20px;width:7.20px;height:5.50px;background:#f0533c;"><span class="t" style="left:1.30px;top:0.90px;font-size:3.9px;line-height:1;color:#fff;font-weight:700;">29</span></div><span class="t" style="left:6.10px;top:14.00px;font-size:11.60px;color:#111;font-weight:700;font-family:'Liberation Serif',serif;-webkit-text-stroke:0.22px #111;transform:scaleX(0.9526);">Forced rest of Damian</span><span class="t" style="left:6.10px;top:25.00px;font-size:11.60px;color:#111;font-weight:700;font-family:'Liberation Serif',serif;-webkit-text-stroke:0.22px #111;transform:scaleX(0.9574);">McKenzie takes entertainment</span><span class="t" style="left:6.10px;top:35.00px;font-size:11.60px;color:#111;font-weight:700;font-family:'Liberation Serif',serif;-webkit-text-stroke:0.22px #111;transform:scaleX(0.9382);">out of Super Rugby Pacific su</span><svg style="left:6px;top:50px;" width="18.00" height="2.20" viewBox="-0.100 -0.400 18.000 2.200"><defs><pattern id="lp23" width="17" height="18.70" patternUnits="userSpaceOnUse"><g stroke="#222" stroke-width="0.9" fill="none"><path d="M0 0.45H13.2" stroke-dasharray="1.2 0.8 2.4 0.6 3.0 0.6 3.6 0.6 1.2 0.5 3.0 0.6"/><path d="M0 2.15H17.0" stroke-dasharray="2.4 0.6 4.4 0.5 3.0 0.8 1.2 0.8 3.6 0.5"/><path d="M0 3.85H17.0" stroke-dasharray="1.2 0.6 4.4 0.5 4.4 0.6 1.2 0.8 3.6 0.5"/><path d="M0 5.55H17.0" stroke-dasharray="1.2 0.5 1.8 0.6 1.2 0.5 4.4 0.5 4.4 0.8 3.0 0.5"/><path d="M0 7.25H17.0" stroke-dasharray="1.8 0.8 3.0 0.6 1.2 0.6 1.8 0.8 4.4 0.8 4.4 0.6"/><path d="M0 8.95H17.0" stroke-dasharray="1.2 0.6 3.0 0.6 1.2 0.6 4.4 0.6 3.6 0.6 2.4 0.8"/><path d="M1.6 10.65H7.0" stroke-dasharray="1.8 0.6 1.2 0.8 1.8 0.6 2.4 0.5 1.2 0.8 3.6 0.8 3.6 0.8"/><path d="M0 12.35H17.0" stroke-dasharray="1.8 0.8 1.8 0.5 1.2 0.8 3.0 0.8 2.4 0.8 3.6 0.5"/><path d="M0 14.05H17.0" stroke-dasharray="3.6 0.5 2.4 0.6 1.8 0.5 3.0 0.6 1.2 0.8 3.0 0.8"/><path d="M0 15.75H17.0" stroke-dasharray="2.4 0.6 1.8 0.6 1.2 0.8 4.4 0.8 4.4 0.5"/><path d="M0 17.45H17.0" stroke-dasharray="1.8 0.6 3.6 0.6 3.0 0.6 3.6 0.8 1.8 0.5 1.2 0.6"/></g></pattern></defs><rect width="17" height="1.2" fill="url(#lp23)"/></svg><svg style="left:6px;top:52px;" width="20.00" height="1.80" viewBox="-0.100 -0.800 20.000 1.800"><defs><pattern id="lp24" width="19" height="18.70" patternUnits="userSpaceOnUse"><g stroke="#888" stroke-width="0.8" fill="none"><path d="M0 0.40H19.0" stroke-dasharray="3.6 0.6 3.0 0.5 3.6 0.6 4.4 0.5 3.0 0.6"/><path d="M0 2.10H9.2" stroke-dasharray="1.8 0.5 1.8 0.8 3.6 0.5 1.8 0.5 1.8 0.5 3.6 0.8 4.4 0.6"/><path d="M0 3.80H19.0" stroke-dasharray="1.2 0.8 4.4 0.6 1.8 0.8 1.8 0.8 3.0 0.8 3.0 0.8"/><path d="M0 5.50H19.0" stroke-dasharray="1.8 0.5 1.8 0.6 3.0 0.8 2.4 0.5 3.6 0.5 2.4 0.5 3.6 0.8"/><path d="M0 7.20H9.3" stroke-dasharray="3.0 0.8 4.4 0.6 3.6 0.6 1.8 0.8 3.6 0.8"/><path d="M0 8.90H19.0" stroke-dasharray="3.0 0.5 3.6 0.5 4.4 0.8 1.2 0.6 3.6 0.8"/><path d="M0 10.60H19.0" stroke-dasharray="4.4 0.5 3.6 0.8 1.8 0.5 3.6 0.5 3.0 0.8"/><path d="M1.6 12.30H19.0" stroke-dasharray="1.8 0.6 3.6 0.6 1.2 0.6 3.6 0.6 3.0 0.8 3.0 0.5"/><path d="M0 14.00H19.0" stroke-dasharray="1.2 0.8 3.6 0.6 1.2 0.6 3.0 0.8 1.8 0.6 1.2 0.5 3.6 0.6"/><path d="M1.6 15.70H19.0" stroke-dasharray="3.6 0.8 1.2 0.8 3.6 0.5 1.8 0.8 1.8 0.6 2.4 0.5 1.8 0.6"/><path d="M1.6 17.40H19.0" stroke-dasharray="1.2 0.5 3.6 0.6 2.4 0.6 4.4 0.8 1.8 0.6 3.0 0.8"/></g></pattern></defs><rect width="19" height="0.8" fill="url(#lp24)"/></svg><svg style="left:6px;top:57px;" width="36.00" height="171.00" viewBox="-0.100 -0.100 36.000 171.000"><defs><pattern id="lp25" width="35" height="18.92" patternUnits="userSpaceOnUse"><g stroke="#474747" stroke-width="0.64" fill="none"><path d="M0 0.32H13.8" stroke-dasharray="1.2 0.8 3.0 0.8 1.8 0.6 4.4 0.6 2.4 0.5 1.2 0.6 1.8 0.8 1.8 0.6 3.0 0.5 1.8 0.8 3.6 0.6 3.0 0.5"/><path d="M0 2.04H35.0" stroke-dasharray="2.4 0.6 3.0 0.8 1.2 0.5 4.4 0.8 3.6 0.6 3.6 0.6 3.6 0.6 1.2 0.5 1.8 0.5 4.4 0.5"/><path d="M0 3.76H35.0" stroke-dasharray="3.6 0.8 2.4 0.8 4.4 0.5 1.8 0.8 2.4 0.8 3.6 0.8 3.6 0.5 2.4 0.5 3.0 0.5 3.6 0.6"/><path d="M0 5.48H25.1" stroke-dasharray="1.8 0.6 2.4 0.6 1.2 0.6 3.6 0.8 3.6 0.8 2.4 0.8 4.4 0.6 3.0 0.8 4.4 0.6 3.0 0.8"/><path d="M0 7.20H15.2" stroke-dasharray="3.0 0.8 2.4 0.5 3.6 0.6 1.2 0.8 4.4 0.5 2.4 0.5 4.4 0.6 2.4 0.5 1.2 0.6 4.4 0.5"/><path d="M0 8.92H35.0" stroke-dasharray="4.4 0.5 2.4 0.5 3.0 0.5 4.4 0.8 1.8 0.5 1.8 0.8 4.4 0.5 3.6 0.8 1.2 0.5 2.4 0.6"/><path d="M0 10.64H35.0" stroke-dasharray="1.8 0.6 1.8 0.8 1.2 0.6 2.4 0.8 4.4 0.5 1.8 0.6 1.2 0.8 3.6 0.8 1.2 0.6 1.8 0.5 2.4 0.5 3.6 0.8"/><path d="M0 12.36H35.0" stroke-dasharray="3.6 0.6 2.4 0.8 3.6 0.8 1.8 0.5 3.0 0.8 1.8 0.8 4.4 0.6 1.8 0.8 4.4 0.6 1.2 0.8"/><path d="M0 14.08H35.0" stroke-dasharray="1.8 0.8 2.4 0.5 3.6 0.8 2.4 0.5 4.4 0.6 1.2 0.5 4.4 0.6 2.4 0.6 1.8 0.6 4.4 0.8"/><path d="M0 15.80H35.0" stroke-dasharray="3.6 0.8 3.6 0.8 2.4 0.5 2.4 0.8 4.4 0.6 1.2 0.8 3.6 0.6 1.8 0.5 3.6 0.6 1.8 0.5 2.4 0.6"/><path d="M0 17.52H35.0" stroke-dasharray="1.2 0.6 3.0 0.5 1.2 0.5 2.4 0.8 4.4 0.8 2.4 0.6 4.4 0.8 1.8 0.5 3.6 0.5 1.8 0.5 2.4 0.8"/></g></pattern></defs><rect width="35" height="170" fill="url(#lp25)"/></svg><svg style="left:43px;top:49px;" width="109.70" height="81.20" viewBox="-0.301 -0.698 110.003 80.998"><svg x="0" y="0" width="109" height="80" viewBox="0 0 109 80" overflow="hidden"><defs><filter id="rgb" x="-5%" y="-5%" width="110%" height="110%"><feGaussianBlur stdDeviation="0.500"/></filter><filter id="rgn" x="0" y="0" width="100%" height="100%" color-interpolation-filters="sRGB"><feTurbulence type="fractalNoise" baseFrequency="0.16 0.2" numOctaves="2" seed="7"/><feColorMatrix type="matrix" values="1.3 0.5 0 0 -0.62  1.2 0.2 0 0 -0.50  1.0 0 0.5 0 -0.52  0 0 0 0 1"/></filter></defs><rect width="109" height="80" fill="#33302f"/><rect width="109" height="48" filter="url(#rgn)"/><rect x="0" y="46.800" width="109" height="2" fill="#2b3347"/><rect x="0" y="48.500" width="109" height="18.200" fill="#d62a42"/><rect x="0" y="64.300" width="109" height="2.400" fill="#e8a3bd"/><rect x="0" y="66.600" width="109" height="13.400" fill="#4f9a3c"/><rect x="0" y="74.300" width="109" height="0.800" fill="#9bcf86" opacity="0.8"/><g filter="url(#rgb)"><text x="14" y="59.400" font-family="Liberation Sans,sans-serif" font-size="13.500" fill="#f39ab4">money</text><text x="74.500" y="59.400" font-family="Liberation Sans,sans-serif" font-size="13.500" fill="#f39ab4">pepp</text><path d="M0 52h5.500v6.500H0z" fill="#e9e2d8"/><path d="M5.500 50.500l6 2-1.500 15.500-3.500-1z" fill="#f0873a"/><path d="M8 50l4 1-.500 6-3.500-1z" fill="#e7d83c"/><path d="M104.500 38h4.500v17h-3.500z" fill="#e8392f"/><path d="M105 40h2.500v8H105z" fill="#f2efe9"/><path d="M8.500 19c-1.500 5-1 9 2 13.500l5 2.500 2-3.500-4-5 1-6z" fill="#d2a088"/><path d="M7 17.500l6.500-6 6-2.300h9.500l6 2.600 4 7.200-3.500 3-2.500-2.500.500 21H14l.500-20-3.500 2.500z" fill="#18171a"/><path d="M17 16.500h13v2.500h-13z" fill="#c07f1e" opacity="0.85"/><path d="M16 21h16l.300 11.500H16z" fill="#8e211c"/><path d="M14.500 33.500h18.500l.300 6.500H14.300z" fill="#a88e30"/><path d="M12.200 40.500h19.600l.700 9.500-8.500.500-2-4-1.500 5-8.300-.500z" fill="#121214"/><ellipse cx="24.700" cy="6" rx="4.400" ry="5.200" fill="#dcaa92"/><path d="M20.500 4.500c.500-4.500 8-4.800 8.600-.400-2.500-1.400-6-1.400-8.600.400z" fill="#a8683c"/><path d="M13.500 50.500l6.500.5-1.500 12h-4zM23.500 50.500l7-.5 3 12.500-4 .5z" fill="#cfa088"/><path d="M13.800 59.500h4.800l-.400 8.500h-3.800zM27.300 59.500l5-.5 2 10-4 .5z" fill="#18171a"/><path d="M14 62.300h4.500v1.700H14zM28 62.500l5-.5.300 1.700-5 .5z" fill="#d8b02c"/><path d="M12.500 68h6l.500 4h-5.500z" fill="#262a3c"/><path d="M30 70l7.500-1 1.500 2.800-8.500 1z" fill="#ecebe6"/><path d="M37.500 20.500l5.500-4.300 9.500-.5 6.500 4 3.500 8.500-.5 14-14.500 1-1.500-12-4 3-3.500-3.500z" fill="#18171a"/><path d="M38 29.500l4.200 1.200-.700 1.700-4.300-1.200zM50 28l6-1.500.500 1.800-6 1.500z" fill="#d8302c"/><path d="M47.500 38h13l.300 4.500H48z" fill="#a88e30"/><path d="M44.500 29l5 1.500-5 11.500-4.500-2z" fill="#d2a088"/><ellipse cx="42.800" cy="12" rx="4.200" ry="5" fill="#dcae94"/><path d="M38.700 10.500c.500-4.600 8-4.800 8.600-.400-2.600-1.200-6-1.200-8.600.400z" fill="#c9a266"/><path d="M46 43h17l1.200 8.500-8 1-2.200-4.500-2.500 4.500-6-.500z" fill="#121214"/><ellipse cx="37.800" cy="42" rx="4.700" ry="4.300" fill="#e9f0f6"/><path d="M34 43.500c2 2.500 5.500 2.500 7.600 0" stroke="#4aa6d8" stroke-width="1.300" fill="none"/><path d="M44 51.500l5 .5-4.500 10-4.500-.5zM57 52l6.500-.5 5.500 11-4 2z" fill="#cfa088"/><path d="M40.300 57.500l5 .5-2 10h-4.500zM63 58.500l4-1.500 3 8-3.500 1.500z" fill="#18171a"/><path d="M40 60.300l5 .5-.300 1.700-5-.500z" fill="#d8b02c"/><path d="M32 69.500l7.500-1.500 1.500 3-8.500 1.500z" fill="#f0eee8"/><path d="M66 66.500l5 1-1 4.500-4.500-1.500z" fill="#ecebe6"/><path d="M73.500 0h20l2 24.500-17.500 2-3-14.500z" fill="#8a2a3c"/><path d="M89 8c1.500 3 1.500 7 0 10.500" stroke="#d8a52c" stroke-width="1.300" fill="none"/><path d="M76.500 8c-1.500 7-3 14-4.500 21.500l-4 6 3.500 2.500 5.500-8 3-15z" fill="#d7a78e"/><path d="M80 20.500l8 .5-.500 5.500-8-.5z" fill="#eef1f5"/><path d="M71 27l25-2.500 1.500 17-10 3.500-3.500-4-4.500 5.500-9-3z" fill="#e7dfd0"/><path d="M80 36h8.500v2.800H80z" fill="#6bc3e8"/><path d="M89 30l5.500-.5.300 2.500-5.500.5z" fill="#e3d23c"/><path d="M70 42l8.500 2-3 19-5.500-.5zM88 43.500l8.500-3.500 12.500 19.500-4.500 3z" fill="#d3a48b"/><path d="M69 42.500l9.500 2.500-.800 4-9.200-2.500zM87.500 43.500l9-3.500 1.500 4-9.500 3.500z" fill="#e9e2d5"/><path d="M68.500 62l6.500.500-2 10h-4.500zM101.500 61l5.500-3 2 5v8l-3 .500z" fill="#8f2438"/><path d="M57.500 70.500l9-1.500 5 2.500.5 3.500-14-1z" fill="#ecebe6"/><path d="M105 73.500l4-.500v4.500l-4.500-.500z" fill="#f2f1ee"/></g></svg></svg><svg style="left:43px;top:131px;" width="109.80" height="3.60" viewBox="-0.200 0.000 109.800 3.600"><defs><pattern id="lp26" width="108.8" height="16.50" patternUnits="userSpaceOnUse"><g stroke="#555" stroke-width="0.8" fill="none"><path d="M0 0.40H108.8" stroke-dasharray="1.2 0.5 1.8 0.6 3.6 0.6 3.0 0.8 3.0 0.5 1.2 0.8 1.8 0.8 2.4 0.6 3.6 0.5 4.4 0.5 3.0 0.6 3.6 0.8 2.4 0.6 4.4 0.5 4.4 0.8 3.0 0.6 3.6 0.5 1.2 0.5 1.8 0.8 1.2 0.6 3.0 0.6 1.2 0.8 1.8 0.8 1.8 0.5 3.0 0.6 3.0 0.6 1.8 0.8 4.4 0.5 3.6 0.8 3.0 0.6 1.8 0.6 4.4 0.5 3.6 0.8"/><path d="M0 1.90H108.8" stroke-dasharray="2.4 0.5 1.2 0.6 1.2 0.6 2.4 0.5 4.4 0.8 1.8 0.6 4.4 0.5 1.2 0.5 3.6 0.8 1.8 0.5 1.2 0.6 3.6 0.5 1.8 0.8 2.4 0.6 2.4 0.6 1.8 0.8 1.8 0.6 1.8 0.6 1.8 0.6 1.2 0.6 3.0 0.5 3.0 0.8 2.4 0.8 3.0 0.8 1.2 0.8 3.0 0.5 3.6 0.8 3.6 0.8 3.0 0.6 4.4 0.5 1.2 0.6 2.4 0.5 1.8 0.8 3.0 0.8 3.0 0.8 2.4 0.5"/><path d="M0 3.40H108.8" stroke-dasharray="3.6 0.6 2.4 0.5 3.0 0.6 4.4 0.8 1.2 0.5 1.8 0.6 4.4 0.6 3.0 0.5 3.0 0.8 4.4 0.8 2.4 0.6 4.4 0.5 3.0 0.8 1.8 0.6 4.4 0.6 1.8 0.8 1.2 0.6 3.0 0.8 1.8 0.5 3.0 0.6 3.6 0.8 2.4 0.8 1.8 0.5 3.6 0.6 3.6 0.5 2.4 0.8 1.2 0.8 3.6 0.5 1.2 0.8 3.6 0.5 1.8 0.5 3.6 0.8"/><path d="M0 4.90H108.8" stroke-dasharray="4.4 0.8 4.4 0.5 1.8 0.5 1.8 0.8 1.8 0.8 1.2 0.8 4.4 0.6 1.8 0.5 3.6 0.8 3.0 0.8 1.8 0.5 4.4 0.8 2.4 0.8 1.2 0.8 1.2 0.5 4.4 0.6 3.0 0.5 2.4 0.5 3.0 0.5 3.6 0.6 3.6 0.6 4.4 0.6 2.4 0.6 3.0 0.5 1.2 0.5 2.4 0.8 3.0 0.5 3.6 0.6 4.4 0.8 2.4 0.6 3.6 0.8"/><path d="M0 6.40H108.8" stroke-dasharray="1.2 0.5 4.4 0.6 4.4 0.8 4.4 0.8 1.8 0.8 3.6 0.8 4.4 0.6 2.4 0.6 1.8 0.5 3.6 0.6 1.8 0.8 3.0 0.5 3.6 0.8 4.4 0.5 1.2 0.5 3.6 0.8 3.0 0.8 2.4 0.6 1.8 0.8 2.4 0.6 1.8 0.6 3.6 0.5 1.8 0.5 2.4 0.8 2.4 0.8 3.0 0.5 4.4 0.5 2.4 0.6 3.0 0.8 1.8 0.5 1.2 0.5 3.0 0.6"/><path d="M0 7.90H108.8" stroke-dasharray="2.4 0.5 1.2 0.6 3.6 0.8 2.4 0.8 2.4 0.5 1.8 0.8 1.8 0.6 4.4 0.6 4.4 0.6 4.4 0.6 4.4 0.8 1.8 0.6 1.8 0.6 3.0 0.5 1.8 0.8 3.6 0.6 2.4 0.8 1.8 0.5 1.8 0.6 3.6 0.8 4.4 0.6 3.0 0.5 3.6 0.5 1.2 0.5 3.6 0.8 3.6 0.8 1.2 0.5 2.4 0.8 3.0 0.5 1.2 0.6 3.6 0.8 3.0 0.5"/><path d="M0 9.40H83.5" stroke-dasharray="4.4 0.6 4.4 0.5 2.4 0.6 3.6 0.5 2.4 0.6 3.6 0.5 3.0 0.6 3.0 0.6 3.0 0.6 4.4 0.6 1.2 0.5 3.0 0.5 4.4 0.5 3.0 0.5 1.2 0.6 3.0 0.8 2.4 0.5 3.0 0.8 4.4 0.6 2.4 0.5 3.0 0.6 3.6 0.5 2.4 0.5 2.4 0.6 2.4 0.6 3.0 0.8 1.2 0.5 2.4 0.8 3.6 0.5 3.0 0.5 4.4 0.8"/><path d="M0 10.90H50.7" stroke-dasharray="3.0 0.8 1.2 0.8 1.8 0.6 1.8 0.6 4.4 0.5 3.6 0.6 4.4 0.8 3.6 0.8 3.0 0.6 3.6 0.8 4.4 0.6 2.4 0.6 1.2 0.6 3.0 0.6 2.4 0.5 2.4 0.5 2.4 0.6 4.4 0.5 1.8 0.6 1.8 0.8 4.4 0.5 2.4 0.8 1.2 0.8 2.4 0.6 2.4 0.8 1.8 0.5 1.8 0.5 4.4 0.8 3.6 0.5 1.2 0.8 4.4 0.5 1.8 0.5"/><path d="M0 12.40H108.8" stroke-dasharray="4.4 0.8 2.4 0.8 1.8 0.8 3.6 0.6 1.8 0.6 3.6 0.6 4.4 0.5 1.8 0.8 3.0 0.6 4.4 0.6 3.6 0.6 1.8 0.5 3.0 0.8 2.4 0.5 3.0 0.6 1.2 0.6 1.2 0.6 4.4 0.8 1.8 0.6 1.8 0.5 4.4 0.6 1.8 0.5 3.6 0.8 1.8 0.8 3.6 0.8 4.4 0.8 1.2 0.6 3.0 0.6 3.0 0.8 3.0 0.5 3.6 0.6"/><path d="M0 13.90H108.8" stroke-dasharray="1.8 0.6 4.4 0.8 3.0 0.5 3.0 0.8 1.8 0.6 2.4 0.6 1.8 0.5 2.4 0.8 3.0 0.8 1.2 0.6 4.4 0.8 1.8 0.8 4.4 0.8 1.8 0.8 2.4 0.5 3.6 0.5 3.0 0.8 3.0 0.8 3.6 0.5 2.4 0.6 1.8 0.5 3.6 0.8 4.4 0.5 4.4 0.5 1.2 0.8 2.4 0.5 1.2 0.5 4.4 0.5 3.6 0.5 2.4 0.8 3.6 0.6 1.8 0.6"/><path d="M0 15.40H108.8" stroke-dasharray="3.0 0.8 4.4 0.5 3.6 0.6 2.4 0.8 2.4 0.8 2.4 0.6 3.6 0.5 1.2 0.5 3.0 0.6 4.4 0.6 3.6 0.5 4.4 0.5 4.4 0.5 3.0 0.8 2.4 0.8 3.6 0.6 3.6 0.6 2.4 0.6 4.4 0.8 3.0 0.8 3.6 0.5 3.0 0.5 4.4 0.6 1.8 0.5 2.4 0.8 4.4 0.6 3.0 0.8 2.4 0.8 3.0 0.5"/></g></pattern></defs><rect width="108.8" height="2.6" fill="url(#lp26)"/></svg><div style="left:43.20px;top:137.20px;width:71.80px;height:18.90px;background:#f8d5d8;"></div><span class="t" style="left:44.00px;top:138.30px;font-size:2.2px;line-height:1;color:#b44;">QUOTE</span><svg style="left:44px;top:145px;" width="68.00" height="2.50" viewBox="0.000 -0.600 68.000 2.500"><defs><pattern id="lp27" width="67" height="33.00" patternUnits="userSpaceOnUse"><g stroke="#8b5a5e" stroke-width="1.5" fill="none"><path d="M0 0.75H67.0" stroke-dasharray="2.4 0.6 1.2 0.6 2.4 0.6 2.4 0.6 2.4 0.8 1.8 0.6 1.8 0.5 3.0 0.5 4.4 0.5 2.4 0.6 1.8 0.8 2.4 0.6 4.4 0.6 3.0 0.8 3.0 0.8 1.8 0.8 1.8 0.6 3.6 0.5 1.8 0.6 1.8 0.8 2.4 0.5 3.0 0.6"/><path d="M0 3.75H67.0" stroke-dasharray="4.4 0.6 1.2 0.5 3.6 0.8 3.6 0.8 1.8 0.8 2.4 0.6 2.4 0.8 3.6 0.8 1.2 0.5 3.0 0.5 3.6 0.6 4.4 0.8 3.0 0.8 3.0 0.6 4.4 0.8 4.4 0.8 1.8 0.5 3.6 0.5"/><path d="M0 6.75H67.0" stroke-dasharray="4.4 0.5 2.4 0.8 1.8 0.5 4.4 0.6 2.4 0.8 3.6 0.5 3.6 0.8 2.4 0.8 1.2 0.6 1.8 0.8 2.4 0.8 1.2 0.8 1.2 0.6 1.8 0.6 3.0 0.8 3.0 0.8 3.6 0.5 3.6 0.8 1.8 0.8 3.6 0.8"/><path d="M1.6 9.75H67.0" stroke-dasharray="3.0 0.8 1.2 0.6 4.4 0.8 4.4 0.8 2.4 0.6 3.0 0.8 1.8 0.5 3.0 0.8 3.0 0.6 3.6 0.6 3.0 0.5 4.4 0.6 4.4 0.6 4.4 0.5 1.8 0.6 1.8 0.8 2.4 0.6 3.6 0.6"/><path d="M0 12.75H67.0" stroke-dasharray="1.8 0.5 3.0 0.8 4.4 0.6 4.4 0.8 2.4 0.6 2.4 0.6 2.4 0.5 1.8 0.6 3.6 0.6 2.4 0.8 1.8 0.8 4.4 0.6 3.0 0.8 3.6 0.8 2.4 0.8 3.0 0.6 1.2 0.5 3.0 0.5 3.0 0.6 3.0 0.5"/><path d="M0 15.75H67.0" stroke-dasharray="1.8 0.5 2.4 0.8 1.8 0.8 1.2 0.6 4.4 0.8 1.8 0.8 3.6 0.6 1.8 0.5 3.0 0.8 3.6 0.5 4.4 0.6 1.2 0.8 1.8 0.5 2.4 0.6 3.0 0.5 1.2 0.6 4.4 0.5 3.0 0.8 1.8 0.6 1.8 0.6 4.4 0.6"/><path d="M0 18.75H67.0" stroke-dasharray="2.4 0.8 2.4 0.6 3.0 0.5 1.8 0.8 3.0 0.6 4.4 0.6 1.8 0.5 1.2 0.6 2.4 0.6 1.8 0.5 4.4 0.6 4.4 0.8 1.8 0.6 3.6 0.5 1.8 0.6 3.0 0.5 2.4 0.5 2.4 0.6 3.6 0.8 1.2 0.6 3.6 0.5"/><path d="M0 21.75H45.0" stroke-dasharray="3.0 0.6 1.8 0.6 4.4 0.8 1.8 0.5 3.0 0.5 3.0 0.6 4.4 0.6 2.4 0.5 1.2 0.8 1.2 0.6 3.6 0.6 1.2 0.8 4.4 0.5 4.4 0.5 3.0 0.6 4.4 0.5 2.4 0.8 3.0 0.6 3.0 0.8"/><path d="M1.6 24.75H67.0" stroke-dasharray="2.4 0.5 1.8 0.5 3.0 0.5 4.4 0.8 1.2 0.8 1.8 0.6 1.2 0.5 3.6 0.6 2.4 0.8 1.8 0.5 1.2 0.6 4.4 0.5 2.4 0.6 2.4 0.6 3.0 0.5 1.8 0.8 3.0 0.5 1.8 0.5 1.8 0.5 1.2 0.6 1.2 0.8 4.4 0.5 3.0 0.8"/><path d="M0 27.75H67.0" stroke-dasharray="2.4 0.5 3.6 0.5 3.0 0.6 4.4 0.6 3.0 0.8 1.8 0.8 1.8 0.8 3.0 0.5 3.6 0.5 1.8 0.8 4.4 0.6 4.4 0.8 2.4 0.6 2.4 0.5 1.2 0.6 1.8 0.5 2.4 0.6 4.4 0.5 2.4 0.8 3.6 0.8"/><path d="M0 30.75H67.0" stroke-dasharray="1.8 0.6 3.0 0.6 4.4 0.5 4.4 0.8 2.4 0.5 2.4 0.6 4.4 0.6 4.4 0.8 3.0 0.6 1.8 0.6 4.4 0.6 3.6 0.5 1.2 0.6 3.0 0.8 1.8 0.8 4.4 0.5 1.2 0.6 1.8 0.6 3.6 0.6"/></g></pattern></defs><rect width="67" height="1.5" fill="url(#lp27)"/></svg><svg style="left:44px;top:149px;" width="68.00" height="2.50" viewBox="0.000 -0.500 68.000 2.500"><defs><pattern id="lp28" width="67" height="33.00" patternUnits="userSpaceOnUse"><g stroke="#8b5a5e" stroke-width="1.5" fill="none"><path d="M0 0.75H67.0" stroke-dasharray="2.4 0.8 3.0 0.6 4.4 0.8 2.4 0.5 3.0 0.8 3.6 0.6 2.4 0.5 3.6 0.6 3.6 0.6 1.2 0.8 3.6 0.8 4.4 0.6 3.0 0.8 1.8 0.6 1.8 0.8 4.4 0.8 2.4 0.6 4.4 0.6"/><path d="M0 3.75H67.0" stroke-dasharray="3.0 0.5 2.4 0.6 2.4 0.5 1.2 0.5 4.4 0.8 4.4 0.8 3.6 0.8 1.8 0.5 3.0 0.5 3.6 0.5 1.2 0.8 3.0 0.8 4.4 0.5 4.4 0.5 2.4 0.5 1.8 0.8 4.4 0.8 1.2 0.6 1.2 0.5 1.2 0.8"/><path d="M0 6.75H67.0" stroke-dasharray="4.4 0.6 2.4 0.5 3.6 0.6 3.0 0.6 3.0 0.5 3.0 0.5 1.2 0.6 3.6 0.8 2.4 0.6 2.4 0.5 3.6 0.6 1.2 0.8 2.4 0.8 2.4 0.8 1.8 0.6 1.8 0.6 2.4 0.6 1.8 0.6 1.2 0.6 1.2 0.5 2.4 0.6 2.4 0.8"/><path d="M1.6 9.75H49.9" stroke-dasharray="3.0 0.8 4.4 0.5 4.4 0.8 4.4 0.6 1.2 0.6 1.8 0.5 2.4 0.5 4.4 0.5 4.4 0.5 2.4 0.6 3.6 0.8 1.8 0.5 3.6 0.8 3.6 0.8 3.0 0.8 4.4 0.5 3.0 0.8 3.6 0.6"/><path d="M0 12.75H67.0" stroke-dasharray="1.8 0.8 3.0 0.6 3.6 0.6 1.2 0.6 1.2 0.6 2.4 0.6 1.2 0.5 1.2 0.5 1.8 0.5 3.6 0.8 3.0 0.6 3.6 0.6 3.0 0.6 3.0 0.5 2.4 0.5 1.2 0.6 1.2 0.6 2.4 0.8 1.2 0.6 2.4 0.8 3.0 0.6 2.4 0.8 1.2 0.8 1.8 0.8"/><path d="M0 15.75H67.0" stroke-dasharray="1.8 0.6 3.6 0.5 3.6 0.6 1.8 0.6 2.4 0.6 3.6 0.8 3.6 0.6 2.4 0.6 1.8 0.5 3.6 0.6 1.2 0.5 2.4 0.6 2.4 0.6 3.0 0.5 1.2 0.5 1.2 0.8 1.8 0.8 3.6 0.5 4.4 0.5 4.4 0.5 3.6 0.5"/><path d="M0 18.75H67.0" stroke-dasharray="4.4 0.6 3.0 0.8 2.4 0.8 2.4 0.8 1.8 0.5 3.6 0.8 1.2 0.8 3.0 0.6 2.4 0.5 2.4 0.8 2.4 0.6 1.2 0.5 2.4 0.6 2.4 0.6 2.4 0.6 1.8 0.6 3.6 0.8 3.0 0.5 2.4 0.5 1.2 0.5 3.6 0.6 1.2 0.6"/><path d="M0 21.75H67.0" stroke-dasharray="2.4 0.8 4.4 0.8 3.6 0.6 4.4 0.5 1.8 0.5 2.4 0.8 2.4 0.5 1.2 0.5 2.4 0.8 1.2 0.5 1.8 0.5 3.0 0.5 1.2 0.6 1.2 0.5 3.6 0.8 3.6 0.5 3.0 0.8 2.4 0.5 3.0 0.5 3.6 0.8 3.6 0.8"/><path d="M0 24.75H67.0" stroke-dasharray="3.0 0.8 3.6 0.5 1.8 0.6 2.4 0.6 3.6 0.8 4.4 0.8 1.2 0.6 3.0 0.6 4.4 0.8 3.6 0.6 1.8 0.5 3.0 0.8 3.0 0.8 1.2 0.5 3.6 0.8 1.8 0.5 2.4 0.6 1.2 0.6 3.0 0.5 4.4 0.6"/><path d="M0 27.75H67.0" stroke-dasharray="1.8 0.5 3.6 0.8 3.0 0.8 1.8 0.8 4.4 0.8 3.0 0.5 2.4 0.8 3.0 0.6 4.4 0.5 4.4 0.5 1.8 0.5 3.6 0.8 4.4 0.8 3.6 0.8 3.0 0.6 2.4 0.8 2.4 0.6 3.0 0.8"/><path d="M0 30.75H67.0" stroke-dasharray="1.8 0.8 2.4 0.5 4.4 0.6 3.0 0.6 1.2 0.8 4.4 0.8 1.8 0.8 4.4 0.6 1.2 0.6 3.6 0.8 3.6 0.6 4.4 0.8 2.4 0.6 3.6 0.5 3.0 0.6 3.6 0.8 1.2 0.5 3.6 0.6 1.8 0.8"/></g></pattern></defs><rect width="67" height="1.5" fill="url(#lp28)"/></svg><svg style="left:44px;top:153px;" width="68.00" height="2.50" viewBox="0.000 -0.400 68.000 2.500"><defs><pattern id="lp29" width="67" height="33.00" patternUnits="userSpaceOnUse"><g stroke="#8b5a5e" stroke-width="1.5" fill="none"><path d="M0 0.75H67.0" stroke-dasharray="1.2 0.5 2.4 0.8 1.8 0.5 1.8 0.5 1.8 0.6 2.4 0.8 1.8 0.8 3.6 0.5 1.8 0.8 1.8 0.6 4.4 0.6 4.4 0.8 2.4 0.6 3.0 0.5 4.4 0.8 3.6 0.6 1.2 0.6 2.4 0.6 4.4 0.5 4.4 0.8"/><path d="M1.6 3.75H24.2" stroke-dasharray="3.0 0.5 1.2 0.5 3.0 0.8 3.6 0.5 3.6 0.5 1.2 0.5 1.8 0.6 2.4 0.8 4.4 0.8 3.0 0.5 4.4 0.5 4.4 0.5 1.8 0.5 1.2 0.5 2.4 0.8 4.4 0.8 3.0 0.5 1.8 0.8 3.6 0.8 2.4 0.6"/><path d="M0 6.75H67.0" stroke-dasharray="3.6 0.6 3.0 0.8 2.4 0.6 4.4 0.8 2.4 0.8 3.6 0.5 1.2 0.6 1.8 0.8 4.4 0.8 3.0 0.8 4.4 0.8 4.4 0.5 1.2 0.6 2.4 0.6 2.4 0.6 1.2 0.8 1.2 0.5 1.2 0.5 4.4 0.8 1.8 0.5"/><path d="M0 9.75H67.0" stroke-dasharray="3.0 0.5 3.0 0.5 2.4 0.8 2.4 0.5 1.2 0.5 4.4 0.6 1.8 0.6 1.2 0.5 3.6 0.6 3.0 0.8 1.8 0.5 1.2 0.8 1.8 0.5 2.4 0.5 1.2 0.5 3.6 0.8 4.4 0.5 1.2 0.6 1.8 0.5 1.2 0.8 2.4 0.8 2.4 0.8 1.8 0.8"/><path d="M1.6 12.75H67.0" stroke-dasharray="2.4 0.8 3.6 0.6 3.6 0.8 3.6 0.5 4.4 0.8 4.4 0.5 3.0 0.8 3.6 0.5 1.8 0.5 1.8 0.5 4.4 0.5 3.0 0.5 3.0 0.8 4.4 0.6 3.6 0.8 1.2 0.6 3.6 0.8 4.4 0.8"/><path d="M0 15.75H67.0" stroke-dasharray="1.8 0.5 4.4 0.5 1.8 0.6 1.2 0.8 2.4 0.8 3.0 0.5 4.4 0.5 3.0 0.8 1.8 0.8 3.0 0.8 3.6 0.8 1.8 0.5 3.6 0.5 4.4 0.6 1.2 0.5 1.8 0.8 4.4 0.5 2.4 0.5 1.2 0.6 3.0 0.5 3.6 0.6"/><path d="M0 18.75H67.0" stroke-dasharray="4.4 0.5 3.0 0.5 4.4 0.8 1.8 0.5 3.6 0.8 4.4 0.5 1.2 0.6 2.4 0.6 4.4 0.6 3.0 0.8 4.4 0.6 3.0 0.6 2.4 0.6 1.8 0.5 3.0 0.8 3.0 0.8 1.2 0.6 4.4 0.6"/><path d="M0 21.75H67.0" stroke-dasharray="3.6 0.6 1.2 0.8 4.4 0.8 2.4 0.8 3.0 0.5 3.0 0.8 3.6 0.5 4.4 0.8 3.6 0.8 4.4 0.8 3.0 0.6 4.4 0.8 1.8 0.6 3.6 0.8 4.4 0.8 4.4 0.5 2.4 0.8"/><path d="M0 24.75H67.0" stroke-dasharray="1.8 0.8 4.4 0.5 3.0 0.6 1.2 0.6 3.6 0.8 2.4 0.5 3.0 0.8 3.0 0.8 4.4 0.8 3.0 0.5 1.2 0.5 1.2 0.5 3.0 0.5 1.2 0.6 1.8 0.6 3.0 0.8 2.4 0.6 4.4 0.5 1.8 0.8 3.6 0.6 2.4 0.5"/><path d="M0 27.75H67.0" stroke-dasharray="3.0 0.5 2.4 0.6 1.8 0.5 1.2 0.6 3.6 0.6 4.4 0.8 1.2 0.5 1.2 0.5 1.2 0.6 1.8 0.6 1.2 0.5 4.4 0.5 4.4 0.6 1.2 0.6 3.0 0.5 1.2 0.6 1.8 0.6 1.2 0.6 3.0 0.6 3.0 0.8 1.8 0.8 2.4 0.8 1.8 0.6 1.2 0.5"/><path d="M0 30.75H32.5" stroke-dasharray="2.4 0.6 2.4 0.6 3.0 0.8 1.2 0.6 3.6 0.8 1.8 0.6 2.4 0.6 1.2 0.5 3.6 0.6 4.4 0.5 4.4 0.5 1.2 0.6 3.0 0.5 2.4 0.8 4.4 0.6 1.8 0.6 2.4 0.8 2.4 0.6 3.0 0.6 4.4 0.5"/></g></pattern></defs><rect width="67" height="1.5" fill="url(#lp29)"/></svg><span class="t" style="left:117.20px;top:137.20px;font-size:3.2px;line-height:1.0;color:#e8432e;font-weight:700;">Fact</span><div style="left:117.20px;top:140.60px;width:34.80px;height:0.60px;background:#e8432e;"></div><svg style="left:117px;top:142px;" width="34.00" height="8.50" viewBox="-0.200 -0.200 34.000 8.500"><defs><pattern id="lp30" width="33" height="19.80" patternUnits="userSpaceOnUse"><g stroke="#444" stroke-width="0.75" fill="none"><path d="M0 0.38H33.0" stroke-dasharray="1.8 0.6 1.8 0.6 1.2 0.5 3.0 0.8 3.6 0.6 1.8 0.6 3.0 0.8 1.8 0.8 2.4 0.8 3.0 0.6 4.4 0.5"/><path d="M0 2.17H33.0" stroke-dasharray="3.6 0.6 1.2 0.8 2.4 0.6 4.4 0.5 3.6 0.6 3.6 0.6 1.2 0.6 2.4 0.6 3.0 0.5 4.4 0.8"/><path d="M0 3.98H33.0" stroke-dasharray="4.4 0.5 4.4 0.8 4.4 0.6 2.4 0.8 1.2 0.5 1.2 0.8 1.8 0.6 1.2 0.5 3.6 0.5 4.4 0.5"/><path d="M0 5.78H33.0" stroke-dasharray="3.6 0.5 3.0 0.6 3.6 0.5 1.8 0.6 3.0 0.5 4.4 0.5 2.4 0.8 1.8 0.5 1.2 0.8 4.4 0.6"/><path d="M0 7.58H33.0" stroke-dasharray="2.4 0.6 3.6 0.8 1.2 0.6 1.8 0.6 1.2 0.8 1.8 0.8 3.0 0.5 4.4 0.5 4.4 0.8 2.4 0.5 1.2 0.6"/><path d="M0 9.38H33.0" stroke-dasharray="1.8 0.8 1.2 0.6 1.2 0.5 3.6 0.6 4.4 0.5 3.0 0.8 3.6 0.5 2.4 0.6 2.4 0.8 3.0 0.8"/><path d="M0 11.18H33.0" stroke-dasharray="3.6 0.8 3.6 0.8 1.8 0.5 4.4 0.8 1.8 0.8 1.2 0.6 2.4 0.5 2.4 0.8 1.2 0.8 1.2 0.8 2.4 0.5"/><path d="M0 12.97H33.0" stroke-dasharray="3.6 0.5 1.2 0.5 1.2 0.8 4.4 0.8 4.4 0.6 3.6 0.5 2.4 0.5 4.4 0.5 4.4 0.8"/><path d="M0 14.78H24.4" stroke-dasharray="1.2 0.5 2.4 0.5 2.4 0.8 1.8 0.8 1.8 0.5 3.6 0.5 1.2 0.6 3.0 0.6 4.4 0.6 1.2 0.5 3.6 0.5"/><path d="M0 16.57H33.0" stroke-dasharray="3.0 0.6 2.4 0.6 3.6 0.8 1.8 0.5 3.6 0.5 2.4 0.6 2.4 0.5 4.4 0.6 1.8 0.8 2.4 0.8"/><path d="M0 18.38H20.7" stroke-dasharray="4.4 0.6 2.4 0.8 2.4 0.5 3.0 0.6 1.8 0.5 1.2 0.6 1.2 0.6 4.4 0.8 3.0 0.8 2.4 0.6 3.0 0.8"/></g></pattern></defs><rect width="33" height="7.5" fill="url(#lp30)"/></svg><svg style="left:43px;top:159px;" width="35.40" height="71.00" viewBox="-0.200 -0.400 35.400 71.000"><defs><pattern id="lp31" width="34.4" height="18.92" patternUnits="userSpaceOnUse"><g stroke="#474747" stroke-width="0.64" fill="none"><path d="M0 0.32H34.4" stroke-dasharray="4.4 0.5 4.4 0.5 3.0 0.6 4.4 0.6 3.0 0.6 1.8 0.8 2.4 0.5 3.0 0.5 3.0 0.6"/><path d="M0 2.04H34.4" stroke-dasharray="3.6 0.8 1.2 0.5 1.2 0.8 4.4 0.8 2.4 0.6 1.2 0.6 1.2 0.5 1.8 0.5 4.4 0.8 1.8 0.6 4.4 0.8"/><path d="M0 3.76H18.9" stroke-dasharray="4.4 0.8 3.6 0.5 1.8 0.5 1.2 0.5 1.2 0.8 3.0 0.6 3.6 0.6 3.0 0.6 3.0 0.8 1.8 0.6 4.4 0.8"/><path d="M0 5.48H34.4" stroke-dasharray="3.6 0.8 4.4 0.6 3.0 0.5 3.0 0.6 4.4 0.8 1.2 0.8 1.2 0.5 2.4 0.5 2.4 0.5 4.4 0.8"/><path d="M0 7.20H34.4" stroke-dasharray="4.4 0.5 3.0 0.5 1.8 0.6 1.8 0.6 2.4 0.6 2.4 0.8 3.6 0.8 3.6 0.6 1.8 0.5 3.6 0.6"/><path d="M0 8.92H34.4" stroke-dasharray="1.2 0.5 2.4 0.8 1.2 0.5 1.8 0.8 3.0 0.5 2.4 0.5 1.2 0.8 4.4 0.5 1.2 0.5 1.8 0.6 4.4 0.5 2.4 0.5"/><path d="M0 10.64H34.4" stroke-dasharray="3.0 0.6 4.4 0.8 3.0 0.6 3.0 0.5 4.4 0.5 3.6 0.8 3.0 0.5 3.6 0.5 3.0 0.5"/><path d="M1.6 12.36H34.4" stroke-dasharray="3.6 0.5 1.2 0.8 4.4 0.6 3.6 0.5 1.2 0.6 3.6 0.5 2.4 0.6 2.4 0.8 3.6 0.8 1.8 0.5 1.8 0.6"/><path d="M1.6 14.08H34.4" stroke-dasharray="2.4 0.6 1.8 0.5 1.8 0.6 1.2 0.5 3.0 0.8 3.0 0.8 3.6 0.6 4.4 0.6 2.4 0.6 3.6 0.5 2.4 0.6"/><path d="M0 15.80H34.4" stroke-dasharray="2.4 0.6 2.4 0.5 4.4 0.6 1.2 0.5 1.2 0.8 4.4 0.6 2.4 0.8 3.0 0.5 3.6 0.5 2.4 0.8 4.4 0.5"/><path d="M0 17.52H34.4" stroke-dasharray="3.6 0.8 4.4 0.5 1.2 0.8 4.4 0.6 2.4 0.6 3.0 0.8 3.0 0.5 3.0 0.6 4.4 0.5"/></g></pattern></defs><rect width="34.4" height="70" fill="url(#lp31)"/></svg><svg style="left:80px;top:159px;" width="35.60" height="14.50" viewBox="-0.400 -0.400 35.600 14.500"><defs><pattern id="lp32" width="34.6" height="18.92" patternUnits="userSpaceOnUse"><g stroke="#474747" stroke-width="0.64" fill="none"><path d="M0 0.32H34.6" stroke-dasharray="3.0 0.8 2.4 0.5 3.0 0.5 4.4 0.6 3.0 0.5 1.2 0.6 1.8 0.8 1.8 0.5 1.8 0.6 4.4 0.5 1.8 0.6"/><path d="M1.6 2.04H34.6" stroke-dasharray="1.8 0.6 3.6 0.5 2.4 0.5 3.0 0.6 1.8 0.5 4.4 0.8 1.2 0.5 2.4 0.5 3.0 0.5 4.4 0.6 1.2 0.5"/><path d="M0 3.76H17.9" stroke-dasharray="3.6 0.5 3.6 0.5 2.4 0.8 1.2 0.6 3.6 0.6 3.6 0.6 3.0 0.8 2.4 0.8 1.8 0.5 1.2 0.5 2.4 0.8"/><path d="M0 5.48H24.2" stroke-dasharray="3.6 0.5 2.4 0.8 4.4 0.5 2.4 0.8 4.4 0.5 1.2 0.6 1.8 0.5 4.4 0.6 1.8 0.5 3.0 0.8"/><path d="M0 7.20H34.6" stroke-dasharray="1.8 0.6 4.4 0.5 2.4 0.8 4.4 0.5 1.2 0.8 1.2 0.5 3.0 0.5 2.4 0.6 2.4 0.6 3.0 0.6 3.0 0.6"/><path d="M0 8.92H12.7" stroke-dasharray="3.0 0.8 3.0 0.6 3.0 0.8 3.6 0.5 2.4 0.6 1.8 0.6 1.2 0.5 1.2 0.5 1.8 0.5 1.8 0.5 4.4 0.8 4.4 0.8"/><path d="M1.6 10.64H34.6" stroke-dasharray="2.4 0.6 4.4 0.5 4.4 0.5 3.6 0.5 2.4 0.6 1.8 0.5 3.6 0.5 1.2 0.6 4.4 0.5 3.6 0.5"/><path d="M0 12.36H34.6" stroke-dasharray="4.4 0.8 3.0 0.6 1.8 0.8 3.6 0.8 2.4 0.8 1.2 0.6 1.2 0.8 1.8 0.8 3.0 0.6 1.2 0.8 1.8 0.6 2.4 0.6"/><path d="M1.6 14.08H34.6" stroke-dasharray="4.4 0.8 2.4 0.5 1.2 0.6 1.8 0.8 3.0 0.5 1.8 0.8 4.4 0.8 3.6 0.5 3.6 0.6 3.0 0.6"/><path d="M0 15.80H34.6" stroke-dasharray="3.0 0.5 1.2 0.8 2.4 0.5 1.8 0.5 1.8 0.8 3.6 0.8 3.0 0.6 1.2 0.6 4.4 0.6 3.6 0.6 1.2 0.6 4.4 0.6"/><path d="M0 17.52H34.6" stroke-dasharray="3.0 0.5 3.6 0.6 1.2 0.5 2.4 0.6 3.6 0.6 3.0 0.8 1.8 0.8 1.2 0.8 1.8 0.5 3.6 0.6 4.4 0.6"/></g></pattern></defs><rect width="34.6" height="13.5" fill="url(#lp32)"/></svg></div>
<svg style="left:1526px;top:991px;" width="21.00" height="7.00" viewBox="-0.700 -0.300 21.000 7.000"><circle cx="3.100" cy="3" r="1.950" fill="#444"/><circle cx="10" cy="3" r="1.950" fill="#444"/><circle cx="16.900" cy="3" r="1.950" fill="#444"/></svg>
<svg style="left:1564px;top:984px;" width="24.00" height="21.00" viewBox="-0.100 -0.300 24.000 21.000"><g fill="none" stroke="#ababab" stroke-width="2.100"><path d="M4.300 12.800A7.800 7.800 0 0 1 17.600 4.700"/><path d="M18.800 7.200A7.800 7.800 0 0 1 5.500 15.300"/></g><path d="M0.400 8.300h7.400l-4 5z" fill="#ababab"/><path d="M22.700 11.700h-7.400l4-5z" fill="#ababab"/><rect x="8.400" y="8.900" width="6.200" height="5" rx="0.700" fill="#ababab"/><path d="M9.800 9.100V7.700a1.700 1.700 0 0 1 3.400 0v1.400" fill="none" stroke="#ababab" stroke-width="1.300"/><circle cx="11.500" cy="11.400" r="0.800" fill="#f7f7f7"/></svg>
<svg style="left:1604px;top:983px;" width="23.00" height="23.00" viewBox="-0.300 -0.300 23.000 23.000"><ellipse cx="8" cy="4.300" rx="3.500" ry="4.300" fill="#a9a9a9"/><path d="M0.500 15.600c0-2.600 1.200-4 3.300-4.700l2.700-1 .300-1.600h2.400l.300 1.600 2.700 1c1 .350 1.800.900 2.300 1.700L10.200 15.600z" fill="#a9a9a9"/><path d="M10 21.600l.900-3.300 8.600-8.600 2.400 2.400-8.600 8.600z" fill="#a9a9a9"/></svg>
<div style="left:1637.20px;top:982.50px;width:23.60px;height:23.60px;background:#fafafa;border-radius:50%;box-sizing:border-box;border:1px solid #d2d2d2;"></div><svg style="left:1641px;top:986px;" width="17.00" height="17.00" viewBox="0.000 -0.300 17.000 17.000"><path d="M8 1v14M1 8h14" stroke="#111" stroke-width="1.900"/></svg>
<span class="t" style="left:1518.30px;top:1019.00px;font-size:14.83px;color:#111;font-weight:700;transform:scaleX(0.9941);">PS-1412-A-018</span>
<div style="left:1674.50px;top:744.60px;width:163.50px;height:300.00px;background:#f7f7f7;border-radius:5px 5px 6px 0;"></div>
<div style="left:1674.50px;top:744.60px;width:163.50px;height:4.50px;background:#808080;border-radius:5px 5px 0 0;"></div>
<div style="left:1674.50px;top:752.60px;width:158.50px;height:217.20px;background:#fff;overflow:hidden;"><span class="t" style="left:6.00px;top:1.20px;font-size:2.4px;line-height:1;color:#222;font-weight:700;transform:scaleX(0.6182);">THE POST  Thursday, December 14, 2023</span><div style="left:5.30px;top:4.20px;width:146.20px;height:0.90px;background:#f3a89c;"></div><div style="left:5.30px;top:5.20px;width:7.20px;height:5.50px;background:#f0533c;"><span class="t" style="left:1.30px;top:0.90px;font-size:3.9px;line-height:1;color:#fff;font-weight:700;">30</span></div><span class="t" style="left:15.10px;top:5.90px;font-size:4.2px;line-height:1.0;color:#e8432e;font-weight:700;transform:scaleX(1.0031);">Sport</span><span class="t" style="left:5.30px;top:14.00px;font-size:8.85px;color:#111;font-weight:700;font-family:'Liberation Serif',serif;-webkit-text-stroke:0.22px #111;transform:scaleX(0.9392);">Print Only :  Djokovic holds on in Dubai,</span><span class="t" style="left:5.30px;top:22.00px;font-size:8.85px;color:#111;font-weight:700;font-family:'Liberation Serif',serif;-webkit-text-stroke:0.22px #111;transform:scaleX(0.9353);">streak to 18 SStesting</span><svg style="left:5px;top:33px;" width="13.00" height="2.20" viewBox="-0.300 -0.500 13.000 2.200"><defs><pattern id="lp33" width="12" height="18.70" patternUnits="userSpaceOnUse"><g stroke="#222" stroke-width="0.9" fill="none"><path d="M0 0.45H12.0" stroke-dasharray="2.4 0.6 1.2 0.8 3.0 0.8 4.4 0.6"/><path d="M1.6 2.15H12.0" stroke-dasharray="1.8 0.6 2.4 0.6 3.0 0.8 1.2 0.6 3.0 0.6"/><path d="M1.6 3.85H12.0" stroke-dasharray="3.0 0.8 2.4 0.8 2.4 0.8 1.2 0.8"/><path d="M0 5.55H12.0" stroke-dasharray="4.4 0.8 3.6 0.8 4.4 0.6"/><path d="M0 7.25H12.0" stroke-dasharray="1.8 0.8 3.0 0.5 2.4 0.5 3.6 0.6"/><path d="M0 8.95H12.0" stroke-dasharray="3.6 0.5 2.4 0.8 1.2 0.6 1.2 0.5 1.8 0.8"/><path d="M1.6 10.65H4.0" stroke-dasharray="4.4 0.5 2.4 0.5 3.0 0.8 3.0 0.5"/><path d="M0 12.35H12.0" stroke-dasharray="4.4 0.8 1.2 0.6 2.4 0.6 3.0 0.8"/><path d="M0 14.05H12.0" stroke-dasharray="3.6 0.8 1.2 0.5 3.6 0.5 3.0 0.5"/><path d="M0 15.75H12.0" stroke-dasharray="1.2 0.8 2.4 0.8 3.6 0.8 4.4 0.5"/><path d="M0 17.45H12.0" stroke-dasharray="1.8 0.5 2.4 0.5 4.4 0.8 1.2 0.6"/></g></pattern></defs><rect width="12" height="1.2" fill="url(#lp33)"/></svg><svg style="left:5px;top:35px;" width="20.00" height="1.80" viewBox="-0.300 -0.700 20.000 1.800"><defs><pattern id="lp34" width="19" height="18.70" patternUnits="userSpaceOnUse"><g stroke="#888" stroke-width="0.8" fill="none"><path d="M0 0.40H19.0" stroke-dasharray="4.4 0.8 1.2 0.6 4.4 0.8 1.2 0.5 3.6 0.8 3.6 0.5"/><path d="M0 2.10H19.0" stroke-dasharray="4.4 0.6 4.4 0.5 4.4 0.5 1.8 0.8 3.6 0.5"/><path d="M0 3.80H7.5" stroke-dasharray="3.6 0.5 3.6 0.6 1.8 0.5 3.6 0.8 1.2 0.5 4.4 0.5"/><path d="M0 5.50H19.0" stroke-dasharray="2.4 0.5 3.6 0.5 1.2 0.6 1.2 0.5 1.2 0.8 2.4 0.8 3.6 0.8"/><path d="M0 7.20H9.2" stroke-dasharray="1.8 0.6 1.8 0.8 3.0 0.8 1.2 0.6 1.8 0.6 3.0 0.6 2.4 0.6"/><path d="M0 8.90H19.0" stroke-dasharray="2.4 0.6 4.4 0.8 4.4 0.6 3.0 0.5 1.2 0.5 2.4 0.5"/><path d="M0 10.60H19.0" stroke-dasharray="4.4 0.8 3.6 0.6 4.4 0.6 4.4 0.5"/><path d="M0 12.30H19.0" stroke-dasharray="1.2 0.8 3.0 0.5 1.8 0.8 2.4 0.5 2.4 0.6 1.2 0.6 1.2 0.6 3.0 0.6"/><path d="M0 14.00H19.0" stroke-dasharray="3.6 0.8 1.8 0.5 2.4 0.8 4.4 0.6 3.0 0.6 3.6 0.8"/><path d="M0 15.70H7.6" stroke-dasharray="4.4 0.8 3.0 0.5 4.4 0.5 1.2 0.6 1.8 0.5 1.2 0.6"/><path d="M0 17.40H19.0" stroke-dasharray="3.6 0.5 4.4 0.6 2.4 0.6 2.4 0.6 4.4 0.5"/></g></pattern></defs><rect width="19" height="0.8" fill="url(#lp34)"/></svg><svg style="left:5px;top:39px;" width="36.50" height="191.00" viewBox="-0.300 -0.600 36.500 191.000"><defs><pattern id="lp35" width="35.5" height="18.92" patternUnits="userSpaceOnUse"><g stroke="#474747" stroke-width="0.64" fill="none"><path d="M0 0.32H35.5" stroke-dasharray="3.0 0.8 3.0 0.8 1.8 0.8 3.0 0.8 1.2 0.6 2.4 0.8 4.4 0.6 3.0 0.6 1.2 0.6 3.6 0.6 1.2 0.6 4.4 0.6"/><path d="M0 2.04H13.1" stroke-dasharray="4.4 0.5 1.8 0.6 2.4 0.6 3.6 0.5 4.4 0.6 3.6 0.8 3.6 0.5 3.0 0.5 3.0 0.8 3.0 0.6"/><path d="M1.6 3.76H27.2" stroke-dasharray="3.6 0.8 1.2 0.6 4.4 0.5 4.4 0.8 3.6 0.8 2.4 0.6 2.4 0.5 1.8 0.5 3.0 0.5 3.0 0.5"/><path d="M0 5.48H35.5" stroke-dasharray="3.6 0.5 2.4 0.5 1.8 0.5 3.0 0.8 3.6 0.8 3.0 0.8 2.4 0.5 2.4 0.8 1.2 0.8 1.8 0.5 3.0 0.6 1.8 0.8"/><path d="M0 7.20H35.5" stroke-dasharray="3.0 0.5 3.6 0.6 3.6 0.5 1.2 0.8 4.4 0.8 2.4 0.8 2.4 0.8 1.8 0.6 2.4 0.8 3.0 0.5 3.6 0.6"/><path d="M1.6 8.92H35.5" stroke-dasharray="2.4 0.5 2.4 0.6 3.0 0.5 3.0 0.5 1.8 0.6 4.4 0.5 1.2 0.5 2.4 0.6 2.4 0.6 3.0 0.6 1.2 0.6 1.2 0.8 1.2 0.6"/><path d="M0 10.64H35.5" stroke-dasharray="2.4 0.5 2.4 0.6 3.0 0.6 2.4 0.8 2.4 0.6 3.0 0.8 1.8 0.6 1.8 0.5 3.6 0.8 1.2 0.8 2.4 0.8 4.4 0.5"/><path d="M0 12.36H35.5" stroke-dasharray="4.4 0.5 4.4 0.5 3.6 0.8 1.2 0.8 3.0 0.6 1.8 0.8 4.4 0.6 4.4 0.6 3.6 0.5"/><path d="M0 14.08H35.5" stroke-dasharray="2.4 0.8 3.0 0.5 1.8 0.5 1.2 0.8 1.2 0.6 3.6 0.5 3.0 0.5 2.4 0.6 3.6 0.6 3.0 0.8 2.4 0.8 3.6 0.5"/><path d="M0 15.80H35.5" stroke-dasharray="1.8 0.6 3.0 0.6 4.4 0.5 3.0 0.5 3.0 0.6 2.4 0.8 1.2 0.6 4.4 0.8 3.6 0.5 4.4 0.8"/><path d="M0 17.52H35.5" stroke-dasharray="2.4 0.5 3.0 0.8 3.6 0.6 2.4 0.6 3.0 0.5 3.0 0.5 1.8 0.8 2.4 0.6 1.2 0.8 2.4 0.8 1.2 0.6 1.8 0.6"/></g></pattern></defs><rect width="35.5" height="190" fill="url(#lp35)"/></svg><svg style="left:42px;top:33px;" width="115.70" height="89.00" viewBox="-0.602 -0.400 116.003 89.000"><svg x="0" y="0" width="115" height="88" viewBox="0 0 115 88" overflow="hidden"><defs><linearGradient id="tn1" x1="0" y1="0" x2="0" y2="1"><stop offset="0" stop-color="#1a3474"/><stop offset="0.5" stop-color="#23468a"/><stop offset="1" stop-color="#284d92"/></linearGradient><linearGradient id="tn2" x1="0.300" y1="0" x2="0.600" y2="1"><stop offset="0" stop-color="#bfd440"/><stop offset="0.300" stop-color="#8dcb5e"/><stop offset="0.600" stop-color="#43b698"/><stop offset="1" stop-color="#1f9fa6"/></linearGradient><pattern id="tnp" width="2.400" height="2.400" patternUnits="userSpaceOnUse" patternTransform="rotate(45)"><rect width="1.200" height="1.200" fill="#17878f" opacity="0.450"/></pattern><filter id="tnb" x="-5%" y="-5%" width="110%" height="110%"><feGaussianBlur stdDeviation="0.700"/></filter><filter id="tnb2" x="-5%" y="-5%" width="110%" height="110%"><feGaussianBlur stdDeviation="1.100"/></filter></defs><rect width="115" height="88" fill="url(#tn1)"/><g filter="url(#tnb2)" fill="#7b90b6" opacity="0.600" font-family="Liberation Serif,serif" font-size="47"><text x="0" y="74">PM</text><text x="82" y="74" font-size="50">rg</text></g><g filter="url(#tnb)"><path d="M46 30l12 10 6-8-3-6z" fill="#b98a6e"/><path d="M25 55.200l6-9 14.700-9.500L56 40l6.600-11.200 16.900-1.600L99 29.800l-1 8.500-15.300 7.400 4 16L91.700 88H52.600L46 70l-5.600-11.600L29.800 63z" fill="url(#tn2)"/><path d="M25 55.200l6-9 14.700-9.500L56 40l6.600-11.200 16.900-1.600L99 29.800l-1 8.500-15.300 7.400 4 16L91.700 88H52.600L46 70l-5.600-11.600L29.800 63z" fill="url(#tnp)"/><path d="M66 50.500h4.500v1.500H66z" fill="#1c3b2c"/><path d="M99 29.300l16 2.200v9.500l-17-2.700z" fill="#c7987c"/><path d="M109 45.500l6-1v5l-5-.500z" fill="#333a4a"/><path d="M25.500 56l5.500 6.500-7.500 15-9-2.200z" fill="#c3947a"/><path d="M13.500 75.200l9.700 2.300-2 8-9.700-2.300z" fill="#39bfb2"/><path d="M12.500 83.500l8.500 1.500 3 3H13z" fill="#c79a80"/><ellipse cx="48.500" cy="19" rx="11.500" ry="13.200" transform="rotate(-12 48.500 19)" fill="#c59778"/><path d="M40 31c-8-7-9-19-2-25 6-5 16-4 20 1-7 .500-12 3-14.500 8.500l-2 6.500-2.500-1z" fill="#15120f"/><path d="M44 28c4 4.500 11 5 15.500 0l.5 4c-4 4-10 4.500-14.500 1z" fill="#5a4438"/><path d="M53.500 22.500l5 .5-.5 2.500-4.500-.5z" fill="#f1e9e4"/></g></svg></svg><svg style="left:42px;top:122px;" width="99.00" height="4.40" viewBox="-0.700 -0.600 99.000 4.400"><defs><pattern id="lp36" width="98" height="19.80" patternUnits="userSpaceOnUse"><g stroke="#333" stroke-width="0.8" fill="none"><path d="M0 0.40H98.0" stroke-dasharray="1.2 0.6 4.4 0.8 3.6 0.5 2.4 0.8 1.8 0.8 4.4 0.8 3.6 0.6 3.0 0.6 3.6 0.6 1.8 0.8 3.0 0.6 3.0 0.5 3.6 0.5 2.4 0.6 1.8 0.6 3.6 0.6 3.0 0.8 3.0 0.5 1.8 0.6 3.6 0.8 2.4 0.8 1.8 0.8 3.0 0.6 1.8 0.5 3.6 0.6 4.4 0.8 4.4 0.5 4.4 0.6"/><path d="M0 2.20H98.0" stroke-dasharray="3.6 0.5 1.8 0.8 2.4 0.5 4.4 0.8 3.6 0.5 2.4 0.5 2.4 0.8 4.4 0.8 3.0 0.8 3.0 0.6 1.8 0.8 2.4 0.8 2.4 0.8 4.4 0.5 3.0 0.5 4.4 0.6 2.4 0.8 3.0 0.5 4.4 0.6 3.0 0.6 1.8 0.6 4.4 0.6 3.0 0.6 1.2 0.5 4.4 0.8 4.4 0.6"/><path d="M0 4.00H98.0" stroke-dasharray="1.2 0.5 1.2 0.8 3.0 0.5 1.2 0.8 3.6 0.8 4.4 0.8 4.4 0.5 4.4 0.8 3.0 0.5 3.0 0.5 1.8 0.5 3.6 0.8 1.8 0.5 1.8 0.6 3.6 0.8 4.4 0.8 3.6 0.8 1.8 0.6 1.2 0.6 3.0 0.6 3.0 0.8 1.2 0.5 3.6 0.8 3.6 0.8 1.2 0.6 1.8 0.6 1.2 0.8 1.8 0.6 3.6 0.5 3.0 0.5"/><path d="M0 5.80H47.2" stroke-dasharray="3.6 0.8 3.6 0.8 3.0 0.5 3.6 0.8 4.4 0.8 3.0 0.6 3.6 0.8 3.6 0.6 3.6 0.5 3.6 0.5 2.4 0.5 3.0 0.8 1.8 0.8 4.4 0.5 3.6 0.8 3.6 0.8 1.8 0.5 1.2 0.5 3.6 0.5 2.4 0.8 4.4 0.8 2.4 0.8 2.4 0.8 3.6 0.8 3.0 0.5 4.4 0.8"/><path d="M0 7.60H98.0" stroke-dasharray="3.0 0.8 3.0 0.8 1.2 0.8 1.8 0.5 1.8 0.8 3.6 0.5 4.4 0.6 2.4 0.5 2.4 0.6 1.2 0.8 1.2 0.8 4.4 0.5 4.4 0.8 4.4 0.6 3.6 0.5 3.0 0.8 2.4 0.8 1.2 0.8 2.4 0.8 2.4 0.8 4.4 0.5 3.6 0.6 1.8 0.5 4.4 0.6 2.4 0.6 3.0 0.5 1.2 0.8 3.0 0.8 2.4 0.6"/><path d="M0 9.40H98.0" stroke-dasharray="1.8 0.5 3.6 0.5 4.4 0.6 1.2 0.8 3.6 0.8 2.4 0.8 1.2 0.6 2.4 0.8 3.6 0.6 1.2 0.8 3.0 0.8 1.8 0.8 1.2 0.5 1.2 0.6 3.0 0.5 2.4 0.5 3.0 0.8 2.4 0.5 3.6 0.5 3.6 0.8 2.4 0.6 4.4 0.6 4.4 0.6 1.8 0.8 2.4 0.6 1.2 0.5 4.4 0.5 1.8 0.6 4.4 0.6 2.4 0.5"/><path d="M0 11.20H98.0" stroke-dasharray="3.0 0.5 2.4 0.6 4.4 0.8 3.6 0.6 2.4 0.5 1.8 0.6 1.2 0.8 1.8 0.8 4.4 0.6 4.4 0.6 2.4 0.5 3.0 0.6 1.2 0.5 2.4 0.6 4.4 0.8 1.8 0.8 2.4 0.8 1.2 0.8 4.4 0.5 1.8 0.6 1.2 0.5 1.2 0.5 3.6 0.8 1.2 0.6 2.4 0.5 1.8 0.6 3.6 0.6 4.4 0.6 4.4 0.5 1.2 0.8"/><path d="M0 13.00H98.0" stroke-dasharray="3.6 0.5 1.8 0.6 3.6 0.5 4.4 0.8 2.4 0.6 1.8 0.5 3.6 0.8 2.4 0.6 3.6 0.5 3.6 0.5 1.2 0.5 1.2 0.8 2.4 0.5 1.2 0.8 2.4 0.5 4.4 0.6 1.8 0.5 1.8 0.5 1.8 0.8 3.0 0.6 4.4 0.6 3.6 0.8 4.4 0.5 1.2 0.6 1.8 0.8 4.4 0.5 3.0 0.8 2.4 0.8 1.8 0.5 4.4 0.8"/><path d="M0 14.80H70.3" stroke-dasharray="4.4 0.8 1.2 0.6 3.0 0.6 4.4 0.8 4.4 0.6 1.8 0.6 4.4 0.6 1.8 0.6 1.8 0.8 2.4 0.8 1.2 0.5 4.4 0.6 1.2 0.5 2.4 0.6 2.4 0.5 4.4 0.8 3.0 0.6 1.8 0.8 4.4 0.8 4.4 0.6 3.0 0.5 2.4 0.8 3.6 0.6 4.4 0.8 4.4 0.8 3.0 0.6 1.8 0.5"/><path d="M1.6 16.60H98.0" stroke-dasharray="1.8 0.8 2.4 0.8 1.8 0.6 1.2 0.6 4.4 0.8 1.8 0.5 3.0 0.6 2.4 0.8 4.4 0.8 3.0 0.6 4.4 0.5 1.8 0.8 4.4 0.8 3.6 0.5 3.6 0.6 2.4 0.8 1.2 0.5 4.4 0.8 2.4 0.5 1.2 0.6 3.0 0.5 2.4 0.8 2.4 0.6 2.4 0.8 2.4 0.5 1.8 0.8 2.4 0.5 4.4 0.5 4.4 0.6"/><path d="M0 18.40H98.0" stroke-dasharray="1.8 0.5 1.2 0.6 4.4 0.8 2.4 0.8 3.6 0.5 4.4 0.5 2.4 0.5 2.4 0.6 4.4 0.8 1.2 0.8 2.4 0.6 3.0 0.8 1.2 0.6 1.8 0.8 3.0 0.8 2.4 0.5 2.4 0.6 1.2 0.5 3.6 0.6 1.8 0.6 2.4 0.8 3.0 0.8 1.2 0.8 3.6 0.8 3.0 0.6 2.4 0.5 1.2 0.8 3.6 0.5 2.4 0.8 1.8 0.8 1.2 0.6 1.8 0.8"/></g></pattern></defs><rect width="98" height="3.4" fill="url(#lp36)"/></svg><span class="t" style="left:42.70px;top:129.30px;font-size:3.2px;line-height:1.0;color:#e8432e;font-weight:700;">Fact</span><div style="left:42.70px;top:132.60px;width:34.40px;height:0.60px;background:#e8432e;"></div><svg style="left:42px;top:134px;" width="32.00" height="4.60" viewBox="-0.700 -0.300 32.000 4.600"><defs><pattern id="lp37" width="31" height="19.80" patternUnits="userSpaceOnUse"><g stroke="#444" stroke-width="0.75" fill="none"><path d="M0 0.38H31.0" stroke-dasharray="2.4 0.8 3.0 0.6 2.4 0.6 2.4 0.5 1.2 0.8 3.6 0.8 1.8 0.6 1.8 0.5 2.4 0.8 1.8 0.8 4.4 0.6"/><path d="M0 2.17H31.0" stroke-dasharray="3.6 0.6 4.4 0.5 1.2 0.6 3.0 0.6 3.0 0.8 3.6 0.6 2.4 0.8 1.8 0.5 4.4 0.6"/><path d="M0 3.98H23.3" stroke-dasharray="3.6 0.6 1.2 0.5 3.0 0.5 3.0 0.6 4.4 0.8 2.4 0.5 1.2 0.8 3.0 0.5 1.2 0.8 4.4 0.8"/><path d="M0 5.78H31.0" stroke-dasharray="1.8 0.5 3.0 0.6 4.4 0.8 3.0 0.8 3.6 0.6 1.8 0.5 3.0 0.6 3.0 0.5 3.0 0.5"/><path d="M0 7.58H31.0" stroke-dasharray="3.6 0.6 2.4 0.8 4.4 0.6 1.2 0.8 2.4 0.5 1.8 0.6 1.8 0.8 2.4 0.8 3.0 0.6 3.6 0.5"/><path d="M0 9.38H12.8" stroke-dasharray="1.8 0.8 1.2 0.8 4.4 0.6 2.4 0.5 1.8 0.5 1.8 0.8 3.6 0.5 1.8 0.5 4.4 0.8 1.2 0.6 1.2 0.8"/><path d="M0 11.18H19.5" stroke-dasharray="2.4 0.6 2.4 0.5 2.4 0.6 1.8 0.6 3.0 0.8 1.8 0.6 2.4 0.5 3.6 0.5 1.2 0.6 1.8 0.5 4.4 0.8"/><path d="M1.6 12.97H31.0" stroke-dasharray="2.4 0.6 1.8 0.5 4.4 0.6 1.8 0.8 3.0 0.8 3.6 0.5 1.8 0.5 1.8 0.8 4.4 0.6 2.4 0.5"/><path d="M0 14.78H31.0" stroke-dasharray="3.6 0.6 3.0 0.8 1.2 0.6 1.8 0.8 3.0 0.6 4.4 0.6 1.2 0.6 1.2 0.6 3.6 0.8 2.4 0.5"/><path d="M0 16.57H31.0" stroke-dasharray="1.8 0.6 1.8 0.5 2.4 0.8 4.4 0.6 1.8 0.6 3.6 0.6 3.0 0.5 3.6 0.8 2.4 0.6 2.4 0.8"/><path d="M0 18.38H23.0" stroke-dasharray="2.4 0.5 1.2 0.6 2.4 0.5 3.6 0.6 1.8 0.6 3.6 0.8 1.8 0.8 1.2 0.8 2.4 0.8 1.8 0.8 1.8 0.5"/></g></pattern></defs><rect width="31" height="3.6" fill="url(#lp37)"/></svg><svg style="left:42px;top:144px;" width="35.40" height="86.00" viewBox="-0.700 -0.100 35.400 86.000"><defs><pattern id="lp38" width="34.4" height="18.92" patternUnits="userSpaceOnUse"><g stroke="#474747" stroke-width="0.64" fill="none"><path d="M0 0.32H34.4" stroke-dasharray="1.2 0.5 1.2 0.8 2.4 0.5 2.4 0.6 4.4 0.8 1.2 0.5 4.4 0.5 2.4 0.6 1.2 0.5 4.4 0.5 3.0 0.6"/><path d="M0 2.04H34.4" stroke-dasharray="4.4 0.6 1.2 0.5 2.4 0.6 1.8 0.6 1.2 0.6 3.0 0.5 3.0 0.6 4.4 0.8 1.2 0.6 1.8 0.5 3.6 0.5"/><path d="M0 3.76H34.4" stroke-dasharray="3.6 0.8 1.8 0.6 1.8 0.5 3.0 0.6 1.8 0.8 1.2 0.8 3.6 0.8 2.4 0.8 1.2 0.6 3.6 0.8 3.0 0.6"/><path d="M0 5.48H34.4" stroke-dasharray="2.4 0.8 4.4 0.8 3.6 0.6 2.4 0.8 1.8 0.8 3.0 0.6 1.2 0.5 3.6 0.8 1.2 0.5 3.0 0.6 3.0 0.6"/><path d="M0 7.20H34.4" stroke-dasharray="1.8 0.8 4.4 0.8 3.0 0.5 3.0 0.5 3.0 0.6 3.0 0.5 3.6 0.6 4.4 0.8 4.4 0.5"/><path d="M0 8.92H27.7" stroke-dasharray="2.4 0.6 4.4 0.8 1.8 0.8 1.2 0.8 3.6 0.8 2.4 0.5 1.2 0.6 4.4 0.6 3.0 0.6 1.8 0.8 1.2 0.5"/><path d="M0 10.64H34.4" stroke-dasharray="3.0 0.6 4.4 0.6 3.0 0.6 3.0 0.8 1.2 0.5 1.8 0.8 1.8 0.8 3.0 0.8 1.8 0.8 2.4 0.8 2.4 0.5"/><path d="M0 12.36H34.4" stroke-dasharray="1.2 0.8 1.2 0.8 1.8 0.5 1.2 0.6 4.4 0.8 2.4 0.5 4.4 0.8 3.0 0.5 4.4 0.5 3.0 0.6 1.2 0.8"/><path d="M0 14.08H34.4" stroke-dasharray="1.8 0.6 4.4 0.8 2.4 0.5 2.4 0.6 2.4 0.5 2.4 0.5 3.6 0.6 1.8 0.8 2.4 0.8 3.0 0.6 4.4 0.6"/><path d="M0 15.80H34.4" stroke-dasharray="1.8 0.6 2.4 0.6 3.6 0.8 1.8 0.6 1.8 0.8 4.4 0.5 2.4 0.8 1.2 0.5 3.0 0.6 2.4 0.8 1.8 0.6 3.0 0.6"/><path d="M0 17.52H34.4" stroke-dasharray="4.4 0.5 3.6 0.6 4.4 0.6 4.4 0.8 3.0 0.5 3.6 0.5 4.4 0.5 4.4 0.6"/></g></pattern></defs><rect width="34.4" height="85" fill="url(#lp38)"/></svg><svg style="left:79px;top:128px;" width="36.50" height="101.00" viewBox="-0.300 -0.900 36.500 101.000"><defs><pattern id="lp39" width="35.5" height="18.92" patternUnits="userSpaceOnUse"><g stroke="#474747" stroke-width="0.64" fill="none"><path d="M0 0.32H35.5" stroke-dasharray="2.4 0.5 1.8 0.6 2.4 0.6 1.2 0.6 1.8 0.6 2.4 0.5 2.4 0.6 3.0 0.5 1.8 0.8 2.4 0.5 1.2 0.6 4.4 0.5 1.2 0.5"/><path d="M1.6 2.04H35.5" stroke-dasharray="2.4 0.5 2.4 0.8 3.0 0.8 2.4 0.5 1.2 0.8 3.0 0.8 3.6 0.5 4.4 0.6 1.2 0.6 2.4 0.8 4.4 0.5"/><path d="M0 3.76H35.5" stroke-dasharray="3.0 0.8 2.4 0.5 3.0 0.8 3.6 0.6 4.4 0.8 1.2 0.6 1.2 0.6 3.0 0.5 3.6 0.6 3.6 0.5 3.0 0.6"/><path d="M0 5.48H35.5" stroke-dasharray="1.8 0.8 1.8 0.5 3.0 0.6 2.4 0.8 4.4 0.5 1.2 0.6 2.4 0.5 3.0 0.6 3.6 0.6 3.6 0.6 1.8 0.5"/><path d="M0 7.20H35.5" stroke-dasharray="1.8 0.8 3.0 0.6 1.8 0.5 2.4 0.8 3.0 0.8 1.8 0.8 1.2 0.8 3.0 0.5 1.2 0.6 3.6 0.5 3.6 0.6 3.0 0.8"/><path d="M0 8.92H35.5" stroke-dasharray="4.4 0.5 3.0 0.5 4.4 0.6 3.0 0.5 1.2 0.6 3.0 0.5 4.4 0.8 3.0 0.6 4.4 0.5"/><path d="M0 10.64H35.5" stroke-dasharray="4.4 0.8 1.8 0.5 1.8 0.6 1.8 0.8 3.6 0.8 3.6 0.5 3.0 0.8 1.8 0.8 1.8 0.8 3.6 0.5 2.4 0.6"/><path d="M0 12.36H22.8" stroke-dasharray="1.8 0.5 1.2 0.5 2.4 0.6 1.8 0.6 2.4 0.6 1.8 0.5 3.0 0.6 3.6 0.5 2.4 0.8 1.8 0.8 3.0 0.5 4.4 0.5"/><path d="M0 14.08H35.5" stroke-dasharray="3.6 0.5 4.4 0.6 3.6 0.6 4.4 0.8 2.4 0.8 1.8 0.8 1.8 0.5 1.2 0.8 4.4 0.5 3.0 0.6"/><path d="M0 15.80H35.5" stroke-dasharray="4.4 0.8 1.2 0.5 1.8 0.6 1.8 0.8 2.4 0.6 2.4 0.5 3.6 0.8 2.4 0.8 3.0 0.6 1.2 0.6 1.2 0.5 1.8 0.5 1.2 0.5"/><path d="M0 17.52H35.5" stroke-dasharray="3.0 0.5 3.6 0.5 4.4 0.6 1.2 0.6 1.2 0.8 1.8 0.5 1.8 0.8 1.8 0.6 1.2 0.5 3.0 0.6 2.4 0.5 1.2 0.5 2.4 0.8"/></g></pattern></defs><rect width="35.5" height="100" fill="url(#lp39)"/></svg><svg style="left:116px;top:128px;" width="36.20" height="101.00" viewBox="-0.300 -0.900 36.200 101.000"><defs><pattern id="lp40" width="35.2" height="18.92" patternUnits="userSpaceOnUse"><g stroke="#474747" stroke-width="0.64" fill="none"><path d="M0 0.32H35.2" stroke-dasharray="4.4 0.5 1.8 0.8 2.4 0.6 4.4 0.8 3.0 0.6 1.8 0.8 3.6 0.5 3.6 0.5 1.2 0.8 1.8 0.6 3.0 0.6"/><path d="M0 2.04H35.2" stroke-dasharray="3.6 0.6 3.0 0.5 1.8 0.6 3.6 0.5 1.8 0.5 3.0 0.5 1.2 0.6 4.4 0.5 1.8 0.8 1.8 0.6 1.8 0.8 1.2 0.6"/><path d="M0 3.76H11.6" stroke-dasharray="3.6 0.5 3.6 0.5 4.4 0.8 2.4 0.6 1.8 0.5 1.8 0.6 1.8 0.6 2.4 0.5 4.4 0.8 1.8 0.8 2.4 0.6"/><path d="M0 5.48H35.2" stroke-dasharray="1.8 0.8 4.4 0.5 1.2 0.8 1.8 0.8 4.4 0.6 2.4 0.8 3.0 0.6 3.6 0.5 4.4 0.5 1.2 0.6 2.4 0.6"/><path d="M0 7.20H18.8" stroke-dasharray="1.2 0.6 1.8 0.8 1.2 0.6 1.8 0.8 2.4 0.5 1.2 0.5 3.6 0.5 3.0 0.8 3.0 0.5 1.8 0.5 3.0 0.8 1.2 0.6 3.0 0.6"/><path d="M0 8.92H35.2" stroke-dasharray="1.8 0.5 1.2 0.8 2.4 0.5 4.4 0.8 4.4 0.5 4.4 0.6 4.4 0.6 1.8 0.6 4.4 0.8 3.0 0.5"/><path d="M0 10.64H35.2" stroke-dasharray="3.0 0.8 3.6 0.5 1.8 0.8 2.4 0.8 2.4 0.8 1.8 0.8 3.6 0.8 2.4 0.5 1.8 0.6 1.8 0.6 1.8 0.8 4.4 0.5"/><path d="M0 12.36H35.2" stroke-dasharray="1.8 0.6 4.4 0.8 4.4 0.8 1.8 0.8 2.4 0.8 1.2 0.5 4.4 0.8 1.8 0.6 2.4 0.5 1.8 0.8 3.0 0.8"/><path d="M0 14.08H35.2" stroke-dasharray="1.2 0.6 1.2 0.5 1.2 0.8 3.6 0.6 2.4 0.5 2.4 0.5 4.4 0.5 3.0 0.6 3.0 0.8 4.4 0.5 3.0 0.8"/><path d="M0 15.80H35.2" stroke-dasharray="3.0 0.5 4.4 0.6 3.6 0.6 4.4 0.6 3.0 0.8 4.4 0.5 3.0 0.8 3.6 0.5 3.0 0.6"/><path d="M1.6 17.52H35.2" stroke-dasharray="2.4 0.8 3.6 0.5 3.0 0.8 3.0 0.5 3.0 0.5 3.0 0.6 1.2 0.5 3.6 0.5 1.2 0.5 4.4 0.8 2.4 0.5"/></g></pattern></defs><rect width="35.2" height="100" fill="url(#lp40)"/></svg></div>
<div style="left:1688.20px;top:982.50px;width:23.60px;height:23.60px;background:#fafafa;border-radius:50%;box-sizing:border-box;border:1px solid #d2d2d2;"></div><svg style="left:1692px;top:986px;" width="17.00" height="17.00" viewBox="-0.000 -0.300 17.000 17.000"><path d="M8 1v14M1 8h14" stroke="#111" stroke-width="1.900"/></svg>
<svg style="left:1722px;top:983px;" width="23.00" height="23.00" viewBox="-0.000 -0.300 23.000 23.000"><ellipse cx="8" cy="4.300" rx="3.500" ry="4.300" fill="#a9a9a9"/><path d="M0.500 15.600c0-2.600 1.200-4 3.300-4.700l2.700-1 .300-1.600h2.400l.300 1.600 2.700 1c1 .350 1.800.900 2.300 1.700L10.200 15.600z" fill="#a9a9a9"/><path d="M10 21.600l.900-3.300 8.600-8.600 2.400 2.400-8.600 8.600z" fill="#a9a9a9"/></svg>
<svg style="left:1761px;top:984px;" width="24.00" height="21.00" viewBox="-0.000 -0.300 24.000 21.000"><g fill="none" stroke="#ababab" stroke-width="2.100"><path d="M4.300 12.800A7.800 7.800 0 0 1 17.600 4.700"/><path d="M18.800 7.200A7.800 7.800 0 0 1 5.500 15.300"/></g><path d="M0.400 8.300h7.400l-4 5z" fill="#ababab"/><path d="M22.700 11.700h-7.400l4-5z" fill="#ababab"/><rect x="8.400" y="8.900" width="6.200" height="5" rx="0.700" fill="#ababab"/><path d="M9.800 9.100V7.700a1.700 1.700 0 0 1 3.400 0v1.400" fill="none" stroke="#ababab" stroke-width="1.300"/><circle cx="11.500" cy="11.400" r="0.800" fill="#f7f7f7"/></svg>
<svg style="left:1802px;top:991px;" width="21.00" height="7.00" viewBox="-0.500 -0.300 21.000 7.000"><circle cx="3.100" cy="3" r="1.950" fill="#444"/><circle cx="10" cy="3" r="1.950" fill="#444"/><circle cx="16.900" cy="3" r="1.950" fill="#444"/></svg>
<span class="t" style="left:1728.10px;top:1019.00px;font-size:14.83px;color:#111;font-weight:700;transform:scaleX(0.9902);">PS-1412-A-019</span>
<div style="left:1674.00px;top:752.60px;width:0.00px;height:292.00px;border-left:1px dashed rgba(160,160,160,0.75);"></div>
<div style="left:486.80px;top:403.30px;width:213.80px;height:268.50px;background:#fafafa;border-radius:6px;box-shadow:0 2px 4px -1px rgba(0,0,0,.2),0 4px 5px 0 rgba(0,0,0,.14),0 1px 10px 0 rgba(0,0,0,.12);"></div>
<span class="t" style="left:540.40px;top:430.00px;font-size:16.87px;color:#1d1d1d;-webkit-text-stroke:0.6px #1d1d1d;transform:scaleX(0.9585);">Freeze page</span>
<span class="t" style="left:540.40px;top:480.00px;font-size:16.87px;color:#1d1d1d;-webkit-text-stroke:0.6px #1d1d1d;transform:scaleX(0.9880);">Change status</span>
<svg style="left:669px;top:482px;" width="8.00" height="12.00" viewBox="-0.200 -0.680 8.000 12.000"><path d="M0 0l7 5.500-7 5.500z" fill="#1d1d1d"/></svg>
<span class="t" style="left:540.40px;top:531.00px;font-size:16.87px;color:#1d1d1d;-webkit-text-stroke:0.6px #1d1d1d;transform:scaleX(0.9643);">Page</span>
<svg style="left:669px;top:532px;" width="8.00" height="12.00" viewBox="-0.200 -0.960 8.000 12.000"><path d="M0 0l7 5.500-7 5.500z" fill="#1d1d1d"/></svg>
<span class="t" style="left:540.40px;top:581.00px;font-size:16.87px;color:#1d1d1d;-webkit-text-stroke:0.6px #1d1d1d;transform:scaleX(0.9672);">Open Preview</span>
<div style="left:486.80px;top:613.00px;width:213.80px;height:50.00px;background:#1473e6;"></div>
<span class="t" style="left:540.40px;top:631.00px;font-size:16.87px;color:#fff;-webkit-text-stroke:0.6px #fff;transform:scaleX(1.0040);">Section</span>
<svg style="left:669px;top:633px;" width="8.00" height="12.00" viewBox="-0.200 -0.520 8.000 12.000"><path d="M0 0l7 5.500-7 5.500z" fill="#fff"/></svg>
<div style="left:701.40px;top:252.60px;width:241.80px;height:418.40px;background:#fafafa;border-radius:6px;box-shadow:0 2px 4px -1px rgba(0,0,0,.2),0 4px 5px 0 rgba(0,0,0,.14),0 1px 10px 0 rgba(0,0,0,.12);"></div>
<span class="t" style="left:754.10px;top:278.00px;font-size:16.87px;color:#1d1d1d;-webkit-text-stroke:0.6px #1d1d1d;transform:scaleX(0.9944);">Sport</span>
<span class="t" style="left:754.10px;top:329.00px;font-size:16.87px;color:#1d1d1d;-webkit-text-stroke:0.6px #1d1d1d;transform:scaleX(1.0120);">Entertainment</span>
<span class="t" style="left:754.10px;top:379.00px;font-size:16.87px;color:#1d1d1d;-webkit-text-stroke:0.6px #1d1d1d;transform:scaleX(0.9947);">Business</span>
<span class="t" style="left:754.10px;top:429.00px;font-size:16.87px;color:#bdbdbd;-webkit-text-stroke:0.6px #bdbdbd;transform:scaleX(1.0146);">finance</span>
<span class="t" style="left:754.10px;top:480.00px;font-size:16.87px;color:#1d1d1d;-webkit-text-stroke:0.6px #1d1d1d;transform:scaleX(1.0024);">Home and culture</span>
<span class="t" style="left:754.10px;top:530.00px;font-size:16.87px;color:#1d1d1d;-webkit-text-stroke:0.6px #1d1d1d;transform:scaleX(1.0340);">Lifestyle</span>
<span class="t" style="left:754.10px;top:581.00px;font-size:16.87px;color:#1d1d1d;-webkit-text-stroke:0.6px #1d1d1d;transform:scaleX(0.9852);">Health &amp; Wellness</span>
<span class="t" style="left:754.10px;top:631.00px;font-size:16.87px;color:#1d1d1d;-webkit-text-stroke:0.6px #1d1d1d;transform:scaleX(0.9597);">Reset</span>
<svg style="left:714px;top:428px;" width="25.00" height="19.00" viewBox="-0.500 0.000 25.000 19.000"><path d="M1.800 9.800l6.300 6.300L22 2.200" fill="none" stroke="#b0b0b0" stroke-width="2.600"/></svg>
<div style="left:691.00px;top:409.00px;width:249.00px;height:55.80px;box-sizing:border-box;border:5.200px solid #fb0007;border-radius:3px;"></div>
<div style="left:701.90px;top:613.90px;width:239.20px;height:57.00px;box-sizing:border-box;border:5.500px solid #fb0007;border-radius:3px;"></div>
<div style="left:0.00px;top:112.50px;width:82.00px;height:834.00px;background:#96000a;"></div>
<div style="left:82.00px;top:112.50px;width:3.00px;height:834.00px;background:#eeeeee;"></div>
<div style="left:0.00px;top:667.00px;width:82.00px;height:72.00px;background:#a5272b;"></div>
<div style="left:0.00px;top:667.00px;width:5.00px;height:72.00px;background:#17afbc;"></div>
<div style="left:16.00px;top:173.20px;width:52.00px;height:52.00px;background:#36215b;border-radius:15px;"><span class="t" style="left:17.05px;top:19.00px;font-size:14.53px;color:#fff;font-weight:700;transform:scaleX(0.9239);">AL</span></div>
<div style="left:16.00px;top:245.20px;width:52.00px;height:52.00px;background:#36215b;border-radius:15px;"><span class="t" style="left:7.25px;top:19.00px;font-size:14.53px;color:#fff;font-weight:700;transform:scaleX(0.9349);">PAGE</span></div>
<div style="left:16.00px;top:317.20px;width:52.00px;height:52.00px;background:#36215b;border-radius:15px;"><span class="t" style="left:16.00px;top:19.00px;font-size:14.53px;color:#fff;font-weight:700;transform:scaleX(0.9905);">PN</span></div>
<div style="left:16.00px;top:389.20px;width:52.00px;height:52.00px;background:#36215b;border-radius:15px;"><span class="t" style="left:21.75px;top:19.00px;font-size:14.53px;color:#fff;font-weight:700;transform:scaleX(0.8768);">E</span></div>
<div style="left:16.00px;top:461.20px;width:52.00px;height:52.00px;background:#36215b;border-radius:15px;"><span class="t" style="left:16.25px;top:19.00px;font-size:14.53px;color:#fff;font-weight:700;transform:scaleX(1.0057);">PS</span></div>
<div style="left:16.00px;top:533.20px;width:52.00px;height:52.00px;background:#fff;border-radius:15px;overflow:hidden;"><span class="t" style="left:-0.50px;top:19.00px;font-size:14.24px;color:#3a2463;font-weight:700;transform:scaleX(0.9564);">PRINT|L</span></div>
<div style="left:16.00px;top:605.20px;width:52.00px;height:52.00px;background:#36215b;border-radius:15px;"><span class="t" style="left:18.00px;top:19.00px;font-size:14.53px;color:#fff;font-weight:700;transform:scaleX(0.9010);">FL</span></div>
<div style="left:16.00px;top:677.20px;width:52.00px;height:52.00px;background:#36215b;border-radius:15px;"><span class="t" style="left:15.75px;top:19.00px;font-size:14.53px;color:#fff;font-weight:700;transform:scaleX(1.0153);">PH</span></div>
<div style="left:16.00px;top:749.20px;width:52.00px;height:52.00px;background:#36215b;border-radius:15px;"><span class="t" style="left:14.00px;top:19.00px;font-size:14.53px;color:#fff;font-weight:700;transform:scaleX(1.0617);">NM</span></div>
<div style="left:16.00px;top:821.20px;width:52.00px;height:52.00px;background:#36215b;border-radius:15px;"><span class="t" style="left:12.00px;top:19.00px;font-size:14.53px;color:#fff;font-weight:700;transform:scaleX(0.9720);">PAS</span></div>
<div style="left:16.00px;top:893.20px;width:52.00px;height:52.00px;background:#36215b;border-radius:15px;border:1px solid #b9a9c9;box-sizing:border-box;"></div>
<div style="left:0.00px;top:112.50px;width:82.00px;height:53.80px;background:#9e1a1f;"></div>
<div style="left:0.00px;top:166.30px;width:82.00px;height:13.00px;background:linear-gradient(#5e0006,rgba(110,0,6,0));"></div>
<svg style="left:29px;top:130px;" width="27.00" height="21.00" viewBox="0.000 -0.600 27.000 21.000"><rect x="1.700" y="1.700" width="22.500" height="16" rx="2.200" fill="none" stroke="#ab99ff" stroke-width="1.600"/><path d="M10.300 1.700v16" stroke="#ab99ff" stroke-width="1.600"/><path d="M4.300 5.700h3.400M4.300 8.200h3.400M4.300 10.700h3.400" stroke="#ab99ff" stroke-width="1.100"/></svg>
<svg style="left:60px;top:137px;" width="12.00" height="8.00" viewBox="-0.600 -0.600 12.000 8.000"><path d="M1.200 1.200l4.300 4.300 4.300-4.300" fill="none" stroke="#ab99ff" stroke-width="1.300"/></svg>
<div style="left:0.00px;top:879.00px;width:82.00px;height:20.00px;background:linear-gradient(rgba(80,0,5,0),#5a0006);"></div>
<div style="left:0.00px;top:898.60px;width:82.00px;height:48.00px;background:#96000a;"></div>
<svg style="left:35px;top:916px;" width="12.00" height="18.00" viewBox="-0.500 0.000 12.000 18.000"><path d="M1.800 1.500l6.800 7-6.800 7" fill="none" stroke="#a78bfa" stroke-width="1.700"/></svg>
<div style="left:0.00px;top:0.00px;width:1877.00px;height:112.00px;background:#fff;"></div>
<div style="left:180.00px;top:-1.00px;width:1033.00px;height:52.00px;background:#edf1fa;border-radius:26px;"></div>
<div style="left:187.30px;top:7.60px;width:35.60px;height:35.60px;background:#fff;border-radius:50%;"></div>
<svg style="left:23px;top:15px;" width="23.00" height="23.00" viewBox="0.000 0.000 23.000 23.000"><path d="M19 11H3.4M10.4 3.2L2.6 11l7.8 7.8" fill="none" stroke="#454746" stroke-width="2.1" stroke-linecap="butt" stroke-linejoin="miter"/></svg>
<svg style="left:76px;top:15px;" width="23.00" height="23.00" viewBox="-0.300 0.000 23.000 23.000"><path d="M3 11h15.6M11.6 3.2l7.8 7.8-7.8 7.8" fill="none" stroke="#a5a7a6" stroke-width="2.1"/></svg>
<svg style="left:130px;top:15px;" width="23.00" height="23.00" viewBox="-0.500 0.000 23.000 23.000"><path d="M18.6 11a7.9 7.9 0 1 1-2.4-5.7" fill="none" stroke="#454746" stroke-width="2.1"/><path d="M19.2 2.2v6.4h-6.4z" fill="#454746"/></svg>
<svg style="left:196px;top:16px;" width="21.00" height="21.00" viewBox="0.000 0.000 21.000 21.000"><circle cx="4.7" cy="5.2" r="2.5" fill="none" stroke="#333" stroke-width="1.8"/><path d="M10 5.2h8.6" stroke="#333" stroke-width="1.8"/><circle cx="15.6" cy="14.8" r="2.5" fill="none" stroke="#333" stroke-width="1.8"/><path d="M1.6 14.8h8.6" stroke="#333" stroke-width="1.8"/></svg>
<span class="t" style="left:236.10px;top:16.00px;font-size:21.54px;color:#1f1f1f;transform:scaleX(0.9696);">tryout.stage.dashboard.infomaker.io</span>
<svg style="left:1069px;top:13px;" width="27.00" height="25.00" viewBox="0.000 -0.600 27.000 25.000"><circle cx="10.200" cy="9.800" r="6.700" fill="none" stroke="#454746" stroke-width="2.300"/><path d="M15 14.800l7.600 7.200" stroke="#454746" stroke-width="2.500"/><path d="M6.800 9.800h6.800" stroke="#454746" stroke-width="2.100"/></svg>
<svg style="left:1115px;top:13px;" width="31.00" height="27.00" viewBox="0.000 0.000 31.000 27.000"><path d="M2.200 13.200C5 8 9.600 5.200 15 5.200s10 2.800 12.800 8c-2.800 5.200-7.400 8-12.800 8S5 18.400 2.200 13.200z" fill="none" stroke="#454746" stroke-width="2.400"/><circle cx="15" cy="13.200" r="4.600" fill="#454746"/><path d="M5.900 2.600l20 21" stroke="#edf1fa" stroke-width="4.600"/><path d="M4.600 3.300l20.400 21.400" stroke="#454746" stroke-width="2.400"/></svg>
<svg style="left:1165px;top:14px;" width="27.00" height="25.00" viewBox="-0.400 -0.300 27.000 25.000"><path d="M13 1.200l3.500 7.800 8.500.800-6.400 5.700 1.900 8.300L13 19.400 5.500 23.800l1.900-8.300L1 9.800l8.500-.800z" fill="#0b57d0"/></svg>
<svg style="left:1240px;top:13px;" width="25.00" height="25.00" viewBox="-0.600 -0.400 25.000 25.000"><defs><linearGradient id="pg1" x1="0" y1="0" x2="0" y2="1"><stop offset="0" stop-color="#4a1d96"/><stop offset="1" stop-color="#2a0e5e"/></linearGradient><linearGradient id="pg2" x1="0" y1="0" x2="1" y2="1"><stop offset="0" stop-color="#c44dff"/><stop offset="1" stop-color="#8a1fd0"/></linearGradient></defs><rect width="24" height="24" rx="5.500" fill="url(#pg1)"/><path d="M17.300 15.400a6.200 6.200 0 1 1-3.300-8.300" fill="none" stroke="url(#pg2)" stroke-width="3.800" stroke-linecap="round"/><circle cx="17.500" cy="6.600" r="2.300" fill="#ff5fa8"/></svg>
<svg style="left:1294px;top:13px;" width="25.00" height="25.00" viewBox="-0.400 -0.400 25.000 25.000"><rect width="24" height="24" rx="6" fill="#fdea2e"/><circle cx="11.300" cy="10.800" r="4.700" fill="none" stroke="#222" stroke-width="1.500"/><circle cx="11.300" cy="10.400" r="1.800" fill="#222"/><path d="M14.800 14.300l3.800 3.800" stroke="#222" stroke-width="1.600"/></svg>
<svg style="left:1348px;top:13px;" width="25.00" height="25.00" viewBox="-0.300 -0.400 25.000 25.000"><rect width="24" height="24" fill="#1fa538"/><path d="M4.600 12.200l4.900 5 9.900-10.400" fill="none" stroke="#fff" stroke-width="3.600"/></svg>
<svg style="left:1402px;top:13px;" width="26.00" height="27.00" viewBox="-0.500 -0.200 26.000 27.000"><path d="M17.500 18l5 5" stroke="#17996a" stroke-width="3.800" stroke-linecap="round"/><circle cx="10.800" cy="10.800" r="10.600" fill="#2db182"/><circle cx="10.800" cy="10.800" r="5.300" fill="none" stroke="#fff" stroke-width="3" stroke-dasharray="2.300 1.860"/><circle cx="10.800" cy="10.800" r="4.200" fill="#fff"/><circle cx="10.800" cy="10.800" r="2.300" fill="#2db182"/></svg>
<svg style="left:1456px;top:13px;" width="25.00" height="25.00" viewBox="-0.300 -0.400 25.000 25.000"><rect width="24" height="24" rx="6.500" fill="#fdea2e"/><rect x="5" y="7" width="14.500" height="10.500" rx="1.500" fill="none" stroke="#333" stroke-width="1.400"/><circle cx="12" cy="12" r="2.500" fill="none" stroke="#333" stroke-width="1.300"/><path d="M14 14l2.500 2.500" stroke="#333" stroke-width="1.300"/></svg>
<svg style="left:1510px;top:13px;" width="25.00" height="25.00" viewBox="-0.300 -0.400 25.000 25.000"><rect width="24" height="24" fill="#1fa538"/><path d="M4.600 12.200l4.900 5 9.900-10.400" fill="none" stroke="#fff" stroke-width="3.600"/></svg>
<svg style="left:1566px;top:17px;" width="23.00" height="18.00" viewBox="-0.400 0.000 23.000 18.000"><path d="M0 1.700h21.400M0 8.500h14M0 15.200h12.500" stroke="#9b9b9b" stroke-width="3.200"/></svg>
<svg style="left:1619px;top:11px;" width="29.00" height="28.00" viewBox="0.000 -0.300 29.000 28.000"><path d="M3.300 7.500h6.700V6.300a2.900 2.900 0 0 1 5.800 0v1.200h5.400v5.500h1a2.900 2.900 0 0 1 0 5.800h-1v5.500H3.300v-5.300h1.200a2.700 2.700 0 0 0 0-5.400H3.300z" fill="none" stroke="#454746" stroke-width="2.200" stroke-linejoin="round"/></svg>
<div style="left:1670.30px;top:14.00px;width:2.40px;height:22.50px;background:#c7d7f7;border-radius:1px;"></div>
<svg style="left:1696px;top:10px;" width="31.00" height="31.00" viewBox="-0.800 -0.500 31.000 31.000"><circle cx="15" cy="15" r="15" fill="#5a3fe0"/><circle cx="15" cy="15" r="10.200" fill="#1c0f45"/><path d="M26 4L17.200 17.200 12.800 12.800z" fill="#f0364f"/><path d="M4 26l8.800-13.200 4.400 4.400z" fill="#f4f4f8"/><circle cx="15" cy="15" r="1.600" fill="#1c0f45"/></svg>
<div style="left:1745.00px;top:-1.00px;width:200.00px;height:52.00px;background:#d3e3fd;border-radius:26px;"></div>
<span class="t" style="left:1763.60px;top:18.00px;font-size:17.88px;color:#0a285c;transform:scaleX(0.9819);">Finish update</span>
<svg style="left:28px;top:70px;" width="23.00" height="23.00" viewBox="0.000 0.000 23.000 23.000"><g fill="none" stroke="#575757" stroke-width="2"><rect x="1.400" y="1.300" width="7" height="7"/><rect x="13.400" y="1.300" width="7" height="7"/><rect x="1.400" y="13.400" width="7" height="7"/><rect x="13.400" y="13.400" width="7" height="7"/></g></svg>
<div style="left:72.20px;top:69.00px;width:2.60px;height:23.40px;background:#c7d7f7;border-radius:1px;"></div>
<svg style="left:99px;top:72px;" width="25.00" height="19.00" viewBox="0.000 0.000 25.000 19.000"><path d="M2.2 1.2h6.6l2.4 2.6h10.6a1.2 1.2 0 0 1 1.2 1.2v10.6a1.2 1.2 0 0 1-1.2 1.2H2.2A1.2 1.2 0 0 1 1 15.6V2.4a1.2 1.2 0 0 1 1.2-1.2z" fill="none" stroke="#474747" stroke-width="2" stroke-linejoin="round"/></svg>
<span class="t" style="left:135.00px;top:72.00px;font-size:18.60px;color:#3a3a3a;transform:scaleX(0.9001);">Team_Engage</span>
<div style="left:269.00px;top:69.00px;width:24.00px;height:24.00px;background:#d0112b;"><span class="t" style="left:2.50px;top:6.00px;font-size:11.63px;color:#fff;font-weight:700;font-style:italic;transform:scaleX(0.7739);">ADP</span></div>
<span class="t" style="left:301.50px;top:72.00px;font-size:18.60px;color:#3a3a3a;transform:scaleX(0.8892);">ADP - Vista ESS</span>
<svg style="left:452px;top:72px;" width="25.00" height="19.00" viewBox="0.000 0.000 25.000 19.000"><path d="M2.2 1.2h6.6l2.4 2.6h10.6a1.2 1.2 0 0 1 1.2 1.2v10.6a1.2 1.2 0 0 1-1.2 1.2H2.2A1.2 1.2 0 0 1 1 15.6V2.4a1.2 1.2 0 0 1 1.2-1.2z" fill="none" stroke="#474747" stroke-width="2" stroke-linejoin="round"/></svg>
<span class="t" style="left:488.20px;top:72.00px;font-size:18.60px;color:#3a3a3a;transform:scaleX(0.8461);">SWG</span>
<svg style="left:554px;top:72px;" width="25.00" height="19.00" viewBox="-0.300 0.000 25.000 19.000"><path d="M2.2 1.2h6.6l2.4 2.6h10.6a1.2 1.2 0 0 1 1.2 1.2v10.6a1.2 1.2 0 0 1-1.2 1.2H2.2A1.2 1.2 0 0 1 1 15.6V2.4a1.2 1.2 0 0 1 1.2-1.2z" fill="none" stroke="#474747" stroke-width="2" stroke-linejoin="round"/></svg>
<span class="t" style="left:589.90px;top:72.00px;font-size:18.60px;color:#3a3a3a;transform:scaleX(0.8158);">CLIENTS</span>
<div style="left:679.50px;top:69.00px;width:24.00px;height:24.00px;background:#4aa21f;border-radius:3px;"><span class="t" style="left:2.50px;top:7.00px;font-size:9.45px;color:#fff;font-weight:700;transform:scaleX(1.0963);">B64</span></div>
<span class="t" style="left:713.00px;top:72.00px;font-size:18.60px;color:#3a3a3a;transform:scaleX(0.9141);">Base64 Decode and...</span>
<svg style="left:910px;top:69px;" width="25.00" height="25.00" viewBox="-0.400 0.000 25.000 25.000"><rect width="24" height="24" fill="#000"/><g stroke-width="2.400" stroke-linecap="butt"><path d="M12 3.500v5.500" stroke="#fff"/><path d="M12 15v5.500" stroke="#fff"/><path d="M3.500 12h5.500" stroke="#d63aff"/><path d="M15 12h5.500" stroke="#d63aff"/><path d="M6 6l3.900 3.900" stroke="#00b9f1"/><path d="M14.100 14.100L18 18" stroke="#00b9f1"/><path d="M18 6l-3.900 3.900" stroke="#fb015b"/><path d="M9.900 14.100L6 18" stroke="#00f2e6"/></g></svg>
<span class="t" style="left:944.00px;top:72.00px;font-size:18.60px;color:#3a3a3a;transform:scaleX(0.9173);">JSON Web Tokens -...</span>
<svg style="left:1144px;top:72px;" width="25.00" height="19.00" viewBox="-0.700 0.000 25.000 19.000"><path d="M2.2 1.2h6.6l2.4 2.6h10.6a1.2 1.2 0 0 1 1.2 1.2v10.6a1.2 1.2 0 0 1-1.2 1.2H2.2A1.2 1.2 0 0 1 1 15.6V2.4a1.2 1.2 0 0 1 1.2-1.2z" fill="none" stroke="#474747" stroke-width="2" stroke-linejoin="round"/></svg>
<span class="t" style="left:1181.00px;top:72.00px;font-size:18.60px;color:#3a3a3a;transform:scaleX(0.9671);">Infomaker</span>
<svg style="left:1285px;top:68px;" width="25.50" height="25.50" viewBox="-0.700 -0.800 25.500 25.500"><circle cx="12.200" cy="12.200" r="12.200" fill="#f0a03c"/><circle cx="12.700" cy="11.700" r="10.300" fill="#e2552d"/><circle cx="13" cy="11.300" r="8.500" fill="#f6d33c"/><circle cx="13.200" cy="11" r="7" fill="#4cb848"/><circle cx="13.300" cy="10.800" r="5.600" fill="#2fb4e8"/><circle cx="13.300" cy="10.700" r="3.900" fill="#1b1b1b"/><circle cx="14.700" cy="9.300" r="1.200" fill="#fff"/></svg>
<span class="t" style="left:1319.30px;top:72.00px;font-size:18.60px;color:#3a3a3a;transform:scaleX(0.9186);">Browserstack-Dash...</span>
<svg style="left:1681px;top:74px;" width="17.00" height="15.00" viewBox="0.000 0.000 17.000 15.000"><path d="M1.500 1.500l5.300 5.500-5.300 5.500M8.500 1.500l5.300 5.500-5.300 5.500" fill="none" stroke="#454746" stroke-width="1.900"/></svg>
<div style="left:1722.20px;top:69.40px;width:2.40px;height:23.00px;background:#c7d7f7;border-radius:1px;"></div>
<svg style="left:1749px;top:72px;" width="25.00" height="19.00" viewBox="0.000 0.000 25.000 19.000"><path d="M2.2 1.2h6.6l2.4 2.6h10.6a1.2 1.2 0 0 1 1.2 1.2v10.6a1.2 1.2 0 0 1-1.2 1.2H2.2A1.2 1.2 0 0 1 1 15.6V2.4a1.2 1.2 0 0 1 1.2-1.2z" fill="none" stroke="#474747" stroke-width="2" stroke-linejoin="round"/></svg>
<span class="t" style="left:1785.70px;top:72.00px;font-size:18.60px;color:#3a3a3a;transform:scaleX(0.9925);">All Bookmarks</span>
<div style="left:0.00px;top:110.50px;width:1877.00px;height:1.20px;background:#dcdcdc;"></div>
</div></body></html>
